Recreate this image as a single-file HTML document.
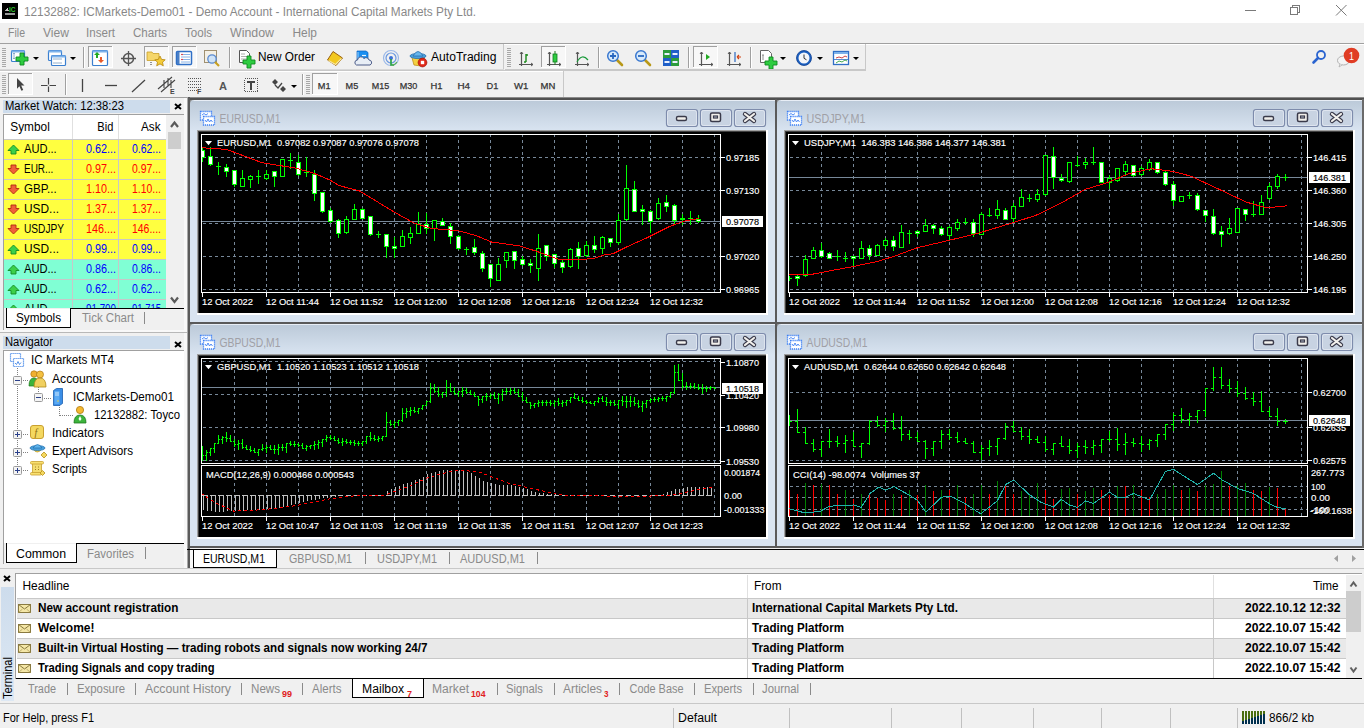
<!DOCTYPE html><html><head><meta charset="utf-8"><style>html,body{margin:0;padding:0;overflow:hidden;background:#f0f0f0;font-family:"Liberation Sans",sans-serif}svg{display:block}text{shape-rendering:auto}</style></head><body><svg width="1364" height="728" viewBox="0 0 1364 728" font-family="Liberation Sans, sans-serif" shape-rendering="crispEdges"><rect x="0" y="0" width="1364" height="728" fill="#f0f0f0" />
<rect x="0" y="0" width="1364" height="23" fill="#ffffff" />
<rect x="2" y="3" width="16" height="16" fill="#000" />
<text x="9" y="12" font-size="7.5" fill="#2ec02e" font-weight="bold" text-anchor="start" textLength="6.5" lengthAdjust="spacingAndGlyphs" xml:space="preserve" shape-rendering="auto">IC</text>
<rect x="5" y="10" width="1" height="1" fill="#aaa" />
<rect x="6" y="9" width="1" height="2" fill="#bbb" />
<rect x="7" y="8" width="1" height="3" fill="#ccc" />
<rect x="8" y="10" width="1" height="1" fill="#caa" />
<rect x="5" y="13" width="10" height="2" fill="#999" />
<text x="24" y="16" font-size="12" fill="#888" font-weight="normal" text-anchor="start" textLength="452" lengthAdjust="spacingAndGlyphs" xml:space="preserve" >12132882: ICMarkets-Demo01 - Demo Account - International Capital Markets Pty Ltd.</text>
<rect x="1245" y="10" width="11" height="1" fill="#7a7a7a" />
<path d="M1290.5 7.5 h7 v7 h-7 z M1292.5 7.5 v-2 h7 v7 h-2" fill="none" stroke="#7a7a7a" stroke-width="1"/>
<path d="M1336 5 L1346.5 15.5 M1346.5 5 L1336 15.5" stroke="#7a7a7a" stroke-width="1" shape-rendering="auto"/>
<text x="8" y="37" font-size="12" fill="#8a8a8a" font-weight="normal" text-anchor="start" textLength="17" lengthAdjust="spacingAndGlyphs" xml:space="preserve" >File</text>
<text x="43" y="37" font-size="12" fill="#8a8a8a" font-weight="normal" text-anchor="start" textLength="26" lengthAdjust="spacingAndGlyphs" xml:space="preserve" >View</text>
<text x="86" y="37" font-size="12" fill="#8a8a8a" font-weight="normal" text-anchor="start" textLength="29" lengthAdjust="spacingAndGlyphs" xml:space="preserve" >Insert</text>
<text x="133" y="37" font-size="12" fill="#8a8a8a" font-weight="normal" text-anchor="start" textLength="34" lengthAdjust="spacingAndGlyphs" xml:space="preserve" >Charts</text>
<text x="185" y="37" font-size="12" fill="#8a8a8a" font-weight="normal" text-anchor="start" textLength="27" lengthAdjust="spacingAndGlyphs" xml:space="preserve" >Tools</text>
<text x="230" y="37" font-size="12" fill="#8a8a8a" font-weight="normal" text-anchor="start" textLength="44" lengthAdjust="spacingAndGlyphs" xml:space="preserve" >Window</text>
<text x="292.5" y="37" font-size="12" fill="#8a8a8a" font-weight="normal" text-anchor="start" textLength="24.5" lengthAdjust="spacingAndGlyphs" xml:space="preserve" >Help</text>
<rect x="0" y="43" width="1364" height="1" fill="#a0a0a0" />
<rect x="0" y="44" width="1364" height="1" fill="#ffffff" />
<rect x="0" y="70" width="866" height="1" fill="#c8c8c8" />
<rect x="0" y="71" width="564" height="1" fill="#ffffff" />
<rect x="0" y="97" width="1364" height="1" fill="#a0a0a0" />
<rect x="0" y="44" width="504" height="26" fill="#f0f0f0" />
<rect x="2" y="48" width="4" height="1" fill="#a8a8a8" />
<rect x="2" y="50" width="4" height="1" fill="#a8a8a8" />
<rect x="2" y="52" width="4" height="1" fill="#a8a8a8" />
<rect x="2" y="54" width="4" height="1" fill="#a8a8a8" />
<rect x="2" y="56" width="4" height="1" fill="#a8a8a8" />
<rect x="2" y="58" width="4" height="1" fill="#a8a8a8" />
<rect x="2" y="60" width="4" height="1" fill="#a8a8a8" />
<rect x="2" y="62" width="4" height="1" fill="#a8a8a8" />
<rect x="2" y="64" width="4" height="1" fill="#a8a8a8" />
<rect x="2" y="66" width="4" height="1" fill="#a8a8a8" />
<g shape-rendering="auto"><rect x="11.5" y="50.5" width="13" height="11" rx="1" fill="#fff" stroke="#3a7fd0" stroke-width="1.2"/><rect x="11.5" y="50.5" width="13" height="2" fill="#7db2ea"/></g>
<g shape-rendering="auto"><path d="M14 53 v6 M13 54 l1 -1 l1 1 M13 58 l1 1 l1 -1" stroke="#7a9cc0" stroke-width="0.8" fill="none"/></g>
<g shape-rendering="auto"><path d="M20.0 53 h4.0 v4.0 h4.0 v4.0 h-4.0 v4.0 h-4.0 v-4.0 h-4.0 v-4.0 h4.0 z" fill="#2ecc40" stroke="#0f8a1f" stroke-width="0.9"/></g>
<path d="M33 57 h6 l-3 3 z" fill="#000" shape-rendering="auto"/>
<g shape-rendering="auto"><rect x="48.5" y="50.5" width="13" height="10" rx="1" fill="#fff" stroke="#3a7fd0" stroke-width="1.2"/><rect x="48.5" y="50.5" width="13" height="2" fill="#7db2ea"/></g>
<g shape-rendering="auto"><rect x="51.5" y="55.5" width="14" height="10" rx="1" fill="#fff" stroke="#3a7fd0" stroke-width="1.2"/><rect x="51.5" y="55.5" width="14" height="2" fill="#7db2ea"/></g>
<g shape-rendering="auto"><path d="M53 59 h9 M53 63 h9" stroke="#7a9cc0" stroke-width="0.8"/></g>
<path d="M70 57 h6 l-3 3 z" fill="#000" shape-rendering="auto"/>
<rect x="83" y="47" width="1" height="21" fill="#a0a0a0" />
<rect x="84" y="47" width="1" height="21" fill="#ffffff" />
<rect x="88" y="46" width="25" height="22" fill="#f7f7f7" />
<rect x="88" y="46" width="25" height="1" fill="#a0a0a0" />
<rect x="88" y="46" width="1" height="22" fill="#a0a0a0" />
<rect x="88" y="67" width="25" height="1" fill="#ffffff" />
<rect x="112" y="46" width="1" height="22" fill="#ffffff" />
<g shape-rendering="auto"><rect x="92.5" y="50.5" width="15" height="15" rx="1" fill="#fff" stroke="#3a7fd0" stroke-width="1.2"/><rect x="92.5" y="50.5" width="15" height="2" fill="#7db2ea"/></g>
<g shape-rendering="auto"><path d="M97 52 l-3 3 h2 v3 h2 v-3 h2 z" fill="#22aa22"/><path d="M101 63 l3 -3 h-2 v-3 h-2 v3 h-2 z" fill="#e85a2a"/></g>
<g shape-rendering="auto"><circle cx="128.5" cy="58.5" r="5" fill="none" stroke="#555" stroke-width="1.5"/><path d="M128.5 51 v15 M121 58.5 h15" stroke="#555" stroke-width="1.3"/></g>
<rect x="144" y="46" width="25" height="22" fill="#f7f7f7" />
<rect x="144" y="46" width="25" height="1" fill="#a0a0a0" />
<rect x="144" y="46" width="1" height="22" fill="#a0a0a0" />
<rect x="144" y="67" width="25" height="1" fill="#ffffff" />
<rect x="168" y="46" width="1" height="22" fill="#ffffff" />
<g shape-rendering="auto"><path d="M147 52 h5 l1 1.5 h6 v7 h-12 z" fill="#f5d66a" stroke="#c9a02a" stroke-width="0.8"/><path d="M160 56 l1.6 3.4 l3.6 .4 l-2.7 2.4 l.8 3.6 l-3.3 -1.9 l-3.3 1.9 l.8 -3.6 l-2.7 -2.4 l3.6 -.4 z" fill="#f4cc3a" stroke="#b8860b" stroke-width="0.8"/><path d="M151 62 v4" stroke="#333" stroke-dasharray="1 1"/></g>
<rect x="172" y="46" width="25" height="22" fill="#f7f7f7" />
<rect x="172" y="46" width="25" height="1" fill="#a0a0a0" />
<rect x="172" y="46" width="1" height="22" fill="#a0a0a0" />
<rect x="172" y="67" width="25" height="1" fill="#ffffff" />
<rect x="196" y="46" width="1" height="22" fill="#ffffff" />
<g shape-rendering="auto"><rect x="176.5" y="51.5" width="15" height="13" rx="1" fill="#fff" stroke="#2f6fc6" stroke-width="1.5"/><rect x="177" y="52" width="2.5" height="12" fill="#4a7fc6"/><path d="M181 54.5 h9 M181 57 h9 M181 59.5 h9 M181 62 h9" stroke="#6aa0e0" stroke-width="0.8"/><circle cx="182" cy="54.5" r=".8" fill="#e22"/><circle cx="182" cy="59.5" r=".8" fill="#e22"/></g>
<g shape-rendering="auto"><rect x="204.5" y="50.5" width="12" height="12" fill="#f4f0e6" stroke="#a09070" stroke-width="1"/><circle cx="212" cy="59" r="4.2" fill="#cfe3f7" stroke="#5a8ad0" stroke-width="1.3"/><path d="M215 62 l4 4" stroke="#c9a020" stroke-width="2.2"/></g>
<rect x="229" y="47" width="1" height="21" fill="#a0a0a0" />
<rect x="230" y="47" width="1" height="21" fill="#ffffff" />
<g shape-rendering="auto"><path d="M239.5 50.5 h7 l3 3 v9 h-10 z" fill="#fff" stroke="#555" stroke-width="1"/><path d="M241 54 h4 M241 56.5 h6 M241 59 h6" stroke="#999" stroke-width="0.8"/></g>
<g shape-rendering="auto"><path d="M247.0 56 h4.0 v4.0 h4.0 v4.0 h-4.0 v4.0 h-4.0 v-4.0 h-4.0 v-4.0 h4.0 z" fill="#2ecc40" stroke="#0f8a1f" stroke-width="0.9"/></g>
<text x="258" y="61" font-size="12.5" fill="#000" font-weight="normal" text-anchor="start" textLength="57" lengthAdjust="spacingAndGlyphs" xml:space="preserve" >New Order</text>
<g shape-rendering="auto"><path d="M327.5 60 L333 51.5 L342.5 58 L336 65.5 Z" fill="#f2c820" stroke="#9a6010" stroke-width="1"/><path d="M328.5 60.5 L335.5 64.5 L341.5 58.5" stroke="#f8e8a0" stroke-width="1.2" fill="none"/></g>
<g shape-rendering="auto"><path d="M357 51 h9 l2 1.5 v8 h-11 z" fill="#1a8ef0" stroke="#0a60c0" stroke-width="0.7"/><path d="M358 52 v7" stroke="#bfe4ff" stroke-width="0.8"/><path d="M362 55.5 h4" stroke="#e8f4ff" stroke-width="1.2"/><path d="M356.5 65 a2.6 2.6 0 0 1 1 -5 a3.5 3.5 0 0 1 6.5 -1.5 a3 3 0 0 1 5 1.5 a2.6 2.6 0 0 1 1 5 z" fill="#e8eef6" stroke="#4a5a88" stroke-width="1"/></g>
<g shape-rendering="auto"><circle cx="391" cy="58" r="7.5" fill="none" stroke="#9ab8e8" stroke-width="1.2"/><circle cx="391" cy="58" r="5" fill="none" stroke="#6a98e0" stroke-width="1.2"/><circle cx="391" cy="58" r="2" fill="#3a70d8"/><path d="M391 59 v6 h3" stroke="#22a040" stroke-width="1.6" fill="none"/><path d="M397 62 a7.5 7.5 0 0 1 -6 3.5" stroke="#5ab05a" stroke-width="1.2" fill="none"/></g>
<g shape-rendering="auto"><path d="M411.5 56 L425 56 L421 66 L414 65 Z" fill="#f4d040" stroke="#c09018" stroke-width="0.8"/><ellipse cx="418" cy="56" rx="8" ry="2.6" fill="#4aa0dc" stroke="#2a70b0" stroke-width="0.8"/><path d="M413 56 q5 -9 10 0 z" fill="#68b6ec" stroke="#2a70b0" stroke-width="0.8"/><circle cx="422.5" cy="62.5" r="4.4" fill="#e02818" stroke="#a01008" stroke-width="0.7"/><rect x="420.8" y="60.8" width="3.4" height="3.4" fill="#fff"/></g>
<text x="431" y="61" font-size="12.5" fill="#000" font-weight="normal" text-anchor="start" textLength="65.5" lengthAdjust="spacingAndGlyphs" xml:space="preserve" >AutoTrading</text>
<rect x="503" y="44" width="1" height="26" fill="#c8c8c8" />
<rect x="0" y="69" width="504" height="1" fill="#d8d8d8" />
<rect x="507" y="48" width="4" height="1" fill="#a8a8a8" />
<rect x="507" y="50" width="4" height="1" fill="#a8a8a8" />
<rect x="507" y="52" width="4" height="1" fill="#a8a8a8" />
<rect x="507" y="54" width="4" height="1" fill="#a8a8a8" />
<rect x="507" y="56" width="4" height="1" fill="#a8a8a8" />
<rect x="507" y="58" width="4" height="1" fill="#a8a8a8" />
<rect x="507" y="60" width="4" height="1" fill="#a8a8a8" />
<rect x="507" y="62" width="4" height="1" fill="#a8a8a8" />
<rect x="507" y="64" width="4" height="1" fill="#a8a8a8" />
<rect x="507" y="66" width="4" height="1" fill="#a8a8a8" />
<g shape-rendering="auto"><path d="M521.5 52 v14 M519 64.5 h14" stroke="#555" stroke-width="1.2" fill="none"/><path d="M520 54 l1.5 -2 l1.5 2 M531 63 l2 1.5 l-2 1.5" stroke="#555" stroke-width="1" fill="none"/></g>
<g shape-rendering="auto"><path d="M526 62 v-8 M524 62 h2 M526 55 h2" stroke="#1a8a1a" stroke-width="1.4" fill="none"/></g>
<rect x="541" y="46" width="25" height="22" fill="#f7f7f7" />
<rect x="541" y="46" width="25" height="1" fill="#a0a0a0" />
<rect x="541" y="46" width="1" height="22" fill="#a0a0a0" />
<rect x="541" y="67" width="25" height="1" fill="#ffffff" />
<rect x="565" y="46" width="1" height="22" fill="#ffffff" />
<g shape-rendering="auto"><path d="M549.5 52 v14 M547 64.5 h14" stroke="#555" stroke-width="1.2" fill="none"/><path d="M548 54 l1.5 -2 l1.5 2 M559 63 l2 1.5 l-2 1.5" stroke="#555" stroke-width="1" fill="none"/></g>
<g shape-rendering="auto"><path d="M555 51 v14" stroke="#1a7a1a" stroke-width="1"/><rect x="553" y="54" width="4" height="8" fill="#2ecc40" stroke="#0f7a1f" stroke-width="0.8"/></g>
<g shape-rendering="auto"><path d="M577.5 52 v14 M575 64.5 h14" stroke="#555" stroke-width="1.2" fill="none"/><path d="M576 54 l1.5 -2 l1.5 2 M587 63 l2 1.5 l-2 1.5" stroke="#555" stroke-width="1" fill="none"/></g>
<g shape-rendering="auto"><path d="M577 62 q5 -9 11 -2" stroke="#1a9a3a" stroke-width="1.2" fill="none"/></g>
<rect x="598" y="47" width="1" height="21" fill="#a0a0a0" />
<rect x="599" y="47" width="1" height="21" fill="#ffffff" />
<g shape-rendering="auto"><path d="M616 59 l6 6" stroke="#b89818" stroke-width="2.6" stroke-linecap="round"/><circle cx="613" cy="56" r="5.3" fill="#d8eafa" stroke="#3a78d0" stroke-width="1.5"/><path d="M610 56 h6 M613 53 v6" stroke="#2a68c0" stroke-width="1.8"/></g>
<g shape-rendering="auto"><path d="M644 59 l6 6" stroke="#b89818" stroke-width="2.6" stroke-linecap="round"/><circle cx="641" cy="56" r="5.3" fill="#d8eafa" stroke="#3a78d0" stroke-width="1.5"/><path d="M638 56 h6" stroke="#2a68c0" stroke-width="1.8"/></g>
<g shape-rendering="auto"><rect x="663" y="50" width="8" height="8" fill="#2c9c3c"/><rect x="671" y="50" width="8" height="8" fill="#1f5fc8"/><rect x="663" y="58" width="8" height="8" fill="#1f5fc8"/><rect x="671" y="58" width="8" height="8" fill="#2c9c3c"/><path d="M664.5 54 h5 M672.5 54 h5 M664.5 62 h5 M672.5 62 h5" stroke="#e8f0ff" stroke-width="2"/></g>
<rect x="688" y="47" width="1" height="21" fill="#a0a0a0" />
<rect x="689" y="47" width="1" height="21" fill="#ffffff" />
<rect x="693" y="46" width="25" height="22" fill="#f7f7f7" />
<rect x="693" y="46" width="25" height="1" fill="#a0a0a0" />
<rect x="693" y="46" width="1" height="22" fill="#a0a0a0" />
<rect x="693" y="67" width="25" height="1" fill="#ffffff" />
<rect x="717" y="46" width="1" height="22" fill="#ffffff" />
<g shape-rendering="auto"><path d="M701.5 52 v14 M699 64.5 h14" stroke="#555" stroke-width="1.2" fill="none"/><path d="M700 54 l1.5 -2 l1.5 2 M711 63 l2 1.5 l-2 1.5" stroke="#555" stroke-width="1" fill="none"/></g>
<g shape-rendering="auto"><path d="M706 54 v6 l4 -3 z" fill="#22aa22"/></g>
<g shape-rendering="auto"><path d="M729.5 52 v14 M727 64.5 h14" stroke="#555" stroke-width="1.2" fill="none"/><path d="M728 54 l1.5 -2 l1.5 2 M739 63 l2 1.5 l-2 1.5" stroke="#555" stroke-width="1" fill="none"/></g>
<g shape-rendering="auto"><path d="M735 52 v10" stroke="#2a68c0" stroke-width="1.2"/><path d="M737 57 h4 M737 57 l2 -2 M737 57 l2 2" stroke="#d04010" stroke-width="1.1" fill="none"/></g>
<rect x="750" y="47" width="1" height="21" fill="#a0a0a0" />
<rect x="751" y="47" width="1" height="21" fill="#ffffff" />
<g shape-rendering="auto"><path d="M760.5 50.5 h8 l3 3 v9 h-11 z" fill="#fff" stroke="#666" stroke-width="1"/><path d="M763 55 v5 M762 55 h2" stroke="#777" stroke-width="0.8"/></g>
<g shape-rendering="auto"><path d="M769.0 57 h4.0 v4.0 h4.0 v4.0 h-4.0 v4.0 h-4.0 v-4.0 h-4.0 v-4.0 h4.0 z" fill="#2ecc40" stroke="#0f8a1f" stroke-width="0.9"/></g>
<path d="M780 57 h6 l-3 3 z" fill="#000" shape-rendering="auto"/>
<g shape-rendering="auto"><circle cx="804" cy="58" r="7.5" fill="#1a5fc0" stroke="#0f3f90" stroke-width="0.8"/><circle cx="804" cy="58" r="5.5" fill="#f4f6fa"/><path d="M804 54.5 v3.8 l2.5 1.5" stroke="#333" stroke-width="1" fill="none"/></g>
<path d="M817 57 h6 l-3 3 z" fill="#000" shape-rendering="auto"/>
<g shape-rendering="auto"><rect x="833.5" y="51.5" width="15" height="13" fill="#fff" stroke="#2f6fc6" stroke-width="1.3"/><rect x="834" y="52" width="14" height="2" fill="#7db2ea"/><path d="M836 58 l3 -1 l3 1 l3 -2 l2 1" stroke="#c83030" stroke-width="0.9" fill="none"/><path d="M834 59.5 h14" stroke="#2f6fc6" stroke-width="0.8"/><path d="M836 63 l3 -2 l3 1 l3 -2 l2 1" stroke="#30a040" stroke-width="0.9" fill="none"/></g>
<path d="M853 57 h6 l-3 3 z" fill="#000" shape-rendering="auto"/>
<rect x="865" y="44" width="1" height="26" fill="#c8c8c8" />
<rect x="505" y="69" width="361" height="1" fill="#c8c8c8" />
<g shape-rendering="auto"><circle cx="1321" cy="55" r="4" fill="none" stroke="#2a64d0" stroke-width="1.8"/><path d="M1318 58 l-4.5 4.5" stroke="#2a64d0" stroke-width="2.6" stroke-linecap="round"/></g>
<g shape-rendering="auto"><ellipse cx="1343.5" cy="60.5" rx="6" ry="4.5" fill="#f4f4f4" stroke="#b0b0b0" stroke-width="1"/><path d="M1340 64 l-1 3 l3 -2" fill="#f4f4f4" stroke="#b0b0b0" stroke-width="0.8"/><circle cx="1351.5" cy="55.5" r="7.8" fill="#e03c24"/></g>
<text x="1349" y="60" font-size="11" fill="#fff" font-weight="normal" text-anchor="start" textLength="5" lengthAdjust="spacingAndGlyphs" xml:space="preserve" shape-rendering="auto">1</text>
<rect x="2" y="75" width="4" height="1" fill="#a8a8a8" />
<rect x="2" y="77" width="4" height="1" fill="#a8a8a8" />
<rect x="2" y="79" width="4" height="1" fill="#a8a8a8" />
<rect x="2" y="81" width="4" height="1" fill="#a8a8a8" />
<rect x="2" y="83" width="4" height="1" fill="#a8a8a8" />
<rect x="2" y="85" width="4" height="1" fill="#a8a8a8" />
<rect x="2" y="87" width="4" height="1" fill="#a8a8a8" />
<rect x="2" y="89" width="4" height="1" fill="#a8a8a8" />
<rect x="2" y="91" width="4" height="1" fill="#a8a8a8" />
<rect x="2" y="93" width="4" height="1" fill="#a8a8a8" />
<rect x="8" y="73" width="25" height="22" fill="#f7f7f7" />
<rect x="8" y="73" width="25" height="1" fill="#a0a0a0" />
<rect x="8" y="73" width="1" height="22" fill="#a0a0a0" />
<rect x="8" y="94" width="25" height="1" fill="#ffffff" />
<rect x="32" y="73" width="1" height="22" fill="#ffffff" />
<g shape-rendering="auto"><path d="M17 78 l7.5 7.5 h-3.3 l2 4.5 l-1.8 .8 l-2 -4.5 l-2.4 2.4 z" fill="#444"/></g>
<g shape-rendering="auto"><path d="M48.5 78 v14 M41 85.5 h15" stroke="#444" stroke-width="1.2"/><rect x="47.5" y="84.5" width="2" height="2" fill="#f0f0f0"/></g>
<rect x="65" y="74" width="1" height="21" fill="#a0a0a0" />
<rect x="66" y="74" width="1" height="21" fill="#ffffff" />
<g shape-rendering="auto"><path d="M82.5 79 v13" stroke="#444" stroke-width="1.3"/><path d="M105 85.5 h12" stroke="#444" stroke-width="1.3"/><path d="M132 92 l13 -12" stroke="#444" stroke-width="1.2"/></g>
<g shape-rendering="auto"><path d="M158 89 l14 -12 M161 92 l14 -12 M164 80 v8 M168 78 v8 M171 80 v8" stroke="#444" stroke-width="1.1" fill="none"/></g>
<text x="170" y="94" font-size="7" fill="#444" font-weight="bold" text-anchor="start" xml:space="preserve" >E</text>
<g shape-rendering="auto"><path d="M188 78.5 h13 M188 81.5 h13 M188 84.5 h13 M188 87.5 h13 M188 90.5 h9" stroke="#555" stroke-width="1" stroke-dasharray="1 1" fill="none"/></g>
<text x="197" y="94" font-size="7" fill="#444" font-weight="bold" text-anchor="start" xml:space="preserve" >F</text>
<text x="219" y="90" font-size="11" fill="#555" font-weight="bold" text-anchor="start" textLength="8" lengthAdjust="spacingAndGlyphs" xml:space="preserve" >A</text>
<rect x="244.5" y="78.5" width="13" height="13" fill="none" stroke="#555" stroke-dasharray="1 1"/>
<g shape-rendering="auto"><path d="M247 82 h8 M251 82 v8" stroke="#444" stroke-width="2"/></g>
<g shape-rendering="auto"><path d="M272 82 l3 -3 l3 3 l-3 3 z M280 89 l3 -3 l3 3 l-3 3 z" fill="#444"/><path d="M275 85 l3 3 l4 -5" stroke="#444" stroke-width="1.3" fill="none"/></g>
<path d="M291 85 h6 l-3 3 z" fill="#000" shape-rendering="auto"/>
<rect x="302" y="74" width="1" height="21" fill="#a0a0a0" />
<rect x="303" y="74" width="1" height="21" fill="#ffffff" />
<rect x="563" y="71" width="1" height="26" fill="#c8c8c8" />
<rect x="306" y="75" width="4" height="1" fill="#a8a8a8" />
<rect x="306" y="77" width="4" height="1" fill="#a8a8a8" />
<rect x="306" y="79" width="4" height="1" fill="#a8a8a8" />
<rect x="306" y="81" width="4" height="1" fill="#a8a8a8" />
<rect x="306" y="83" width="4" height="1" fill="#a8a8a8" />
<rect x="306" y="85" width="4" height="1" fill="#a8a8a8" />
<rect x="306" y="87" width="4" height="1" fill="#a8a8a8" />
<rect x="306" y="89" width="4" height="1" fill="#a8a8a8" />
<rect x="306" y="91" width="4" height="1" fill="#a8a8a8" />
<rect x="306" y="93" width="4" height="1" fill="#a8a8a8" />
<rect x="312" y="73" width="26" height="22" fill="#f7f7f7" />
<rect x="312" y="73" width="26" height="1" fill="#a0a0a0" />
<rect x="312" y="73" width="1" height="22" fill="#a0a0a0" />
<rect x="312" y="94" width="26" height="1" fill="#ffffff" />
<rect x="337" y="73" width="1" height="22" fill="#ffffff" />
<text x="317.8" y="89" font-size="9.5" fill="#333" font-weight="normal" text-anchor="start" textLength="12.8" lengthAdjust="spacingAndGlyphs" xml:space="preserve" stroke="#333" stroke-width="0.25" shape-rendering="auto">M1</text>
<text x="345.6" y="89" font-size="9.5" fill="#333" font-weight="normal" text-anchor="start" textLength="12.6" lengthAdjust="spacingAndGlyphs" xml:space="preserve" stroke="#333" stroke-width="0.25" shape-rendering="auto">M5</text>
<text x="371.8" y="89" font-size="9.5" fill="#333" font-weight="normal" text-anchor="start" textLength="17.4" lengthAdjust="spacingAndGlyphs" xml:space="preserve" stroke="#333" stroke-width="0.25" shape-rendering="auto">M15</text>
<text x="399.8" y="89" font-size="9.5" fill="#333" font-weight="normal" text-anchor="start" textLength="17.6" lengthAdjust="spacingAndGlyphs" xml:space="preserve" stroke="#333" stroke-width="0.25" shape-rendering="auto">M30</text>
<text x="430.5" y="89" font-size="9.5" fill="#333" font-weight="normal" text-anchor="start" textLength="12" lengthAdjust="spacingAndGlyphs" xml:space="preserve" stroke="#333" stroke-width="0.25" shape-rendering="auto">H1</text>
<text x="457.4" y="89" font-size="9.5" fill="#333" font-weight="normal" text-anchor="start" textLength="12.6" lengthAdjust="spacingAndGlyphs" xml:space="preserve" stroke="#333" stroke-width="0.25" shape-rendering="auto">H4</text>
<text x="486.5" y="89" font-size="9.5" fill="#333" font-weight="normal" text-anchor="start" textLength="11.8" lengthAdjust="spacingAndGlyphs" xml:space="preserve" stroke="#333" stroke-width="0.25" shape-rendering="auto">D1</text>
<text x="514" y="89" font-size="9.5" fill="#333" font-weight="normal" text-anchor="start" textLength="14.4" lengthAdjust="spacingAndGlyphs" xml:space="preserve" stroke="#333" stroke-width="0.25" shape-rendering="auto">W1</text>
<text x="540.5" y="89" font-size="9.5" fill="#333" font-weight="normal" text-anchor="start" textLength="14.8" lengthAdjust="spacingAndGlyphs" xml:space="preserve" stroke="#333" stroke-width="0.25" shape-rendering="auto">MN</text>
<rect x="0" y="98" width="188" height="470" fill="#f0f0f0" />
<rect x="3" y="100" width="167" height="13" fill="#cddcec" />
<text x="5" y="110" font-size="12" fill="#000" font-weight="normal" text-anchor="start" textLength="119" lengthAdjust="spacingAndGlyphs" xml:space="preserve" >Market Watch: 12:38:23</text>
<path d="M175 104 L181 109 M181 104 L175 109" stroke="#000" stroke-width="2" shape-rendering="auto"/>
<rect x="3" y="114" width="181" height="195" fill="#ffffff" />
<rect x="3" y="114" width="1" height="195" fill="#a0a0a0" />
<rect x="3" y="114" width="181" height="1" fill="#a0a0a0" />
<text x="10.3" y="131" font-size="12.3" fill="#000" font-weight="normal" text-anchor="start" textLength="39.5" lengthAdjust="spacingAndGlyphs" xml:space="preserve" >Symbol</text>
<text x="97.3" y="131" font-size="12.3" fill="#000" font-weight="normal" text-anchor="start" textLength="16" lengthAdjust="spacingAndGlyphs" xml:space="preserve" >Bid</text>
<text x="141" y="131" font-size="12.3" fill="#000" font-weight="normal" text-anchor="start" textLength="19.5" lengthAdjust="spacingAndGlyphs" xml:space="preserve" >Ask</text>
<rect x="72" y="115" width="1" height="24" fill="#e0e0e0" />
<rect x="118" y="115" width="1" height="24" fill="#e0e0e0" />
<rect x="4" y="139" width="162" height="20" fill="#ffff40" />
<rect x="4" y="139" width="162" height="1" fill="#c8c8c8" />
<rect x="72" y="139" width="1" height="20" fill="#c8c8c8" />
<rect x="118" y="139" width="1" height="20" fill="#c8c8c8" />
<rect x="4" y="159" width="162" height="20" fill="#ffff40" />
<rect x="4" y="159" width="162" height="1" fill="#c8c8c8" />
<rect x="72" y="159" width="1" height="20" fill="#c8c8c8" />
<rect x="118" y="159" width="1" height="20" fill="#c8c8c8" />
<rect x="4" y="179" width="162" height="20" fill="#ffff40" />
<rect x="4" y="179" width="162" height="1" fill="#c8c8c8" />
<rect x="72" y="179" width="1" height="20" fill="#c8c8c8" />
<rect x="118" y="179" width="1" height="20" fill="#c8c8c8" />
<rect x="4" y="199" width="162" height="20" fill="#ffff40" />
<rect x="4" y="199" width="162" height="1" fill="#c8c8c8" />
<rect x="72" y="199" width="1" height="20" fill="#c8c8c8" />
<rect x="118" y="199" width="1" height="20" fill="#c8c8c8" />
<rect x="4" y="219" width="162" height="20" fill="#ffff40" />
<rect x="4" y="219" width="162" height="1" fill="#c8c8c8" />
<rect x="72" y="219" width="1" height="20" fill="#c8c8c8" />
<rect x="118" y="219" width="1" height="20" fill="#c8c8c8" />
<rect x="4" y="239" width="162" height="20" fill="#ffff40" />
<rect x="4" y="239" width="162" height="1" fill="#c8c8c8" />
<rect x="72" y="239" width="1" height="20" fill="#c8c8c8" />
<rect x="118" y="239" width="1" height="20" fill="#c8c8c8" />
<rect x="4" y="259" width="162" height="20" fill="#80ffd4" />
<rect x="4" y="259" width="162" height="1" fill="#c8c8c8" />
<rect x="72" y="259" width="1" height="20" fill="#c8c8c8" />
<rect x="118" y="259" width="1" height="20" fill="#c8c8c8" />
<rect x="4" y="279" width="162" height="20" fill="#80ffd4" />
<rect x="4" y="279" width="162" height="1" fill="#c8c8c8" />
<rect x="72" y="279" width="1" height="20" fill="#c8c8c8" />
<rect x="118" y="279" width="1" height="20" fill="#c8c8c8" />
<rect x="4" y="299" width="162" height="9" fill="#80ffd4" />
<rect x="4" y="299" width="162" height="1" fill="#c8c8c8" />
<rect x="72" y="299" width="1" height="9" fill="#c8c8c8" />
<rect x="118" y="299" width="1" height="9" fill="#c8c8c8" />
<path d="M13.5 145 L19 150.5 H16 V154 H11 V150.5 H8 Z" fill="#3ccf4a" stroke="#138a22" stroke-width="0.9" shape-rendering="auto"/>
<text x="24" y="153" font-size="12.3" fill="#000" font-weight="normal" text-anchor="start" textLength="32.7" lengthAdjust="spacingAndGlyphs" xml:space="preserve" >AUD...</text>
<text x="86" y="153" font-size="12.3" fill="#0000ff" font-weight="normal" text-anchor="start" textLength="30" lengthAdjust="spacingAndGlyphs" xml:space="preserve" >0.62...</text>
<text x="132" y="153" font-size="12.3" fill="#0000ff" font-weight="normal" text-anchor="start" textLength="29" lengthAdjust="spacingAndGlyphs" xml:space="preserve" >0.62...</text>
<path d="M11 165 H16 V168.5 H19 L13.5 174 L8 168.5 H11 Z" fill="#f0603a" stroke="#b02a10" stroke-width="0.9" shape-rendering="auto"/>
<text x="24" y="173" font-size="12.3" fill="#000" font-weight="normal" text-anchor="start" textLength="29.3" lengthAdjust="spacingAndGlyphs" xml:space="preserve" >EUR...</text>
<text x="86" y="173" font-size="12.3" fill="#ff0000" font-weight="normal" text-anchor="start" textLength="30" lengthAdjust="spacingAndGlyphs" xml:space="preserve" >0.97...</text>
<text x="132" y="173" font-size="12.3" fill="#ff0000" font-weight="normal" text-anchor="start" textLength="29" lengthAdjust="spacingAndGlyphs" xml:space="preserve" >0.97...</text>
<path d="M11 185 H16 V188.5 H19 L13.5 194 L8 188.5 H11 Z" fill="#f0603a" stroke="#b02a10" stroke-width="0.9" shape-rendering="auto"/>
<text x="24" y="193" font-size="12.3" fill="#000" font-weight="normal" text-anchor="start" textLength="32.6" lengthAdjust="spacingAndGlyphs" xml:space="preserve" >GBP...</text>
<text x="86" y="193" font-size="12.3" fill="#ff0000" font-weight="normal" text-anchor="start" textLength="30" lengthAdjust="spacingAndGlyphs" xml:space="preserve" >1.10...</text>
<text x="132" y="193" font-size="12.3" fill="#ff0000" font-weight="normal" text-anchor="start" textLength="29" lengthAdjust="spacingAndGlyphs" xml:space="preserve" >1.10...</text>
<path d="M11 205 H16 V208.5 H19 L13.5 214 L8 208.5 H11 Z" fill="#f0603a" stroke="#b02a10" stroke-width="0.9" shape-rendering="auto"/>
<text x="24" y="213" font-size="12.3" fill="#000" font-weight="normal" text-anchor="start" textLength="35" lengthAdjust="spacingAndGlyphs" xml:space="preserve" >USD...</text>
<text x="86" y="213" font-size="12.3" fill="#ff0000" font-weight="normal" text-anchor="start" textLength="30" lengthAdjust="spacingAndGlyphs" xml:space="preserve" >1.37...</text>
<text x="132" y="213" font-size="12.3" fill="#ff0000" font-weight="normal" text-anchor="start" textLength="29" lengthAdjust="spacingAndGlyphs" xml:space="preserve" >1.37...</text>
<path d="M11 225 H16 V228.5 H19 L13.5 234 L8 228.5 H11 Z" fill="#f0603a" stroke="#b02a10" stroke-width="0.9" shape-rendering="auto"/>
<text x="24" y="233" font-size="12.3" fill="#000" font-weight="normal" text-anchor="start" textLength="40" lengthAdjust="spacingAndGlyphs" xml:space="preserve" >USDJPY</text>
<text x="86" y="233" font-size="12.3" fill="#ff0000" font-weight="normal" text-anchor="start" textLength="30" lengthAdjust="spacingAndGlyphs" xml:space="preserve" >146....</text>
<text x="132" y="233" font-size="12.3" fill="#ff0000" font-weight="normal" text-anchor="start" textLength="29" lengthAdjust="spacingAndGlyphs" xml:space="preserve" >146....</text>
<path d="M13.5 245 L19 250.5 H16 V254 H11 V250.5 H8 Z" fill="#3ccf4a" stroke="#138a22" stroke-width="0.9" shape-rendering="auto"/>
<text x="24" y="253" font-size="12.3" fill="#000" font-weight="normal" text-anchor="start" textLength="35" lengthAdjust="spacingAndGlyphs" xml:space="preserve" >USD...</text>
<text x="86" y="253" font-size="12.3" fill="#0000ff" font-weight="normal" text-anchor="start" textLength="30" lengthAdjust="spacingAndGlyphs" xml:space="preserve" >0.99...</text>
<text x="132" y="253" font-size="12.3" fill="#0000ff" font-weight="normal" text-anchor="start" textLength="29" lengthAdjust="spacingAndGlyphs" xml:space="preserve" >0.99...</text>
<path d="M13.5 265 L19 270.5 H16 V274 H11 V270.5 H8 Z" fill="#3ccf4a" stroke="#138a22" stroke-width="0.9" shape-rendering="auto"/>
<text x="24" y="273" font-size="12.3" fill="#000" font-weight="normal" text-anchor="start" textLength="32.7" lengthAdjust="spacingAndGlyphs" xml:space="preserve" >AUD...</text>
<text x="86" y="273" font-size="12.3" fill="#0000ff" font-weight="normal" text-anchor="start" textLength="30" lengthAdjust="spacingAndGlyphs" xml:space="preserve" >0.86...</text>
<text x="132" y="273" font-size="12.3" fill="#0000ff" font-weight="normal" text-anchor="start" textLength="29" lengthAdjust="spacingAndGlyphs" xml:space="preserve" >0.86...</text>
<path d="M13.5 285 L19 290.5 H16 V294 H11 V290.5 H8 Z" fill="#3ccf4a" stroke="#138a22" stroke-width="0.9" shape-rendering="auto"/>
<text x="24" y="293" font-size="12.3" fill="#000" font-weight="normal" text-anchor="start" textLength="32.7" lengthAdjust="spacingAndGlyphs" xml:space="preserve" >AUD...</text>
<text x="86" y="293" font-size="12.3" fill="#0000ff" font-weight="normal" text-anchor="start" textLength="30" lengthAdjust="spacingAndGlyphs" xml:space="preserve" >0.62...</text>
<text x="132" y="293" font-size="12.3" fill="#0000ff" font-weight="normal" text-anchor="start" textLength="29" lengthAdjust="spacingAndGlyphs" xml:space="preserve" >0.62...</text>
<path d="M13.5 305 L19 310.5 H16 V314 H11 V310.5 H8 Z" fill="#3ccf4a" stroke="#138a22" stroke-width="0.9" shape-rendering="auto"/>
<text x="24" y="313" font-size="12.3" fill="#000" font-weight="normal" text-anchor="start" textLength="32.7" lengthAdjust="spacingAndGlyphs" xml:space="preserve" >AUD...</text>
<text x="86" y="313" font-size="12.3" fill="#0000ff" font-weight="normal" text-anchor="start" textLength="30" lengthAdjust="spacingAndGlyphs" xml:space="preserve" >91.700</text>
<text x="132" y="313" font-size="12.3" fill="#0000ff" font-weight="normal" text-anchor="start" textLength="29" lengthAdjust="spacingAndGlyphs" xml:space="preserve" >91.715</text>
<rect x="3" y="308" width="181" height="22" fill="#f0f0f0" />
<rect x="166" y="115" width="18" height="193" fill="#f0f0f0" />
<rect x="168" y="132" width="13" height="17" fill="#cdcdcd" />
<path d="M171 127 L174.5 122.5 L178 127" fill="none" stroke="#5a5a5a" stroke-width="2.2" shape-rendering="auto"/>
<path d="M171 297.5 L174.5 302 L178 297.5" fill="none" stroke="#5a5a5a" stroke-width="2.2" shape-rendering="auto"/>
<rect x="71" y="308" width="113" height="1" fill="#000" />
<rect x="3" y="308" width="1" height="22" fill="#a0a0a0" />
<rect x="7" y="309" width="63" height="18" fill="#fff" />
<rect x="6" y="308" width="1" height="20" fill="#000" />
<rect x="6" y="327" width="65" height="1" fill="#000" />
<rect x="70" y="308" width="1" height="20" fill="#000" />
<text x="16" y="322" font-size="12.3" fill="#000" font-weight="normal" text-anchor="start" textLength="45" lengthAdjust="spacingAndGlyphs" xml:space="preserve" >Symbols</text>
<text x="82" y="322" font-size="12" fill="#8a8a8a" font-weight="normal" text-anchor="start" textLength="52" lengthAdjust="spacingAndGlyphs" xml:space="preserve" >Tick Chart</text>
<rect x="144" y="312" width="1" height="12" fill="#8a8a8a" />
<rect x="184" y="98" width="3" height="470" fill="#f8f8f8" />
<rect x="0" y="330" width="187" height="2" fill="#f8f8f8" />
<rect x="0" y="332" width="187" height="1" fill="#b8b8b8" />
<rect x="3" y="336" width="167" height="13" fill="#cddcec" />
<text x="5" y="346" font-size="12" fill="#000" font-weight="normal" text-anchor="start" textLength="48" lengthAdjust="spacingAndGlyphs" xml:space="preserve" >Navigator</text>
<path d="M175 342 L181 347 M181 342 L175 347" stroke="#000" stroke-width="2" shape-rendering="auto"/>
<rect x="3" y="350" width="181" height="193" fill="#ffffff" />
<rect x="3" y="350" width="1" height="214" fill="#a0a0a0" />
<rect x="3" y="350" width="181" height="1" fill="#a0a0a0" />
<text x="31" y="364" font-size="12" fill="#000" font-weight="normal" text-anchor="start" textLength="83" lengthAdjust="spacingAndGlyphs" xml:space="preserve" >IC Markets MT4</text>
<text x="52" y="383" font-size="12" fill="#000" font-weight="normal" text-anchor="start" textLength="50" lengthAdjust="spacingAndGlyphs" xml:space="preserve" >Accounts</text>
<text x="73" y="401" font-size="12" fill="#000" font-weight="normal" text-anchor="start" textLength="101" lengthAdjust="spacingAndGlyphs" xml:space="preserve" >ICMarkets-Demo01</text>
<text x="94" y="419" font-size="12" fill="#000" font-weight="normal" text-anchor="start" textLength="86" lengthAdjust="spacingAndGlyphs" xml:space="preserve" >12132882: Toyco</text>
<text x="52" y="437" font-size="12" fill="#000" font-weight="normal" text-anchor="start" textLength="52" lengthAdjust="spacingAndGlyphs" xml:space="preserve" >Indicators</text>
<text x="52" y="455" font-size="12" fill="#000" font-weight="normal" text-anchor="start" textLength="81" lengthAdjust="spacingAndGlyphs" xml:space="preserve" >Expert Advisors</text>
<text x="52" y="473" font-size="12" fill="#000" font-weight="normal" text-anchor="start" textLength="35" lengthAdjust="spacingAndGlyphs" xml:space="preserve" >Scripts</text>
<rect x="17" y="368" width="1" height="1" fill="#808080" />
<rect x="17" y="370" width="1" height="1" fill="#808080" />
<rect x="17" y="372" width="1" height="1" fill="#808080" />
<rect x="17" y="374" width="1" height="1" fill="#808080" />
<rect x="17" y="376" width="1" height="1" fill="#808080" />
<rect x="17" y="378" width="1" height="1" fill="#808080" />
<rect x="17" y="380" width="1" height="1" fill="#808080" />
<rect x="17" y="382" width="1" height="1" fill="#808080" />
<rect x="17" y="384" width="1" height="1" fill="#808080" />
<rect x="17" y="386" width="1" height="1" fill="#808080" />
<rect x="17" y="388" width="1" height="1" fill="#808080" />
<rect x="17" y="390" width="1" height="1" fill="#808080" />
<rect x="17" y="392" width="1" height="1" fill="#808080" />
<rect x="17" y="394" width="1" height="1" fill="#808080" />
<rect x="17" y="396" width="1" height="1" fill="#808080" />
<rect x="17" y="398" width="1" height="1" fill="#808080" />
<rect x="17" y="400" width="1" height="1" fill="#808080" />
<rect x="17" y="402" width="1" height="1" fill="#808080" />
<rect x="17" y="404" width="1" height="1" fill="#808080" />
<rect x="17" y="406" width="1" height="1" fill="#808080" />
<rect x="17" y="408" width="1" height="1" fill="#808080" />
<rect x="17" y="410" width="1" height="1" fill="#808080" />
<rect x="17" y="412" width="1" height="1" fill="#808080" />
<rect x="17" y="414" width="1" height="1" fill="#808080" />
<rect x="17" y="416" width="1" height="1" fill="#808080" />
<rect x="17" y="418" width="1" height="1" fill="#808080" />
<rect x="17" y="420" width="1" height="1" fill="#808080" />
<rect x="17" y="422" width="1" height="1" fill="#808080" />
<rect x="17" y="424" width="1" height="1" fill="#808080" />
<rect x="17" y="426" width="1" height="1" fill="#808080" />
<rect x="17" y="428" width="1" height="1" fill="#808080" />
<rect x="17" y="430" width="1" height="1" fill="#808080" />
<rect x="17" y="432" width="1" height="1" fill="#808080" />
<rect x="17" y="434" width="1" height="1" fill="#808080" />
<rect x="17" y="436" width="1" height="1" fill="#808080" />
<rect x="17" y="438" width="1" height="1" fill="#808080" />
<rect x="17" y="440" width="1" height="1" fill="#808080" />
<rect x="17" y="442" width="1" height="1" fill="#808080" />
<rect x="17" y="444" width="1" height="1" fill="#808080" />
<rect x="17" y="446" width="1" height="1" fill="#808080" />
<rect x="17" y="448" width="1" height="1" fill="#808080" />
<rect x="17" y="450" width="1" height="1" fill="#808080" />
<rect x="17" y="452" width="1" height="1" fill="#808080" />
<rect x="17" y="454" width="1" height="1" fill="#808080" />
<rect x="17" y="456" width="1" height="1" fill="#808080" />
<rect x="17" y="458" width="1" height="1" fill="#808080" />
<rect x="17" y="460" width="1" height="1" fill="#808080" />
<rect x="17" y="462" width="1" height="1" fill="#808080" />
<rect x="17" y="464" width="1" height="1" fill="#808080" />
<rect x="17" y="466" width="1" height="1" fill="#808080" />
<rect x="17" y="468" width="1" height="1" fill="#808080" />
<rect x="38" y="387" width="1" height="1" fill="#808080" />
<rect x="38" y="389" width="1" height="1" fill="#808080" />
<rect x="38" y="391" width="1" height="1" fill="#808080" />
<rect x="59" y="405" width="1" height="1" fill="#808080" />
<rect x="59" y="407" width="1" height="1" fill="#808080" />
<rect x="59" y="409" width="1" height="1" fill="#808080" />
<rect x="59" y="411" width="1" height="1" fill="#808080" />
<rect x="59" y="413" width="1" height="1" fill="#808080" />
<rect x="59" y="415" width="1" height="1" fill="#808080" />
<rect x="23" y="380" width="1" height="1" fill="#808080" />
<rect x="25" y="380" width="1" height="1" fill="#808080" />
<rect x="27" y="380" width="1" height="1" fill="#808080" />
<rect x="44" y="398" width="1" height="1" fill="#808080" />
<rect x="46" y="398" width="1" height="1" fill="#808080" />
<rect x="48" y="398" width="1" height="1" fill="#808080" />
<rect x="50" y="398" width="1" height="1" fill="#808080" />
<rect x="60" y="415" width="1" height="1" fill="#808080" />
<rect x="62" y="415" width="1" height="1" fill="#808080" />
<rect x="64" y="415" width="1" height="1" fill="#808080" />
<rect x="66" y="415" width="1" height="1" fill="#808080" />
<rect x="68" y="415" width="1" height="1" fill="#808080" />
<rect x="70" y="415" width="1" height="1" fill="#808080" />
<rect x="72" y="415" width="1" height="1" fill="#808080" />
<rect x="23" y="434" width="1" height="1" fill="#808080" />
<rect x="25" y="434" width="1" height="1" fill="#808080" />
<rect x="27" y="434" width="1" height="1" fill="#808080" />
<rect x="23" y="452" width="1" height="1" fill="#808080" />
<rect x="25" y="452" width="1" height="1" fill="#808080" />
<rect x="27" y="452" width="1" height="1" fill="#808080" />
<rect x="23" y="470" width="1" height="1" fill="#808080" />
<rect x="25" y="470" width="1" height="1" fill="#808080" />
<rect x="27" y="470" width="1" height="1" fill="#808080" />
<g shape-rendering="auto"><rect x="13.5" y="376.5" width="8" height="8" rx="1" fill="#f4f4f4" stroke="#9a9a9a" stroke-width="1"/></g>
<rect x="15" y="380" width="5" height="1" fill="#2a3f8a" />
<g shape-rendering="auto"><rect x="34.5" y="393.5" width="8" height="8" rx="1" fill="#f4f4f4" stroke="#9a9a9a" stroke-width="1"/></g>
<rect x="36" y="397" width="5" height="1" fill="#2a3f8a" />
<g shape-rendering="auto"><rect x="13.5" y="430.5" width="8" height="8" rx="1" fill="#f4f4f4" stroke="#9a9a9a" stroke-width="1"/></g>
<rect x="15" y="434" width="5" height="1" fill="#2a3f8a" />
<rect x="17" y="432" width="1" height="5" fill="#2a3f8a" />
<g shape-rendering="auto"><rect x="13.5" y="448.5" width="8" height="8" rx="1" fill="#f4f4f4" stroke="#9a9a9a" stroke-width="1"/></g>
<rect x="15" y="452" width="5" height="1" fill="#2a3f8a" />
<rect x="17" y="450" width="1" height="5" fill="#2a3f8a" />
<g shape-rendering="auto"><rect x="13.5" y="466.5" width="8" height="8" rx="1" fill="#f4f4f4" stroke="#9a9a9a" stroke-width="1"/></g>
<rect x="15" y="470" width="5" height="1" fill="#2a3f8a" />
<rect x="17" y="468" width="1" height="5" fill="#2a3f8a" />
<g shape-rendering="auto"><rect x="10.5" y="353.5" width="10" height="8" fill="#fff" stroke="#4a8ae8" stroke-width="1.2" stroke-dasharray="1.2 .8"/><rect x="13.5" y="358.5" width="10" height="8" fill="#fff" stroke="#4a8ae8" stroke-width="1.2" stroke-dasharray="1.2 .8"/><path d="M15 363 l1.5 1.5 l1.5 -3 l1.5 3 l1.5 -2" stroke="#4a8ae8" stroke-width=".9" fill="none"/></g>
<g shape-rendering="auto"><circle cx="34" cy="374" r="3.2" fill="#f0b030" stroke="#b07810" stroke-width=".7"/><path d="M29 386 q0 -8 5 -8 q5 0 5 8 z" fill="#3cb43c" stroke="#1f7a1f" stroke-width=".7"/><circle cx="40" cy="374.5" r="3.5" fill="#f4c040" stroke="#b07810" stroke-width=".7"/><path d="M34 387 q0 -9 6 -9 q6 0 6 9 z" fill="#f0d060" stroke="#b08a18" stroke-width=".8"/></g>
<g shape-rendering="auto"><path d="M53.5 390.5 l3 -2 h6 v15 l-3 2 h-6 z" fill="#3a8ee6" stroke="#1a5fb0" stroke-width=".8"/><rect x="54.5" y="391" width="5" height="13" fill="#5aaaf4"/><path d="M55 393 h4 M55 395 h4" stroke="#e8f4ff" stroke-width=".8"/><circle cx="58" cy="401" r=".8" fill="#f0d040"/></g>
<g shape-rendering="auto"><circle cx="80" cy="410" r="3.6" fill="#f4b830" stroke="#b07810" stroke-width=".8"/><path d="M74 423 q0 -8 6 -8 q6 0 6 8 z" fill="#3cb43c" stroke="#1f7a1f" stroke-width=".8"/><path d="M80 416 l1.5 3 l-1.5 2 l-1.5 -2 z" fill="#fff"/></g>
<g shape-rendering="auto"><rect x="30.5" y="425.5" width="13" height="13" rx="2.5" fill="#f4d860" stroke="#c9a030" stroke-width="1"/><text x="34.5" y="436" font-size="10" font-style="italic" font-family="Liberation Serif" fill="#8a6a10">f</text></g>
<g shape-rendering="auto"><path d="M33 449 q4 6 9 0 z" fill="#f4d040" stroke="#b89018" stroke-width=".7"/><ellipse cx="37.5" cy="448" rx="7.5" ry="2.5" fill="#4aa0dc" stroke="#2070b0" stroke-width=".7"/><path d="M33 448 q4.5 -7 9 0 z" fill="#60b4ec" stroke="#2070b0" stroke-width=".7"/><path d="M41 455 l3 -3 l3 3 l-3 3 z" fill="#f4d860" stroke="#b89018" stroke-width=".8"/></g>
<g shape-rendering="auto"><rect x="32.5" y="463.5" width="9" height="10" fill="#f4dc70" stroke="#c9a030" stroke-width=".8"/><rect x="30.5" y="461.5" width="13" height="2.5" rx="1" fill="#f8e070" stroke="#c9a030" stroke-width=".8"/><rect x="30.5" y="472.5" width="11" height="2.5" rx="1" fill="#f8e070" stroke="#c9a030" stroke-width=".8"/><path d="M40 473 l2.5 -2.5 l2.5 2.5 l-2.5 2.5 z" fill="#f4d860" stroke="#b89018" stroke-width=".8"/><path d="M35 467 h1 M38 467 h1 M35 469.5 h1 M38 469.5 h1" stroke="#a08020" stroke-width="1"/></g>
<rect x="76" y="543" width="108" height="1" fill="#000" />
<rect x="6" y="544" width="70" height="18" fill="#fff" />
<rect x="6" y="543" width="1" height="19" fill="#000" />
<rect x="6" y="562" width="71" height="1" fill="#000" />
<rect x="76" y="543" width="1" height="19" fill="#000" />
<text x="16" y="558" font-size="12" fill="#000" font-weight="normal" text-anchor="start" textLength="50" lengthAdjust="spacingAndGlyphs" xml:space="preserve" >Common</text>
<text x="87" y="558" font-size="12" fill="#8a8a8a" font-weight="normal" text-anchor="start" textLength="47" lengthAdjust="spacingAndGlyphs" xml:space="preserve" >Favorites</text>
<rect x="145" y="547" width="1" height="12" fill="#8a8a8a" />
<rect x="188" y="97" width="1176" height="1" fill="#8a8a8a" />
<rect x="188" y="98" width="1176" height="2" fill="#505050" />
<rect x="187" y="97" width="1" height="472" fill="#a8a8a8" />
<rect x="188" y="97" width="2" height="471" fill="#5a5a5a" />
<rect x="775" y="99" width="2" height="449" fill="#5a5a5a" />
<rect x="190" y="322" width="1174" height="2" fill="#5a5a5a" />
<rect x="190" y="546" width="1174" height="2" fill="#5a5a5a" />
<rect x="1362" y="99" width="2" height="449" fill="#6a6a6a" />
<defs><linearGradient id="tg190_99" x1="0" y1="0" x2="0" y2="1"><stop offset="0" stop-color="#bccad9"/><stop offset="1" stop-color="#d9e4f1"/></linearGradient></defs>
<rect x="190" y="100" width="585" height="222" fill="#d9e4f1" />
<rect x="190" y="101" width="585" height="30" fill="url(#tg190_99)" />
<rect x="194" y="100" width="581" height="1" fill="#e8eef6" />
<path d="M190 100 h4 q-4 0 -4 4 z" fill="#8a8a8a" shape-rendering="auto"/>
<g shape-rendering="auto"><rect x="200.5" y="111.5" width="11" height="8.5" fill="#fff" stroke="#3d80f5" stroke-width="1.3" stroke-dasharray="1.2 0.8"/><rect x="203.5" y="116.5" width="11" height="8.5" fill="#fff" stroke="#3d80f5" stroke-width="1.3" stroke-dasharray="1.2 0.8"/><path d="M205 120 l1.5 2 l1.5 -3 l1.5 3 l1.5 -2 l1.5 2" stroke="#3d80f5" stroke-width="0.9" fill="none"/><path d="M202 115 l2 -1.5 l2 1.5 l2 -1.5" stroke="#3d80f5" stroke-width="0.9" fill="none"/></g>
<text x="219.5" y="122.9" font-size="12.3" fill="#a0a0a6" font-weight="normal" text-anchor="start" textLength="61" lengthAdjust="spacingAndGlyphs" xml:space="preserve" >EURUSD,M1</text>
<g shape-rendering="auto"><rect x="666.5" y="109.5" width="31" height="17" rx="2.5" fill="#c8d3e2" stroke="#7e8cac" stroke-width="1.2"/><rect x="667.5" y="110.5" width="29" height="15" rx="2" fill="none" stroke="#e4eaf3" stroke-width="0.8"/><rect x="700.5" y="109.5" width="31" height="17" rx="2.5" fill="#c8d3e2" stroke="#7e8cac" stroke-width="1.2"/><rect x="701.5" y="110.5" width="29" height="15" rx="2" fill="none" stroke="#e4eaf3" stroke-width="0.8"/><rect x="734.5" y="109.5" width="31" height="17" rx="2.5" fill="#c8d3e2" stroke="#7e8cac" stroke-width="1.2"/><rect x="735.5" y="110.5" width="29" height="15" rx="2" fill="none" stroke="#e4eaf3" stroke-width="0.8"/><rect x="676.5" y="116.5" width="10" height="4" rx="1.5" fill="#f2f0ec" stroke="#3a3a4a" stroke-width="1.4"/><rect x="710.5" y="113" width="10" height="8.5" rx="1.5" fill="#f2f0ec" stroke="#3a3a4a" stroke-width="1.5"/><rect x="713.5" y="116" width="4" height="2" fill="#c8d3e2" stroke="#3a3a4a" stroke-width="1.2"/><path d="M745 114 L754 121 M754 114 L745 121" stroke="#3a3a4a" stroke-width="4.4" stroke-linecap="round"/><path d="M745 114 L754 121 M754 114 L745 121" stroke="#f2f0ec" stroke-width="2.2" stroke-linecap="round"/></g>
<defs><linearGradient id="tg777_99" x1="0" y1="0" x2="0" y2="1"><stop offset="0" stop-color="#bccad9"/><stop offset="1" stop-color="#d9e4f1"/></linearGradient></defs>
<rect x="777" y="100" width="585" height="222" fill="#d9e4f1" />
<rect x="777" y="101" width="585" height="30" fill="url(#tg777_99)" />
<rect x="781" y="100" width="581" height="1" fill="#e8eef6" />
<path d="M777 100 h4 q-4 0 -4 4 z" fill="#8a8a8a" shape-rendering="auto"/>
<g shape-rendering="auto"><rect x="787.5" y="111.5" width="11" height="8.5" fill="#fff" stroke="#3d80f5" stroke-width="1.3" stroke-dasharray="1.2 0.8"/><rect x="790.5" y="116.5" width="11" height="8.5" fill="#fff" stroke="#3d80f5" stroke-width="1.3" stroke-dasharray="1.2 0.8"/><path d="M792 120 l1.5 2 l1.5 -3 l1.5 3 l1.5 -2 l1.5 2" stroke="#3d80f5" stroke-width="0.9" fill="none"/><path d="M789 115 l2 -1.5 l2 1.5 l2 -1.5" stroke="#3d80f5" stroke-width="0.9" fill="none"/></g>
<text x="806.5" y="122.9" font-size="12.3" fill="#a0a0a6" font-weight="normal" text-anchor="start" textLength="59" lengthAdjust="spacingAndGlyphs" xml:space="preserve" >USDJPY,M1</text>
<g shape-rendering="auto"><rect x="1253.5" y="109.5" width="31" height="17" rx="2.5" fill="#c8d3e2" stroke="#7e8cac" stroke-width="1.2"/><rect x="1254.5" y="110.5" width="29" height="15" rx="2" fill="none" stroke="#e4eaf3" stroke-width="0.8"/><rect x="1287.5" y="109.5" width="31" height="17" rx="2.5" fill="#c8d3e2" stroke="#7e8cac" stroke-width="1.2"/><rect x="1288.5" y="110.5" width="29" height="15" rx="2" fill="none" stroke="#e4eaf3" stroke-width="0.8"/><rect x="1321.5" y="109.5" width="31" height="17" rx="2.5" fill="#c8d3e2" stroke="#7e8cac" stroke-width="1.2"/><rect x="1322.5" y="110.5" width="29" height="15" rx="2" fill="none" stroke="#e4eaf3" stroke-width="0.8"/><rect x="1263.5" y="116.5" width="10" height="4" rx="1.5" fill="#f2f0ec" stroke="#3a3a4a" stroke-width="1.4"/><rect x="1297.5" y="113" width="10" height="8.5" rx="1.5" fill="#f2f0ec" stroke="#3a3a4a" stroke-width="1.5"/><rect x="1300.5" y="116" width="4" height="2" fill="#c8d3e2" stroke="#3a3a4a" stroke-width="1.2"/><path d="M1332 114 L1341 121 M1341 114 L1332 121" stroke="#3a3a4a" stroke-width="4.4" stroke-linecap="round"/><path d="M1332 114 L1341 121 M1341 114 L1332 121" stroke="#f2f0ec" stroke-width="2.2" stroke-linecap="round"/></g>
<defs><linearGradient id="tg190_323" x1="0" y1="0" x2="0" y2="1"><stop offset="0" stop-color="#bccad9"/><stop offset="1" stop-color="#d9e4f1"/></linearGradient></defs>
<rect x="190" y="324" width="585" height="222" fill="#d9e4f1" />
<rect x="190" y="325" width="585" height="30" fill="url(#tg190_323)" />
<rect x="194" y="324" width="581" height="1" fill="#e8eef6" />
<path d="M190 324 h4 q-4 0 -4 4 z" fill="#8a8a8a" shape-rendering="auto"/>
<g shape-rendering="auto"><rect x="200.5" y="335.5" width="11" height="8.5" fill="#fff" stroke="#3d80f5" stroke-width="1.3" stroke-dasharray="1.2 0.8"/><rect x="203.5" y="340.5" width="11" height="8.5" fill="#fff" stroke="#3d80f5" stroke-width="1.3" stroke-dasharray="1.2 0.8"/><path d="M205 344 l1.5 2 l1.5 -3 l1.5 3 l1.5 -2 l1.5 2" stroke="#3d80f5" stroke-width="0.9" fill="none"/><path d="M202 339 l2 -1.5 l2 1.5 l2 -1.5" stroke="#3d80f5" stroke-width="0.9" fill="none"/></g>
<text x="219.5" y="346.9" font-size="12.3" fill="#a0a0a6" font-weight="normal" text-anchor="start" textLength="61" lengthAdjust="spacingAndGlyphs" xml:space="preserve" >GBPUSD,M1</text>
<g shape-rendering="auto"><rect x="666.5" y="333.5" width="31" height="17" rx="2.5" fill="#c8d3e2" stroke="#7e8cac" stroke-width="1.2"/><rect x="667.5" y="334.5" width="29" height="15" rx="2" fill="none" stroke="#e4eaf3" stroke-width="0.8"/><rect x="700.5" y="333.5" width="31" height="17" rx="2.5" fill="#c8d3e2" stroke="#7e8cac" stroke-width="1.2"/><rect x="701.5" y="334.5" width="29" height="15" rx="2" fill="none" stroke="#e4eaf3" stroke-width="0.8"/><rect x="734.5" y="333.5" width="31" height="17" rx="2.5" fill="#c8d3e2" stroke="#7e8cac" stroke-width="1.2"/><rect x="735.5" y="334.5" width="29" height="15" rx="2" fill="none" stroke="#e4eaf3" stroke-width="0.8"/><rect x="676.5" y="340.5" width="10" height="4" rx="1.5" fill="#f2f0ec" stroke="#3a3a4a" stroke-width="1.4"/><rect x="710.5" y="337" width="10" height="8.5" rx="1.5" fill="#f2f0ec" stroke="#3a3a4a" stroke-width="1.5"/><rect x="713.5" y="340" width="4" height="2" fill="#c8d3e2" stroke="#3a3a4a" stroke-width="1.2"/><path d="M745 338 L754 345 M754 338 L745 345" stroke="#3a3a4a" stroke-width="4.4" stroke-linecap="round"/><path d="M745 338 L754 345 M754 338 L745 345" stroke="#f2f0ec" stroke-width="2.2" stroke-linecap="round"/></g>
<defs><linearGradient id="tg777_323" x1="0" y1="0" x2="0" y2="1"><stop offset="0" stop-color="#bccad9"/><stop offset="1" stop-color="#d9e4f1"/></linearGradient></defs>
<rect x="777" y="324" width="585" height="222" fill="#d9e4f1" />
<rect x="777" y="325" width="585" height="30" fill="url(#tg777_323)" />
<rect x="781" y="324" width="581" height="1" fill="#e8eef6" />
<path d="M777 324 h4 q-4 0 -4 4 z" fill="#8a8a8a" shape-rendering="auto"/>
<g shape-rendering="auto"><rect x="787.5" y="335.5" width="11" height="8.5" fill="#fff" stroke="#3d80f5" stroke-width="1.3" stroke-dasharray="1.2 0.8"/><rect x="790.5" y="340.5" width="11" height="8.5" fill="#fff" stroke="#3d80f5" stroke-width="1.3" stroke-dasharray="1.2 0.8"/><path d="M792 344 l1.5 2 l1.5 -3 l1.5 3 l1.5 -2 l1.5 2" stroke="#3d80f5" stroke-width="0.9" fill="none"/><path d="M789 339 l2 -1.5 l2 1.5 l2 -1.5" stroke="#3d80f5" stroke-width="0.9" fill="none"/></g>
<text x="806.5" y="346.9" font-size="12.3" fill="#a0a0a6" font-weight="normal" text-anchor="start" textLength="61" lengthAdjust="spacingAndGlyphs" xml:space="preserve" >AUDUSD,M1</text>
<g shape-rendering="auto"><rect x="1253.5" y="333.5" width="31" height="17" rx="2.5" fill="#c8d3e2" stroke="#7e8cac" stroke-width="1.2"/><rect x="1254.5" y="334.5" width="29" height="15" rx="2" fill="none" stroke="#e4eaf3" stroke-width="0.8"/><rect x="1287.5" y="333.5" width="31" height="17" rx="2.5" fill="#c8d3e2" stroke="#7e8cac" stroke-width="1.2"/><rect x="1288.5" y="334.5" width="29" height="15" rx="2" fill="none" stroke="#e4eaf3" stroke-width="0.8"/><rect x="1321.5" y="333.5" width="31" height="17" rx="2.5" fill="#c8d3e2" stroke="#7e8cac" stroke-width="1.2"/><rect x="1322.5" y="334.5" width="29" height="15" rx="2" fill="none" stroke="#e4eaf3" stroke-width="0.8"/><rect x="1263.5" y="340.5" width="10" height="4" rx="1.5" fill="#f2f0ec" stroke="#3a3a4a" stroke-width="1.4"/><rect x="1297.5" y="337" width="10" height="8.5" rx="1.5" fill="#f2f0ec" stroke="#3a3a4a" stroke-width="1.5"/><rect x="1300.5" y="340" width="4" height="2" fill="#c8d3e2" stroke="#3a3a4a" stroke-width="1.2"/><path d="M1332 338 L1341 345 M1341 338 L1332 345" stroke="#3a3a4a" stroke-width="4.4" stroke-linecap="round"/><path d="M1332 338 L1341 345 M1341 338 L1332 345" stroke="#f2f0ec" stroke-width="2.2" stroke-linecap="round"/></g>
<rect x="197" y="130" width="569" height="1" fill="#a0a0a0" />
<rect x="197" y="130" width="1" height="183" fill="#a0a0a0" />
<rect x="198" y="131" width="568" height="1" fill="#404040" />
<rect x="198" y="131" width="1" height="182" fill="#404040" />
<rect x="199" y="132" width="567" height="181" fill="#000" />
<rect x="766" y="130" width="2" height="185" fill="#fff" />
<rect x="197" y="313" width="571" height="2" fill="#fff" />
<rect x="784" y="130" width="569" height="1" fill="#a0a0a0" />
<rect x="784" y="130" width="1" height="183" fill="#a0a0a0" />
<rect x="785" y="131" width="568" height="1" fill="#404040" />
<rect x="785" y="131" width="1" height="182" fill="#404040" />
<rect x="786" y="132" width="567" height="181" fill="#000" />
<rect x="1353" y="130" width="2" height="185" fill="#fff" />
<rect x="784" y="313" width="571" height="2" fill="#fff" />
<rect x="197" y="354" width="569" height="1" fill="#a0a0a0" />
<rect x="197" y="354" width="1" height="183" fill="#a0a0a0" />
<rect x="198" y="355" width="568" height="1" fill="#404040" />
<rect x="198" y="355" width="1" height="182" fill="#404040" />
<rect x="199" y="356" width="567" height="181" fill="#000" />
<rect x="766" y="354" width="2" height="185" fill="#fff" />
<rect x="197" y="537" width="571" height="2" fill="#fff" />
<rect x="784" y="354" width="569" height="1" fill="#a0a0a0" />
<rect x="784" y="354" width="1" height="183" fill="#a0a0a0" />
<rect x="785" y="355" width="568" height="1" fill="#404040" />
<rect x="785" y="355" width="1" height="182" fill="#404040" />
<rect x="786" y="356" width="567" height="181" fill="#000" />
<rect x="1353" y="354" width="2" height="185" fill="#fff" />
<rect x="784" y="537" width="571" height="2" fill="#fff" />
<path d="M234.5 134 V292" stroke="#778899" stroke-width="1" stroke-dasharray="3 3" stroke-dashoffset="0" fill="none"/>
<path d="M266.5 134 V292" stroke="#778899" stroke-width="1" stroke-dasharray="3 3" stroke-dashoffset="0" fill="none"/>
<path d="M298.5 134 V292" stroke="#778899" stroke-width="1" stroke-dasharray="3 3" stroke-dashoffset="0" fill="none"/>
<path d="M330.5 134 V292" stroke="#778899" stroke-width="1" stroke-dasharray="3 3" stroke-dashoffset="0" fill="none"/>
<path d="M362.5 134 V292" stroke="#778899" stroke-width="1" stroke-dasharray="3 3" stroke-dashoffset="0" fill="none"/>
<path d="M394.5 134 V292" stroke="#778899" stroke-width="1" stroke-dasharray="3 3" stroke-dashoffset="0" fill="none"/>
<path d="M426.5 134 V292" stroke="#778899" stroke-width="1" stroke-dasharray="3 3" stroke-dashoffset="0" fill="none"/>
<path d="M458.5 134 V292" stroke="#778899" stroke-width="1" stroke-dasharray="3 3" stroke-dashoffset="0" fill="none"/>
<path d="M490.5 134 V292" stroke="#778899" stroke-width="1" stroke-dasharray="3 3" stroke-dashoffset="0" fill="none"/>
<path d="M522.5 134 V292" stroke="#778899" stroke-width="1" stroke-dasharray="3 3" stroke-dashoffset="0" fill="none"/>
<path d="M554.5 134 V292" stroke="#778899" stroke-width="1" stroke-dasharray="3 3" stroke-dashoffset="0" fill="none"/>
<path d="M586.5 134 V292" stroke="#778899" stroke-width="1" stroke-dasharray="3 3" stroke-dashoffset="0" fill="none"/>
<path d="M618.5 134 V292" stroke="#778899" stroke-width="1" stroke-dasharray="3 3" stroke-dashoffset="0" fill="none"/>
<path d="M650.5 134 V292" stroke="#778899" stroke-width="1" stroke-dasharray="3 3" stroke-dashoffset="0" fill="none"/>
<path d="M682.5 134 V292" stroke="#778899" stroke-width="1" stroke-dasharray="3 3" stroke-dashoffset="0" fill="none"/>
<path d="M714.5 134 V292" stroke="#778899" stroke-width="1" stroke-dasharray="3 3" stroke-dashoffset="0" fill="none"/>
<path d="M203 157.5 H720" stroke="#778899" stroke-width="1" stroke-dasharray="3 3" stroke-dashoffset="0" fill="none"/>
<path d="M203 190.5 H720" stroke="#778899" stroke-width="1" stroke-dasharray="3 3" stroke-dashoffset="0" fill="none"/>
<path d="M203 223.5 H720" stroke="#778899" stroke-width="1" stroke-dasharray="3 3" stroke-dashoffset="0" fill="none"/>
<path d="M203 256.5 H720" stroke="#778899" stroke-width="1" stroke-dasharray="3 3" stroke-dashoffset="0" fill="none"/>
<path d="M203 289.5 H720" stroke="#778899" stroke-width="1" stroke-dasharray="3 3" stroke-dashoffset="0" fill="none"/>
<rect x="202" y="221" width="518" height="1" fill="#778899" />
<clipPath id="c1"><rect x="202" y="135" width="518" height="157"/></clipPath><g clip-path="url(#c1)">
<rect x="202" y="147" width="1" height="15" fill="#00ff00" />
<rect x="200" y="150" width="5" height="8" fill="#00ff00" />
<rect x="201" y="151" width="3" height="6" fill="#ffffff" />
<rect x="210" y="147" width="1" height="19" fill="#00ff00" />
<rect x="208" y="156" width="5" height="9" fill="#00ff00" />
<rect x="209" y="157" width="3" height="7" fill="#ffffff" />
<rect x="218" y="162" width="1" height="13" fill="#00ff00" />
<rect x="216" y="166" width="5" height="1" fill="#00ff00" />
<rect x="226" y="164" width="1" height="13" fill="#00ff00" />
<rect x="224" y="167" width="5" height="5" fill="#00ff00" />
<rect x="225" y="168" width="3" height="3" fill="#ffffff" />
<rect x="234" y="170" width="1" height="17" fill="#00ff00" />
<rect x="232" y="170" width="5" height="15" fill="#00ff00" />
<rect x="233" y="171" width="3" height="13" fill="#ffffff" />
<rect x="242" y="170" width="1" height="17" fill="#00ff00" />
<rect x="240" y="178" width="5" height="9" fill="#00ff00" />
<rect x="241" y="179" width="3" height="7" fill="#000000" />
<rect x="250" y="175" width="1" height="13" fill="#00ff00" />
<rect x="248" y="176" width="5" height="4" fill="#00ff00" />
<rect x="249" y="177" width="3" height="2" fill="#000000" />
<rect x="258" y="170" width="1" height="14" fill="#00ff00" />
<rect x="256" y="176" width="5" height="1" fill="#00ff00" />
<rect x="266" y="170" width="1" height="10" fill="#00ff00" />
<rect x="264" y="174" width="5" height="5" fill="#00ff00" />
<rect x="265" y="175" width="3" height="3" fill="#000000" />
<rect x="274" y="171" width="1" height="16" fill="#00ff00" />
<rect x="272" y="171" width="5" height="6" fill="#00ff00" />
<rect x="273" y="172" width="3" height="4" fill="#ffffff" />
<rect x="282" y="159" width="1" height="18" fill="#00ff00" />
<rect x="280" y="159" width="5" height="18" fill="#00ff00" />
<rect x="281" y="160" width="3" height="16" fill="#000000" />
<rect x="290" y="153" width="1" height="16" fill="#00ff00" />
<rect x="288" y="160" width="5" height="1" fill="#00ff00" />
<rect x="298" y="155" width="1" height="21" fill="#00ff00" />
<rect x="296" y="162" width="5" height="13" fill="#00ff00" />
<rect x="297" y="163" width="3" height="11" fill="#ffffff" />
<rect x="306" y="157" width="1" height="20" fill="#00ff00" />
<rect x="304" y="172" width="5" height="1" fill="#00ff00" />
<rect x="314" y="170" width="1" height="31" fill="#00ff00" />
<rect x="312" y="174" width="5" height="20" fill="#00ff00" />
<rect x="313" y="175" width="3" height="18" fill="#ffffff" />
<rect x="322" y="192" width="1" height="21" fill="#00ff00" />
<rect x="320" y="192" width="5" height="20" fill="#00ff00" />
<rect x="321" y="193" width="3" height="18" fill="#ffffff" />
<rect x="330" y="208" width="1" height="15" fill="#00ff00" />
<rect x="328" y="210" width="5" height="12" fill="#00ff00" />
<rect x="329" y="211" width="3" height="10" fill="#ffffff" />
<rect x="338" y="219" width="1" height="19" fill="#00ff00" />
<rect x="336" y="220" width="5" height="14" fill="#00ff00" />
<rect x="337" y="221" width="3" height="12" fill="#ffffff" />
<rect x="346" y="216" width="1" height="18" fill="#00ff00" />
<rect x="344" y="219" width="5" height="14" fill="#00ff00" />
<rect x="345" y="220" width="3" height="12" fill="#000000" />
<rect x="354" y="204" width="1" height="16" fill="#00ff00" />
<rect x="352" y="209" width="5" height="11" fill="#00ff00" />
<rect x="353" y="210" width="3" height="9" fill="#000000" />
<rect x="362" y="208" width="1" height="11" fill="#00ff00" />
<rect x="360" y="209" width="5" height="10" fill="#00ff00" />
<rect x="361" y="210" width="3" height="8" fill="#ffffff" />
<rect x="370" y="216" width="1" height="20" fill="#00ff00" />
<rect x="368" y="216" width="5" height="19" fill="#00ff00" />
<rect x="369" y="217" width="3" height="17" fill="#ffffff" />
<rect x="378" y="231" width="1" height="7" fill="#00ff00" />
<rect x="376" y="234" width="5" height="1" fill="#00ff00" />
<rect x="386" y="234" width="1" height="24" fill="#00ff00" />
<rect x="384" y="234" width="5" height="13" fill="#00ff00" />
<rect x="385" y="235" width="3" height="11" fill="#ffffff" />
<rect x="394" y="237" width="1" height="21" fill="#00ff00" />
<rect x="392" y="246" width="5" height="3" fill="#00ff00" />
<rect x="393" y="247" width="3" height="1" fill="#ffffff" />
<rect x="402" y="230" width="1" height="17" fill="#00ff00" />
<rect x="400" y="236" width="5" height="11" fill="#00ff00" />
<rect x="401" y="237" width="3" height="9" fill="#000000" />
<rect x="410" y="227" width="1" height="17" fill="#00ff00" />
<rect x="408" y="233" width="5" height="5" fill="#00ff00" />
<rect x="409" y="234" width="3" height="3" fill="#000000" />
<rect x="418" y="212" width="1" height="22" fill="#00ff00" />
<rect x="416" y="224" width="5" height="10" fill="#00ff00" />
<rect x="417" y="225" width="3" height="8" fill="#000000" />
<rect x="426" y="213" width="1" height="21" fill="#00ff00" />
<rect x="424" y="224" width="5" height="5" fill="#00ff00" />
<rect x="425" y="225" width="3" height="3" fill="#ffffff" />
<rect x="434" y="220" width="1" height="21" fill="#00ff00" />
<rect x="432" y="220" width="5" height="9" fill="#00ff00" />
<rect x="433" y="221" width="3" height="7" fill="#000000" />
<rect x="442" y="218" width="1" height="8" fill="#00ff00" />
<rect x="440" y="221" width="5" height="5" fill="#00ff00" />
<rect x="441" y="222" width="3" height="3" fill="#ffffff" />
<rect x="450" y="223" width="1" height="21" fill="#00ff00" />
<rect x="448" y="226" width="5" height="11" fill="#00ff00" />
<rect x="449" y="227" width="3" height="9" fill="#ffffff" />
<rect x="458" y="235" width="1" height="15" fill="#00ff00" />
<rect x="456" y="236" width="5" height="13" fill="#00ff00" />
<rect x="457" y="237" width="3" height="11" fill="#ffffff" />
<rect x="466" y="247" width="1" height="8" fill="#00ff00" />
<rect x="464" y="249" width="5" height="1" fill="#00ff00" />
<rect x="474" y="239" width="1" height="16" fill="#00ff00" />
<rect x="472" y="247" width="5" height="6" fill="#00ff00" />
<rect x="473" y="248" width="3" height="4" fill="#ffffff" />
<rect x="482" y="251" width="1" height="21" fill="#00ff00" />
<rect x="480" y="253" width="5" height="16" fill="#00ff00" />
<rect x="481" y="254" width="3" height="14" fill="#ffffff" />
<rect x="490" y="264" width="1" height="23" fill="#00ff00" />
<rect x="488" y="264" width="5" height="15" fill="#00ff00" />
<rect x="489" y="265" width="3" height="13" fill="#ffffff" />
<rect x="498" y="258" width="1" height="23" fill="#00ff00" />
<rect x="496" y="264" width="5" height="17" fill="#00ff00" />
<rect x="497" y="265" width="3" height="15" fill="#000000" />
<rect x="506" y="252" width="1" height="16" fill="#00ff00" />
<rect x="504" y="252" width="5" height="9" fill="#00ff00" />
<rect x="505" y="253" width="3" height="7" fill="#000000" />
<rect x="514" y="251" width="1" height="18" fill="#00ff00" />
<rect x="512" y="251" width="5" height="10" fill="#00ff00" />
<rect x="513" y="252" width="3" height="8" fill="#ffffff" />
<rect x="522" y="256" width="1" height="10" fill="#00ff00" />
<rect x="520" y="259" width="5" height="6" fill="#00ff00" />
<rect x="521" y="260" width="3" height="4" fill="#ffffff" />
<rect x="530" y="259" width="1" height="14" fill="#00ff00" />
<rect x="528" y="263" width="5" height="3" fill="#00ff00" />
<rect x="529" y="264" width="3" height="1" fill="#ffffff" />
<rect x="538" y="234" width="1" height="47" fill="#00ff00" />
<rect x="536" y="248" width="5" height="21" fill="#00ff00" />
<rect x="537" y="249" width="3" height="19" fill="#000000" />
<rect x="546" y="245" width="1" height="16" fill="#00ff00" />
<rect x="544" y="245" width="5" height="12" fill="#00ff00" />
<rect x="545" y="246" width="3" height="10" fill="#ffffff" />
<rect x="554" y="254" width="1" height="14" fill="#00ff00" />
<rect x="552" y="254" width="5" height="10" fill="#00ff00" />
<rect x="553" y="255" width="3" height="8" fill="#ffffff" />
<rect x="562" y="260" width="1" height="13" fill="#00ff00" />
<rect x="560" y="262" width="5" height="6" fill="#00ff00" />
<rect x="561" y="263" width="3" height="4" fill="#ffffff" />
<rect x="570" y="248" width="1" height="20" fill="#00ff00" />
<rect x="568" y="249" width="5" height="18" fill="#00ff00" />
<rect x="569" y="250" width="3" height="16" fill="#000000" />
<rect x="578" y="242" width="1" height="27" fill="#00ff00" />
<rect x="576" y="248" width="5" height="9" fill="#00ff00" />
<rect x="577" y="249" width="3" height="7" fill="#ffffff" />
<rect x="586" y="241" width="1" height="16" fill="#00ff00" />
<rect x="584" y="245" width="5" height="11" fill="#00ff00" />
<rect x="585" y="246" width="3" height="9" fill="#000000" />
<rect x="594" y="236" width="1" height="17" fill="#00ff00" />
<rect x="592" y="245" width="5" height="5" fill="#00ff00" />
<rect x="593" y="246" width="3" height="3" fill="#ffffff" />
<rect x="602" y="236" width="1" height="18" fill="#00ff00" />
<rect x="600" y="237" width="5" height="12" fill="#00ff00" />
<rect x="601" y="238" width="3" height="10" fill="#000000" />
<rect x="610" y="238" width="1" height="9" fill="#00ff00" />
<rect x="608" y="238" width="5" height="5" fill="#00ff00" />
<rect x="609" y="239" width="3" height="3" fill="#ffffff" />
<rect x="618" y="214" width="1" height="31" fill="#00ff00" />
<rect x="616" y="220" width="5" height="23" fill="#00ff00" />
<rect x="617" y="221" width="3" height="21" fill="#000000" />
<rect x="626" y="165" width="1" height="56" fill="#00ff00" />
<rect x="624" y="188" width="5" height="32" fill="#00ff00" />
<rect x="625" y="189" width="3" height="30" fill="#000000" />
<rect x="634" y="181" width="1" height="31" fill="#00ff00" />
<rect x="632" y="189" width="5" height="23" fill="#00ff00" />
<rect x="633" y="190" width="3" height="21" fill="#ffffff" />
<rect x="642" y="205" width="1" height="20" fill="#00ff00" />
<rect x="640" y="209" width="5" height="3" fill="#00ff00" />
<rect x="641" y="210" width="3" height="1" fill="#ffffff" />
<rect x="650" y="210" width="1" height="23" fill="#00ff00" />
<rect x="648" y="211" width="5" height="11" fill="#00ff00" />
<rect x="649" y="212" width="3" height="9" fill="#ffffff" />
<rect x="658" y="198" width="1" height="22" fill="#00ff00" />
<rect x="656" y="203" width="5" height="16" fill="#00ff00" />
<rect x="657" y="204" width="3" height="14" fill="#000000" />
<rect x="666" y="195" width="1" height="17" fill="#00ff00" />
<rect x="664" y="202" width="5" height="5" fill="#00ff00" />
<rect x="665" y="203" width="3" height="3" fill="#ffffff" />
<rect x="674" y="204" width="1" height="21" fill="#00ff00" />
<rect x="672" y="205" width="5" height="16" fill="#00ff00" />
<rect x="673" y="206" width="3" height="14" fill="#ffffff" />
<rect x="682" y="214" width="1" height="11" fill="#00ff00" />
<rect x="680" y="218" width="5" height="2" fill="#00ff00" />
<rect x="690" y="211" width="1" height="14" fill="#00ff00" />
<rect x="688" y="218" width="5" height="1" fill="#00ff00" />
<rect x="698" y="215" width="1" height="8" fill="#00ff00" />
<rect x="696" y="219" width="5" height="3" fill="#00ff00" />
<rect x="697" y="220" width="3" height="1" fill="#ffffff" />
<path d="M201.0 147.7 L226.5 149.4 L261.7 162.6 L294.7 168.0 L312.0 172.5 L330.0 180.0 L339.0 185.6 L359.0 190.7 L374.4 200.0 L394.0 212.0 L414.0 223.0 L431.5 228.5 L458.0 230.7 L476.0 235.5 L491.4 242.0 L520.0 246.0 L537.5 251.6 L559.5 259.7 L582.0 259.7 L595.0 258.0 L604.0 255.0 L612.8 253.8 L626.0 247.2 L648.0 237.3 L670.0 226.3 L685.3 220.8 L699.0 218.6" stroke="#ff0000" stroke-width="1" fill="none" />
</g>
<rect x="201" y="134" width="520" height="1" fill="#fff" />
<rect x="201" y="292" width="520" height="1" fill="#fff" />
<rect x="201" y="134" width="1" height="159" fill="#fff" />
<rect x="720" y="134" width="1" height="159" fill="#fff" />
<path d="M205 141 H212 L208.5 145.2 Z" fill="#fff" shape-rendering="auto"/>
<text x="217" y="145.5" font-size="9.5" fill="#fff" font-weight="normal" text-anchor="start" textLength="202" lengthAdjust="spacingAndGlyphs" xml:space="preserve" shape-rendering="auto" stroke="#fff" stroke-width="0.15">EURUSD,M1  0.97082 0.97087 0.97076 0.97078</text>
<rect x="721" y="157" width="4" height="1" fill="#fff" />
<text x="726" y="161.0" font-size="9.5" fill="#fff" font-weight="normal" text-anchor="start" textLength="33.25" lengthAdjust="spacingAndGlyphs" xml:space="preserve" shape-rendering="auto" stroke="#fff" stroke-width="0.15">0.97185</text>
<rect x="721" y="190" width="4" height="1" fill="#fff" />
<text x="726" y="194.0" font-size="9.5" fill="#fff" font-weight="normal" text-anchor="start" textLength="33.25" lengthAdjust="spacingAndGlyphs" xml:space="preserve" shape-rendering="auto" stroke="#fff" stroke-width="0.15">0.97130</text>
<rect x="721" y="256" width="4" height="1" fill="#fff" />
<text x="726" y="260.0" font-size="9.5" fill="#fff" font-weight="normal" text-anchor="start" textLength="33.25" lengthAdjust="spacingAndGlyphs" xml:space="preserve" shape-rendering="auto" stroke="#fff" stroke-width="0.15">0.97020</text>
<rect x="721" y="289" width="4" height="1" fill="#fff" />
<text x="726" y="293.0" font-size="9.5" fill="#fff" font-weight="normal" text-anchor="start" textLength="33.25" lengthAdjust="spacingAndGlyphs" xml:space="preserve" shape-rendering="auto" stroke="#fff" stroke-width="0.15">0.96965</text>
<rect x="202" y="293" width="1" height="4" fill="#fff" />
<text x="202" y="304.5" font-size="9.5" fill="#fff" font-weight="normal" text-anchor="start" textLength="51" lengthAdjust="spacingAndGlyphs" xml:space="preserve" shape-rendering="auto" stroke="#fff" stroke-width="0.15">12 Oct 2022</text>
<rect x="266" y="293" width="1" height="4" fill="#fff" />
<text x="266" y="304.5" font-size="9.5" fill="#fff" font-weight="normal" text-anchor="start" textLength="53" lengthAdjust="spacingAndGlyphs" xml:space="preserve" shape-rendering="auto" stroke="#fff" stroke-width="0.15">12 Oct 11:44</text>
<rect x="330" y="293" width="1" height="4" fill="#fff" />
<text x="330" y="304.5" font-size="9.5" fill="#fff" font-weight="normal" text-anchor="start" textLength="53" lengthAdjust="spacingAndGlyphs" xml:space="preserve" shape-rendering="auto" stroke="#fff" stroke-width="0.15">12 Oct 11:52</text>
<rect x="394" y="293" width="1" height="4" fill="#fff" />
<text x="394" y="304.5" font-size="9.5" fill="#fff" font-weight="normal" text-anchor="start" textLength="53" lengthAdjust="spacingAndGlyphs" xml:space="preserve" shape-rendering="auto" stroke="#fff" stroke-width="0.15">12 Oct 12:00</text>
<rect x="458" y="293" width="1" height="4" fill="#fff" />
<text x="458" y="304.5" font-size="9.5" fill="#fff" font-weight="normal" text-anchor="start" textLength="53" lengthAdjust="spacingAndGlyphs" xml:space="preserve" shape-rendering="auto" stroke="#fff" stroke-width="0.15">12 Oct 12:08</text>
<rect x="522" y="293" width="1" height="4" fill="#fff" />
<text x="522" y="304.5" font-size="9.5" fill="#fff" font-weight="normal" text-anchor="start" textLength="53" lengthAdjust="spacingAndGlyphs" xml:space="preserve" shape-rendering="auto" stroke="#fff" stroke-width="0.15">12 Oct 12:16</text>
<rect x="586" y="293" width="1" height="4" fill="#fff" />
<text x="586" y="304.5" font-size="9.5" fill="#fff" font-weight="normal" text-anchor="start" textLength="53" lengthAdjust="spacingAndGlyphs" xml:space="preserve" shape-rendering="auto" stroke="#fff" stroke-width="0.15">12 Oct 12:24</text>
<rect x="650" y="293" width="1" height="4" fill="#fff" />
<text x="650" y="304.5" font-size="9.5" fill="#fff" font-weight="normal" text-anchor="start" textLength="53" lengthAdjust="spacingAndGlyphs" xml:space="preserve" shape-rendering="auto" stroke="#fff" stroke-width="0.15">12 Oct 12:32</text>
<rect x="722" y="216" width="41" height="11" fill="#fff" />
<text x="726" y="224.5" font-size="9.5" fill="#000" font-weight="normal" text-anchor="start" textLength="33" lengthAdjust="spacingAndGlyphs" xml:space="preserve" shape-rendering="auto" stroke="#000" stroke-width="0.15">0.97078</text>
<path d="M821.5 134 V292" stroke="#778899" stroke-width="1" stroke-dasharray="3 3" stroke-dashoffset="0" fill="none"/>
<path d="M853.5 134 V292" stroke="#778899" stroke-width="1" stroke-dasharray="3 3" stroke-dashoffset="0" fill="none"/>
<path d="M885.5 134 V292" stroke="#778899" stroke-width="1" stroke-dasharray="3 3" stroke-dashoffset="0" fill="none"/>
<path d="M917.5 134 V292" stroke="#778899" stroke-width="1" stroke-dasharray="3 3" stroke-dashoffset="0" fill="none"/>
<path d="M949.5 134 V292" stroke="#778899" stroke-width="1" stroke-dasharray="3 3" stroke-dashoffset="0" fill="none"/>
<path d="M981.5 134 V292" stroke="#778899" stroke-width="1" stroke-dasharray="3 3" stroke-dashoffset="0" fill="none"/>
<path d="M1013.5 134 V292" stroke="#778899" stroke-width="1" stroke-dasharray="3 3" stroke-dashoffset="0" fill="none"/>
<path d="M1045.5 134 V292" stroke="#778899" stroke-width="1" stroke-dasharray="3 3" stroke-dashoffset="0" fill="none"/>
<path d="M1077.5 134 V292" stroke="#778899" stroke-width="1" stroke-dasharray="3 3" stroke-dashoffset="0" fill="none"/>
<path d="M1109.5 134 V292" stroke="#778899" stroke-width="1" stroke-dasharray="3 3" stroke-dashoffset="0" fill="none"/>
<path d="M1141.5 134 V292" stroke="#778899" stroke-width="1" stroke-dasharray="3 3" stroke-dashoffset="0" fill="none"/>
<path d="M1173.5 134 V292" stroke="#778899" stroke-width="1" stroke-dasharray="3 3" stroke-dashoffset="0" fill="none"/>
<path d="M1205.5 134 V292" stroke="#778899" stroke-width="1" stroke-dasharray="3 3" stroke-dashoffset="0" fill="none"/>
<path d="M1237.5 134 V292" stroke="#778899" stroke-width="1" stroke-dasharray="3 3" stroke-dashoffset="0" fill="none"/>
<path d="M1269.5 134 V292" stroke="#778899" stroke-width="1" stroke-dasharray="3 3" stroke-dashoffset="0" fill="none"/>
<path d="M1301.5 134 V292" stroke="#778899" stroke-width="1" stroke-dasharray="3 3" stroke-dashoffset="0" fill="none"/>
<path d="M790 157.5 H1307" stroke="#778899" stroke-width="1" stroke-dasharray="3 3" stroke-dashoffset="0" fill="none"/>
<path d="M790 190.5 H1307" stroke="#778899" stroke-width="1" stroke-dasharray="3 3" stroke-dashoffset="0" fill="none"/>
<path d="M790 223.5 H1307" stroke="#778899" stroke-width="1" stroke-dasharray="3 3" stroke-dashoffset="0" fill="none"/>
<path d="M790 256.5 H1307" stroke="#778899" stroke-width="1" stroke-dasharray="3 3" stroke-dashoffset="0" fill="none"/>
<path d="M790 289.5 H1307" stroke="#778899" stroke-width="1" stroke-dasharray="3 3" stroke-dashoffset="0" fill="none"/>
<rect x="789" y="177" width="518" height="1" fill="#778899" />
<clipPath id="c2"><rect x="789" y="135" width="518" height="157"/></clipPath><g clip-path="url(#c2)">
<rect x="789" y="276" width="1" height="5" fill="#00ff00" />
<rect x="787" y="278" width="5" height="1" fill="#00ff00" />
<rect x="797" y="274" width="1" height="12" fill="#00ff00" />
<rect x="795" y="276" width="5" height="3" fill="#00ff00" />
<rect x="796" y="277" width="3" height="1" fill="#ffffff" />
<rect x="805" y="255" width="1" height="22" fill="#00ff00" />
<rect x="803" y="259" width="5" height="17" fill="#00ff00" />
<rect x="804" y="260" width="3" height="15" fill="#000000" />
<rect x="813" y="247" width="1" height="12" fill="#00ff00" />
<rect x="811" y="250" width="5" height="9" fill="#00ff00" />
<rect x="812" y="251" width="3" height="7" fill="#000000" />
<rect x="821" y="243" width="1" height="15" fill="#00ff00" />
<rect x="819" y="250" width="5" height="7" fill="#00ff00" />
<rect x="820" y="251" width="3" height="5" fill="#ffffff" />
<rect x="829" y="252" width="1" height="7" fill="#00ff00" />
<rect x="827" y="253" width="5" height="6" fill="#00ff00" />
<rect x="828" y="254" width="3" height="4" fill="#ffffff" />
<rect x="837" y="250" width="1" height="11" fill="#00ff00" />
<rect x="835" y="256" width="5" height="1" fill="#00ff00" />
<rect x="845" y="252" width="1" height="10" fill="#00ff00" />
<rect x="843" y="258" width="5" height="1" fill="#00ff00" />
<rect x="853" y="256" width="1" height="10" fill="#00ff00" />
<rect x="851" y="256" width="5" height="3" fill="#00ff00" />
<rect x="852" y="257" width="3" height="1" fill="#ffffff" />
<rect x="861" y="241" width="1" height="18" fill="#00ff00" />
<rect x="859" y="248" width="5" height="11" fill="#00ff00" />
<rect x="860" y="249" width="3" height="9" fill="#000000" />
<rect x="869" y="245" width="1" height="15" fill="#00ff00" />
<rect x="867" y="248" width="5" height="8" fill="#00ff00" />
<rect x="868" y="249" width="3" height="6" fill="#ffffff" />
<rect x="877" y="244" width="1" height="12" fill="#00ff00" />
<rect x="875" y="245" width="5" height="11" fill="#00ff00" />
<rect x="876" y="246" width="3" height="9" fill="#000000" />
<rect x="885" y="238" width="1" height="11" fill="#00ff00" />
<rect x="883" y="240" width="5" height="6" fill="#00ff00" />
<rect x="884" y="241" width="3" height="4" fill="#000000" />
<rect x="893" y="236" width="1" height="15" fill="#00ff00" />
<rect x="891" y="240" width="5" height="7" fill="#00ff00" />
<rect x="892" y="241" width="3" height="5" fill="#ffffff" />
<rect x="901" y="225" width="1" height="23" fill="#00ff00" />
<rect x="899" y="232" width="5" height="16" fill="#00ff00" />
<rect x="900" y="233" width="3" height="14" fill="#000000" />
<rect x="909" y="230" width="1" height="14" fill="#00ff00" />
<rect x="907" y="233" width="5" height="1" fill="#00ff00" />
<rect x="917" y="230" width="1" height="7" fill="#00ff00" />
<rect x="915" y="231" width="5" height="3" fill="#00ff00" />
<rect x="916" y="232" width="3" height="1" fill="#ffffff" />
<rect x="925" y="219" width="1" height="13" fill="#00ff00" />
<rect x="923" y="225" width="5" height="7" fill="#00ff00" />
<rect x="924" y="226" width="3" height="5" fill="#000000" />
<rect x="933" y="224" width="1" height="10" fill="#00ff00" />
<rect x="931" y="225" width="5" height="4" fill="#00ff00" />
<rect x="932" y="226" width="3" height="2" fill="#ffffff" />
<rect x="941" y="226" width="1" height="10" fill="#00ff00" />
<rect x="939" y="228" width="5" height="7" fill="#00ff00" />
<rect x="940" y="229" width="3" height="5" fill="#ffffff" />
<rect x="949" y="226" width="1" height="15" fill="#00ff00" />
<rect x="947" y="227" width="5" height="9" fill="#00ff00" />
<rect x="948" y="228" width="3" height="7" fill="#000000" />
<rect x="957" y="219" width="1" height="12" fill="#00ff00" />
<rect x="955" y="222" width="5" height="7" fill="#00ff00" />
<rect x="956" y="223" width="3" height="5" fill="#000000" />
<rect x="965" y="218" width="1" height="7" fill="#00ff00" />
<rect x="963" y="222" width="5" height="1" fill="#00ff00" />
<rect x="973" y="219" width="1" height="18" fill="#00ff00" />
<rect x="971" y="222" width="5" height="12" fill="#00ff00" />
<rect x="972" y="223" width="3" height="10" fill="#ffffff" />
<rect x="981" y="212" width="1" height="23" fill="#00ff00" />
<rect x="979" y="214" width="5" height="21" fill="#00ff00" />
<rect x="980" y="215" width="3" height="19" fill="#000000" />
<rect x="989" y="208" width="1" height="9" fill="#00ff00" />
<rect x="987" y="215" width="5" height="1" fill="#00ff00" />
<rect x="997" y="200" width="1" height="19" fill="#00ff00" />
<rect x="995" y="209" width="5" height="7" fill="#00ff00" />
<rect x="996" y="210" width="3" height="5" fill="#000000" />
<rect x="1005" y="208" width="1" height="12" fill="#00ff00" />
<rect x="1003" y="210" width="5" height="10" fill="#00ff00" />
<rect x="1004" y="211" width="3" height="8" fill="#ffffff" />
<rect x="1013" y="203" width="1" height="20" fill="#00ff00" />
<rect x="1011" y="206" width="5" height="13" fill="#00ff00" />
<rect x="1012" y="207" width="3" height="11" fill="#000000" />
<rect x="1021" y="189" width="1" height="18" fill="#00ff00" />
<rect x="1019" y="197" width="5" height="10" fill="#00ff00" />
<rect x="1020" y="198" width="3" height="8" fill="#000000" />
<rect x="1029" y="194" width="1" height="8" fill="#00ff00" />
<rect x="1027" y="198" width="5" height="1" fill="#00ff00" />
<rect x="1037" y="189" width="1" height="13" fill="#00ff00" />
<rect x="1035" y="194" width="5" height="6" fill="#00ff00" />
<rect x="1036" y="195" width="3" height="4" fill="#000000" />
<rect x="1045" y="155" width="1" height="41" fill="#00ff00" />
<rect x="1043" y="155" width="5" height="40" fill="#00ff00" />
<rect x="1044" y="156" width="3" height="38" fill="#000000" />
<rect x="1053" y="147" width="1" height="42" fill="#00ff00" />
<rect x="1051" y="156" width="5" height="22" fill="#00ff00" />
<rect x="1052" y="157" width="3" height="20" fill="#ffffff" />
<rect x="1061" y="174" width="1" height="8" fill="#00ff00" />
<rect x="1059" y="178" width="5" height="3" fill="#00ff00" />
<rect x="1060" y="179" width="3" height="1" fill="#ffffff" />
<rect x="1069" y="162" width="1" height="21" fill="#00ff00" />
<rect x="1067" y="162" width="5" height="20" fill="#00ff00" />
<rect x="1068" y="163" width="3" height="18" fill="#000000" />
<rect x="1077" y="156" width="1" height="11" fill="#00ff00" />
<rect x="1075" y="165" width="5" height="1" fill="#00ff00" />
<rect x="1085" y="158" width="1" height="11" fill="#00ff00" />
<rect x="1083" y="162" width="5" height="3" fill="#00ff00" />
<rect x="1084" y="163" width="3" height="1" fill="#000000" />
<rect x="1093" y="147" width="1" height="18" fill="#00ff00" />
<rect x="1091" y="162" width="5" height="1" fill="#00ff00" />
<rect x="1101" y="162" width="1" height="21" fill="#00ff00" />
<rect x="1099" y="162" width="5" height="21" fill="#00ff00" />
<rect x="1100" y="163" width="3" height="19" fill="#ffffff" />
<rect x="1109" y="175" width="1" height="14" fill="#00ff00" />
<rect x="1107" y="178" width="5" height="5" fill="#00ff00" />
<rect x="1108" y="179" width="3" height="3" fill="#000000" />
<rect x="1117" y="168" width="1" height="14" fill="#00ff00" />
<rect x="1115" y="168" width="5" height="13" fill="#00ff00" />
<rect x="1116" y="169" width="3" height="11" fill="#000000" />
<rect x="1125" y="161" width="1" height="14" fill="#00ff00" />
<rect x="1123" y="164" width="5" height="8" fill="#00ff00" />
<rect x="1124" y="165" width="3" height="6" fill="#000000" />
<rect x="1133" y="165" width="1" height="12" fill="#00ff00" />
<rect x="1131" y="165" width="5" height="11" fill="#00ff00" />
<rect x="1132" y="166" width="3" height="9" fill="#ffffff" />
<rect x="1141" y="166" width="1" height="10" fill="#00ff00" />
<rect x="1139" y="168" width="5" height="7" fill="#00ff00" />
<rect x="1140" y="169" width="3" height="5" fill="#000000" />
<rect x="1149" y="159" width="1" height="12" fill="#00ff00" />
<rect x="1147" y="162" width="5" height="8" fill="#00ff00" />
<rect x="1148" y="163" width="3" height="6" fill="#000000" />
<rect x="1157" y="162" width="1" height="12" fill="#00ff00" />
<rect x="1155" y="162" width="5" height="11" fill="#00ff00" />
<rect x="1156" y="163" width="3" height="9" fill="#ffffff" />
<rect x="1165" y="170" width="1" height="16" fill="#00ff00" />
<rect x="1163" y="172" width="5" height="13" fill="#00ff00" />
<rect x="1164" y="173" width="3" height="11" fill="#ffffff" />
<rect x="1173" y="181" width="1" height="25" fill="#00ff00" />
<rect x="1171" y="184" width="5" height="17" fill="#00ff00" />
<rect x="1172" y="185" width="3" height="15" fill="#ffffff" />
<rect x="1181" y="196" width="1" height="6" fill="#00ff00" />
<rect x="1179" y="196" width="5" height="6" fill="#00ff00" />
<rect x="1180" y="197" width="3" height="4" fill="#000000" />
<rect x="1189" y="192" width="1" height="7" fill="#00ff00" />
<rect x="1187" y="195" width="5" height="1" fill="#00ff00" />
<rect x="1197" y="193" width="1" height="18" fill="#00ff00" />
<rect x="1195" y="195" width="5" height="15" fill="#00ff00" />
<rect x="1196" y="196" width="3" height="13" fill="#ffffff" />
<rect x="1205" y="210" width="1" height="12" fill="#00ff00" />
<rect x="1203" y="210" width="5" height="6" fill="#00ff00" />
<rect x="1204" y="211" width="3" height="4" fill="#ffffff" />
<rect x="1213" y="209" width="1" height="26" fill="#00ff00" />
<rect x="1211" y="216" width="5" height="18" fill="#00ff00" />
<rect x="1212" y="217" width="3" height="16" fill="#ffffff" />
<rect x="1221" y="226" width="1" height="21" fill="#00ff00" />
<rect x="1219" y="231" width="5" height="4" fill="#00ff00" />
<rect x="1220" y="232" width="3" height="2" fill="#ffffff" />
<rect x="1229" y="218" width="1" height="17" fill="#00ff00" />
<rect x="1227" y="228" width="5" height="6" fill="#00ff00" />
<rect x="1228" y="229" width="3" height="4" fill="#000000" />
<rect x="1237" y="208" width="1" height="25" fill="#00ff00" />
<rect x="1235" y="208" width="5" height="25" fill="#00ff00" />
<rect x="1236" y="209" width="3" height="23" fill="#000000" />
<rect x="1245" y="209" width="1" height="12" fill="#00ff00" />
<rect x="1243" y="209" width="5" height="6" fill="#00ff00" />
<rect x="1244" y="210" width="3" height="4" fill="#ffffff" />
<rect x="1253" y="201" width="1" height="16" fill="#00ff00" />
<rect x="1251" y="214" width="5" height="1" fill="#00ff00" />
<rect x="1261" y="195" width="1" height="20" fill="#00ff00" />
<rect x="1259" y="202" width="5" height="13" fill="#00ff00" />
<rect x="1260" y="203" width="3" height="11" fill="#000000" />
<rect x="1269" y="183" width="1" height="17" fill="#00ff00" />
<rect x="1267" y="186" width="5" height="13" fill="#00ff00" />
<rect x="1268" y="187" width="3" height="11" fill="#000000" />
<rect x="1277" y="174" width="1" height="15" fill="#00ff00" />
<rect x="1275" y="176" width="5" height="11" fill="#00ff00" />
<rect x="1276" y="177" width="3" height="9" fill="#000000" />
<rect x="1285" y="174" width="1" height="7" fill="#00ff00" />
<rect x="1283" y="177" width="5" height="1" fill="#00ff00" />
<path d="M788.0 274.0 L813.6 274.0 L835.5 269.8 L851.0 267.0 L877.0 261.5 L895.0 256.0 L917.0 247.8 L948.0 240.6 L979.0 233.0 L1012.0 223.0 L1036.0 215.3 L1045.0 211.0 L1063.0 202.0 L1085.0 189.4 L1107.0 182.8 L1129.0 173.6 L1151.0 168.7 L1173.0 171.4 L1191.0 176.2 L1224.0 191.6 L1246.0 202.0 L1265.7 207.6 L1283.0 206.5 L1287.0 205.5" stroke="#ff0000" stroke-width="1" fill="none" />
</g>
<rect x="788" y="134" width="520" height="1" fill="#fff" />
<rect x="788" y="292" width="520" height="1" fill="#fff" />
<rect x="788" y="134" width="1" height="159" fill="#fff" />
<rect x="1307" y="134" width="1" height="159" fill="#fff" />
<path d="M792 141 H799 L795.5 145.2 Z" fill="#fff" shape-rendering="auto"/>
<text x="804" y="145.5" font-size="9.5" fill="#fff" font-weight="normal" text-anchor="start" textLength="202" lengthAdjust="spacingAndGlyphs" xml:space="preserve" shape-rendering="auto" stroke="#fff" stroke-width="0.15">USDJPY,M1  146.383 146.386 146.377 146.381</text>
<rect x="1308" y="157" width="4" height="1" fill="#fff" />
<text x="1313" y="161.0" font-size="9.5" fill="#fff" font-weight="normal" text-anchor="start" textLength="33.25" lengthAdjust="spacingAndGlyphs" xml:space="preserve" shape-rendering="auto" stroke="#fff" stroke-width="0.15">146.415</text>
<rect x="1308" y="190" width="4" height="1" fill="#fff" />
<text x="1313" y="194.0" font-size="9.5" fill="#fff" font-weight="normal" text-anchor="start" textLength="33.25" lengthAdjust="spacingAndGlyphs" xml:space="preserve" shape-rendering="auto" stroke="#fff" stroke-width="0.15">146.360</text>
<rect x="1308" y="223" width="4" height="1" fill="#fff" />
<text x="1313" y="227.0" font-size="9.5" fill="#fff" font-weight="normal" text-anchor="start" textLength="33.25" lengthAdjust="spacingAndGlyphs" xml:space="preserve" shape-rendering="auto" stroke="#fff" stroke-width="0.15">146.305</text>
<rect x="1308" y="256" width="4" height="1" fill="#fff" />
<text x="1313" y="260.0" font-size="9.5" fill="#fff" font-weight="normal" text-anchor="start" textLength="33.25" lengthAdjust="spacingAndGlyphs" xml:space="preserve" shape-rendering="auto" stroke="#fff" stroke-width="0.15">146.250</text>
<rect x="1308" y="289" width="4" height="1" fill="#fff" />
<text x="1313" y="293.0" font-size="9.5" fill="#fff" font-weight="normal" text-anchor="start" textLength="33.25" lengthAdjust="spacingAndGlyphs" xml:space="preserve" shape-rendering="auto" stroke="#fff" stroke-width="0.15">146.195</text>
<rect x="789" y="293" width="1" height="4" fill="#fff" />
<text x="789" y="304.5" font-size="9.5" fill="#fff" font-weight="normal" text-anchor="start" textLength="51" lengthAdjust="spacingAndGlyphs" xml:space="preserve" shape-rendering="auto" stroke="#fff" stroke-width="0.15">12 Oct 2022</text>
<rect x="853" y="293" width="1" height="4" fill="#fff" />
<text x="853" y="304.5" font-size="9.5" fill="#fff" font-weight="normal" text-anchor="start" textLength="53" lengthAdjust="spacingAndGlyphs" xml:space="preserve" shape-rendering="auto" stroke="#fff" stroke-width="0.15">12 Oct 11:44</text>
<rect x="917" y="293" width="1" height="4" fill="#fff" />
<text x="917" y="304.5" font-size="9.5" fill="#fff" font-weight="normal" text-anchor="start" textLength="53" lengthAdjust="spacingAndGlyphs" xml:space="preserve" shape-rendering="auto" stroke="#fff" stroke-width="0.15">12 Oct 11:52</text>
<rect x="981" y="293" width="1" height="4" fill="#fff" />
<text x="981" y="304.5" font-size="9.5" fill="#fff" font-weight="normal" text-anchor="start" textLength="53" lengthAdjust="spacingAndGlyphs" xml:space="preserve" shape-rendering="auto" stroke="#fff" stroke-width="0.15">12 Oct 12:00</text>
<rect x="1045" y="293" width="1" height="4" fill="#fff" />
<text x="1045" y="304.5" font-size="9.5" fill="#fff" font-weight="normal" text-anchor="start" textLength="53" lengthAdjust="spacingAndGlyphs" xml:space="preserve" shape-rendering="auto" stroke="#fff" stroke-width="0.15">12 Oct 12:08</text>
<rect x="1109" y="293" width="1" height="4" fill="#fff" />
<text x="1109" y="304.5" font-size="9.5" fill="#fff" font-weight="normal" text-anchor="start" textLength="53" lengthAdjust="spacingAndGlyphs" xml:space="preserve" shape-rendering="auto" stroke="#fff" stroke-width="0.15">12 Oct 12:16</text>
<rect x="1173" y="293" width="1" height="4" fill="#fff" />
<text x="1173" y="304.5" font-size="9.5" fill="#fff" font-weight="normal" text-anchor="start" textLength="53" lengthAdjust="spacingAndGlyphs" xml:space="preserve" shape-rendering="auto" stroke="#fff" stroke-width="0.15">12 Oct 12:24</text>
<rect x="1237" y="293" width="1" height="4" fill="#fff" />
<text x="1237" y="304.5" font-size="9.5" fill="#fff" font-weight="normal" text-anchor="start" textLength="53" lengthAdjust="spacingAndGlyphs" xml:space="preserve" shape-rendering="auto" stroke="#fff" stroke-width="0.15">12 Oct 12:32</text>
<rect x="1309" y="172" width="41" height="11" fill="#fff" />
<text x="1313" y="180.5" font-size="9.5" fill="#000" font-weight="normal" text-anchor="start" textLength="33" lengthAdjust="spacingAndGlyphs" xml:space="preserve" shape-rendering="auto" stroke="#000" stroke-width="0.15">146.381</text>
<path d="M234.5 358 V463" stroke="#778899" stroke-width="1" stroke-dasharray="3 3" stroke-dashoffset="0" fill="none"/>
<path d="M234.5 465 V516" stroke="#778899" stroke-width="1" stroke-dasharray="3 3" stroke-dashoffset="0" fill="none"/>
<path d="M266.5 358 V463" stroke="#778899" stroke-width="1" stroke-dasharray="3 3" stroke-dashoffset="0" fill="none"/>
<path d="M266.5 465 V516" stroke="#778899" stroke-width="1" stroke-dasharray="3 3" stroke-dashoffset="0" fill="none"/>
<path d="M298.5 358 V463" stroke="#778899" stroke-width="1" stroke-dasharray="3 3" stroke-dashoffset="0" fill="none"/>
<path d="M298.5 465 V516" stroke="#778899" stroke-width="1" stroke-dasharray="3 3" stroke-dashoffset="0" fill="none"/>
<path d="M330.5 358 V463" stroke="#778899" stroke-width="1" stroke-dasharray="3 3" stroke-dashoffset="0" fill="none"/>
<path d="M330.5 465 V516" stroke="#778899" stroke-width="1" stroke-dasharray="3 3" stroke-dashoffset="0" fill="none"/>
<path d="M362.5 358 V463" stroke="#778899" stroke-width="1" stroke-dasharray="3 3" stroke-dashoffset="0" fill="none"/>
<path d="M362.5 465 V516" stroke="#778899" stroke-width="1" stroke-dasharray="3 3" stroke-dashoffset="0" fill="none"/>
<path d="M394.5 358 V463" stroke="#778899" stroke-width="1" stroke-dasharray="3 3" stroke-dashoffset="0" fill="none"/>
<path d="M394.5 465 V516" stroke="#778899" stroke-width="1" stroke-dasharray="3 3" stroke-dashoffset="0" fill="none"/>
<path d="M426.5 358 V463" stroke="#778899" stroke-width="1" stroke-dasharray="3 3" stroke-dashoffset="0" fill="none"/>
<path d="M426.5 465 V516" stroke="#778899" stroke-width="1" stroke-dasharray="3 3" stroke-dashoffset="0" fill="none"/>
<path d="M458.5 358 V463" stroke="#778899" stroke-width="1" stroke-dasharray="3 3" stroke-dashoffset="0" fill="none"/>
<path d="M458.5 465 V516" stroke="#778899" stroke-width="1" stroke-dasharray="3 3" stroke-dashoffset="0" fill="none"/>
<path d="M490.5 358 V463" stroke="#778899" stroke-width="1" stroke-dasharray="3 3" stroke-dashoffset="0" fill="none"/>
<path d="M490.5 465 V516" stroke="#778899" stroke-width="1" stroke-dasharray="3 3" stroke-dashoffset="0" fill="none"/>
<path d="M522.5 358 V463" stroke="#778899" stroke-width="1" stroke-dasharray="3 3" stroke-dashoffset="0" fill="none"/>
<path d="M522.5 465 V516" stroke="#778899" stroke-width="1" stroke-dasharray="3 3" stroke-dashoffset="0" fill="none"/>
<path d="M554.5 358 V463" stroke="#778899" stroke-width="1" stroke-dasharray="3 3" stroke-dashoffset="0" fill="none"/>
<path d="M554.5 465 V516" stroke="#778899" stroke-width="1" stroke-dasharray="3 3" stroke-dashoffset="0" fill="none"/>
<path d="M586.5 358 V463" stroke="#778899" stroke-width="1" stroke-dasharray="3 3" stroke-dashoffset="0" fill="none"/>
<path d="M586.5 465 V516" stroke="#778899" stroke-width="1" stroke-dasharray="3 3" stroke-dashoffset="0" fill="none"/>
<path d="M618.5 358 V463" stroke="#778899" stroke-width="1" stroke-dasharray="3 3" stroke-dashoffset="0" fill="none"/>
<path d="M618.5 465 V516" stroke="#778899" stroke-width="1" stroke-dasharray="3 3" stroke-dashoffset="0" fill="none"/>
<path d="M650.5 358 V463" stroke="#778899" stroke-width="1" stroke-dasharray="3 3" stroke-dashoffset="0" fill="none"/>
<path d="M650.5 465 V516" stroke="#778899" stroke-width="1" stroke-dasharray="3 3" stroke-dashoffset="0" fill="none"/>
<path d="M682.5 358 V463" stroke="#778899" stroke-width="1" stroke-dasharray="3 3" stroke-dashoffset="0" fill="none"/>
<path d="M682.5 465 V516" stroke="#778899" stroke-width="1" stroke-dasharray="3 3" stroke-dashoffset="0" fill="none"/>
<path d="M714.5 358 V463" stroke="#778899" stroke-width="1" stroke-dasharray="3 3" stroke-dashoffset="0" fill="none"/>
<path d="M714.5 465 V516" stroke="#778899" stroke-width="1" stroke-dasharray="3 3" stroke-dashoffset="0" fill="none"/>
<path d="M203 361.5 H720" stroke="#778899" stroke-width="1" stroke-dasharray="3 3" stroke-dashoffset="0" fill="none"/>
<path d="M203 394.5 H720" stroke="#778899" stroke-width="1" stroke-dasharray="3 3" stroke-dashoffset="0" fill="none"/>
<path d="M203 427.5 H720" stroke="#778899" stroke-width="1" stroke-dasharray="3 3" stroke-dashoffset="0" fill="none"/>
<path d="M203 460.5 H720" stroke="#778899" stroke-width="1" stroke-dasharray="3 3" stroke-dashoffset="0" fill="none"/>
<rect x="202" y="387" width="518" height="1" fill="#778899" />
<clipPath id="c3"><rect x="202" y="359" width="518" height="104"/></clipPath><g clip-path="url(#c3)">
<rect x="202" y="446" width="1" height="15" fill="#00ff00" />
<rect x="201" y="460" width="1" height="1" fill="#00ff00" />
<rect x="203" y="455" width="1" height="1" fill="#00ff00" />
<rect x="206" y="450" width="1" height="11" fill="#00ff00" />
<rect x="205" y="455" width="1" height="1" fill="#00ff00" />
<rect x="207" y="452" width="1" height="1" fill="#00ff00" />
<rect x="210" y="448" width="1" height="8" fill="#00ff00" />
<rect x="209" y="452" width="1" height="1" fill="#00ff00" />
<rect x="211" y="448" width="1" height="1" fill="#00ff00" />
<rect x="214" y="443" width="1" height="10" fill="#00ff00" />
<rect x="213" y="448" width="1" height="1" fill="#00ff00" />
<rect x="215" y="443" width="1" height="1" fill="#00ff00" />
<rect x="218" y="435" width="1" height="9" fill="#00ff00" />
<rect x="217" y="443" width="1" height="1" fill="#00ff00" />
<rect x="219" y="439" width="1" height="1" fill="#00ff00" />
<rect x="222" y="436" width="1" height="8" fill="#00ff00" />
<rect x="221" y="439" width="1" height="1" fill="#00ff00" />
<rect x="223" y="437" width="1" height="1" fill="#00ff00" />
<rect x="226" y="432" width="1" height="10" fill="#00ff00" />
<rect x="225" y="437" width="1" height="1" fill="#00ff00" />
<rect x="227" y="438" width="1" height="1" fill="#00ff00" />
<rect x="230" y="435" width="1" height="7" fill="#00ff00" />
<rect x="229" y="438" width="1" height="1" fill="#00ff00" />
<rect x="231" y="441" width="1" height="1" fill="#00ff00" />
<rect x="234" y="439" width="1" height="8" fill="#00ff00" />
<rect x="233" y="441" width="1" height="1" fill="#00ff00" />
<rect x="235" y="444" width="1" height="1" fill="#00ff00" />
<rect x="238" y="440" width="1" height="10" fill="#00ff00" />
<rect x="237" y="444" width="1" height="1" fill="#00ff00" />
<rect x="239" y="443" width="1" height="1" fill="#00ff00" />
<rect x="242" y="439" width="1" height="10" fill="#00ff00" />
<rect x="241" y="443" width="1" height="1" fill="#00ff00" />
<rect x="243" y="447" width="1" height="1" fill="#00ff00" />
<rect x="246" y="445" width="1" height="5" fill="#00ff00" />
<rect x="245" y="447" width="1" height="1" fill="#00ff00" />
<rect x="247" y="449" width="1" height="1" fill="#00ff00" />
<rect x="250" y="446" width="1" height="6" fill="#00ff00" />
<rect x="249" y="449" width="1" height="1" fill="#00ff00" />
<rect x="251" y="450" width="1" height="1" fill="#00ff00" />
<rect x="254" y="448" width="1" height="5" fill="#00ff00" />
<rect x="253" y="450" width="1" height="1" fill="#00ff00" />
<rect x="255" y="452" width="1" height="1" fill="#00ff00" />
<rect x="258" y="449" width="1" height="7" fill="#00ff00" />
<rect x="257" y="452" width="1" height="1" fill="#00ff00" />
<rect x="259" y="449" width="1" height="1" fill="#00ff00" />
<rect x="262" y="444" width="1" height="7" fill="#00ff00" />
<rect x="261" y="449" width="1" height="1" fill="#00ff00" />
<rect x="263" y="448" width="1" height="1" fill="#00ff00" />
<rect x="266" y="445" width="1" height="8" fill="#00ff00" />
<rect x="265" y="448" width="1" height="1" fill="#00ff00" />
<rect x="267" y="447" width="1" height="1" fill="#00ff00" />
<rect x="270" y="445" width="1" height="5" fill="#00ff00" />
<rect x="269" y="447" width="1" height="1" fill="#00ff00" />
<rect x="271" y="449" width="1" height="1" fill="#00ff00" />
<rect x="274" y="445" width="1" height="9" fill="#00ff00" />
<rect x="273" y="449" width="1" height="1" fill="#00ff00" />
<rect x="275" y="449" width="1" height="1" fill="#00ff00" />
<rect x="278" y="444" width="1" height="11" fill="#00ff00" />
<rect x="277" y="449" width="1" height="1" fill="#00ff00" />
<rect x="279" y="447" width="1" height="1" fill="#00ff00" />
<rect x="282" y="444" width="1" height="7" fill="#00ff00" />
<rect x="281" y="447" width="1" height="1" fill="#00ff00" />
<rect x="283" y="447" width="1" height="1" fill="#00ff00" />
<rect x="286" y="443" width="1" height="10" fill="#00ff00" />
<rect x="285" y="447" width="1" height="1" fill="#00ff00" />
<rect x="287" y="443" width="1" height="1" fill="#00ff00" />
<rect x="290" y="441" width="1" height="5" fill="#00ff00" />
<rect x="289" y="443" width="1" height="1" fill="#00ff00" />
<rect x="291" y="444" width="1" height="1" fill="#00ff00" />
<rect x="294" y="441" width="1" height="6" fill="#00ff00" />
<rect x="293" y="444" width="1" height="1" fill="#00ff00" />
<rect x="295" y="444" width="1" height="1" fill="#00ff00" />
<rect x="298" y="443" width="1" height="4" fill="#00ff00" />
<rect x="297" y="444" width="1" height="1" fill="#00ff00" />
<rect x="299" y="445" width="1" height="1" fill="#00ff00" />
<rect x="302" y="443" width="1" height="6" fill="#00ff00" />
<rect x="301" y="445" width="1" height="1" fill="#00ff00" />
<rect x="303" y="448" width="1" height="1" fill="#00ff00" />
<rect x="306" y="445" width="1" height="6" fill="#00ff00" />
<rect x="305" y="448" width="1" height="1" fill="#00ff00" />
<rect x="307" y="446" width="1" height="1" fill="#00ff00" />
<rect x="310" y="445" width="1" height="4" fill="#00ff00" />
<rect x="309" y="446" width="1" height="1" fill="#00ff00" />
<rect x="311" y="445" width="1" height="1" fill="#00ff00" />
<rect x="314" y="441" width="1" height="9" fill="#00ff00" />
<rect x="313" y="445" width="1" height="1" fill="#00ff00" />
<rect x="315" y="444" width="1" height="1" fill="#00ff00" />
<rect x="318" y="440" width="1" height="9" fill="#00ff00" />
<rect x="317" y="444" width="1" height="1" fill="#00ff00" />
<rect x="319" y="442" width="1" height="1" fill="#00ff00" />
<rect x="322" y="439" width="1" height="8" fill="#00ff00" />
<rect x="321" y="442" width="1" height="1" fill="#00ff00" />
<rect x="323" y="439" width="1" height="1" fill="#00ff00" />
<rect x="326" y="435" width="1" height="7" fill="#00ff00" />
<rect x="325" y="439" width="1" height="1" fill="#00ff00" />
<rect x="327" y="437" width="1" height="1" fill="#00ff00" />
<rect x="330" y="435" width="1" height="5" fill="#00ff00" />
<rect x="329" y="437" width="1" height="1" fill="#00ff00" />
<rect x="331" y="438" width="1" height="1" fill="#00ff00" />
<rect x="334" y="436" width="1" height="5" fill="#00ff00" />
<rect x="333" y="438" width="1" height="1" fill="#00ff00" />
<rect x="335" y="440" width="1" height="1" fill="#00ff00" />
<rect x="338" y="438" width="1" height="6" fill="#00ff00" />
<rect x="337" y="440" width="1" height="1" fill="#00ff00" />
<rect x="339" y="442" width="1" height="1" fill="#00ff00" />
<rect x="342" y="438" width="1" height="8" fill="#00ff00" />
<rect x="341" y="442" width="1" height="1" fill="#00ff00" />
<rect x="343" y="441" width="1" height="1" fill="#00ff00" />
<rect x="346" y="439" width="1" height="5" fill="#00ff00" />
<rect x="345" y="441" width="1" height="1" fill="#00ff00" />
<rect x="347" y="442" width="1" height="1" fill="#00ff00" />
<rect x="350" y="440" width="1" height="5" fill="#00ff00" />
<rect x="349" y="442" width="1" height="1" fill="#00ff00" />
<rect x="351" y="442" width="1" height="1" fill="#00ff00" />
<rect x="354" y="440" width="1" height="6" fill="#00ff00" />
<rect x="353" y="442" width="1" height="1" fill="#00ff00" />
<rect x="355" y="443" width="1" height="1" fill="#00ff00" />
<rect x="358" y="441" width="1" height="5" fill="#00ff00" />
<rect x="357" y="443" width="1" height="1" fill="#00ff00" />
<rect x="359" y="443" width="1" height="1" fill="#00ff00" />
<rect x="362" y="441" width="1" height="5" fill="#00ff00" />
<rect x="361" y="443" width="1" height="1" fill="#00ff00" />
<rect x="363" y="441" width="1" height="1" fill="#00ff00" />
<rect x="366" y="436" width="1" height="8" fill="#00ff00" />
<rect x="365" y="441" width="1" height="1" fill="#00ff00" />
<rect x="367" y="436" width="1" height="1" fill="#00ff00" />
<rect x="370" y="432" width="1" height="9" fill="#00ff00" />
<rect x="369" y="436" width="1" height="1" fill="#00ff00" />
<rect x="371" y="438" width="1" height="1" fill="#00ff00" />
<rect x="374" y="435" width="1" height="6" fill="#00ff00" />
<rect x="373" y="438" width="1" height="1" fill="#00ff00" />
<rect x="375" y="439" width="1" height="1" fill="#00ff00" />
<rect x="378" y="436" width="1" height="6" fill="#00ff00" />
<rect x="377" y="439" width="1" height="1" fill="#00ff00" />
<rect x="379" y="438" width="1" height="1" fill="#00ff00" />
<rect x="382" y="436" width="1" height="5" fill="#00ff00" />
<rect x="381" y="438" width="1" height="1" fill="#00ff00" />
<rect x="383" y="436" width="1" height="1" fill="#00ff00" />
<rect x="386" y="412" width="1" height="25" fill="#00ff00" />
<rect x="385" y="436" width="1" height="1" fill="#00ff00" />
<rect x="387" y="422" width="1" height="1" fill="#00ff00" />
<rect x="390" y="420" width="1" height="6" fill="#00ff00" />
<rect x="389" y="422" width="1" height="1" fill="#00ff00" />
<rect x="391" y="424" width="1" height="1" fill="#00ff00" />
<rect x="394" y="421" width="1" height="7" fill="#00ff00" />
<rect x="393" y="424" width="1" height="1" fill="#00ff00" />
<rect x="395" y="422" width="1" height="1" fill="#00ff00" />
<rect x="398" y="420" width="1" height="6" fill="#00ff00" />
<rect x="397" y="422" width="1" height="1" fill="#00ff00" />
<rect x="399" y="420" width="1" height="1" fill="#00ff00" />
<rect x="402" y="408" width="1" height="14" fill="#00ff00" />
<rect x="401" y="420" width="1" height="1" fill="#00ff00" />
<rect x="403" y="413" width="1" height="1" fill="#00ff00" />
<rect x="406" y="408" width="1" height="10" fill="#00ff00" />
<rect x="405" y="413" width="1" height="1" fill="#00ff00" />
<rect x="407" y="411" width="1" height="1" fill="#00ff00" />
<rect x="410" y="407" width="1" height="9" fill="#00ff00" />
<rect x="409" y="411" width="1" height="1" fill="#00ff00" />
<rect x="411" y="410" width="1" height="1" fill="#00ff00" />
<rect x="414" y="407" width="1" height="6" fill="#00ff00" />
<rect x="413" y="410" width="1" height="1" fill="#00ff00" />
<rect x="415" y="411" width="1" height="1" fill="#00ff00" />
<rect x="418" y="408" width="1" height="6" fill="#00ff00" />
<rect x="417" y="411" width="1" height="1" fill="#00ff00" />
<rect x="419" y="408" width="1" height="1" fill="#00ff00" />
<rect x="422" y="405" width="1" height="5" fill="#00ff00" />
<rect x="421" y="408" width="1" height="1" fill="#00ff00" />
<rect x="423" y="405" width="1" height="1" fill="#00ff00" />
<rect x="426" y="401" width="1" height="5" fill="#00ff00" />
<rect x="425" y="405" width="1" height="1" fill="#00ff00" />
<rect x="427" y="401" width="1" height="1" fill="#00ff00" />
<rect x="430" y="383" width="1" height="20" fill="#00ff00" />
<rect x="429" y="401" width="1" height="1" fill="#00ff00" />
<rect x="431" y="388" width="1" height="1" fill="#00ff00" />
<rect x="434" y="384" width="1" height="9" fill="#00ff00" />
<rect x="433" y="388" width="1" height="1" fill="#00ff00" />
<rect x="435" y="391" width="1" height="1" fill="#00ff00" />
<rect x="438" y="387" width="1" height="10" fill="#00ff00" />
<rect x="437" y="391" width="1" height="1" fill="#00ff00" />
<rect x="439" y="394" width="1" height="1" fill="#00ff00" />
<rect x="442" y="392" width="1" height="6" fill="#00ff00" />
<rect x="441" y="394" width="1" height="1" fill="#00ff00" />
<rect x="443" y="392" width="1" height="1" fill="#00ff00" />
<rect x="446" y="380" width="1" height="17" fill="#00ff00" />
<rect x="445" y="392" width="1" height="1" fill="#00ff00" />
<rect x="447" y="387" width="1" height="1" fill="#00ff00" />
<rect x="450" y="383" width="1" height="9" fill="#00ff00" />
<rect x="449" y="387" width="1" height="1" fill="#00ff00" />
<rect x="451" y="391" width="1" height="1" fill="#00ff00" />
<rect x="454" y="387" width="1" height="8" fill="#00ff00" />
<rect x="453" y="391" width="1" height="1" fill="#00ff00" />
<rect x="455" y="393" width="1" height="1" fill="#00ff00" />
<rect x="458" y="391" width="1" height="6" fill="#00ff00" />
<rect x="457" y="393" width="1" height="1" fill="#00ff00" />
<rect x="459" y="391" width="1" height="1" fill="#00ff00" />
<rect x="462" y="387" width="1" height="10" fill="#00ff00" />
<rect x="461" y="391" width="1" height="1" fill="#00ff00" />
<rect x="463" y="390" width="1" height="1" fill="#00ff00" />
<rect x="466" y="388" width="1" height="6" fill="#00ff00" />
<rect x="465" y="390" width="1" height="1" fill="#00ff00" />
<rect x="467" y="392" width="1" height="1" fill="#00ff00" />
<rect x="470" y="390" width="1" height="5" fill="#00ff00" />
<rect x="469" y="392" width="1" height="1" fill="#00ff00" />
<rect x="471" y="394" width="1" height="1" fill="#00ff00" />
<rect x="474" y="392" width="1" height="5" fill="#00ff00" />
<rect x="473" y="394" width="1" height="1" fill="#00ff00" />
<rect x="475" y="396" width="1" height="1" fill="#00ff00" />
<rect x="478" y="396" width="1" height="10" fill="#00ff00" />
<rect x="477" y="396" width="1" height="1" fill="#00ff00" />
<rect x="479" y="399" width="1" height="1" fill="#00ff00" />
<rect x="482" y="396" width="1" height="7" fill="#00ff00" />
<rect x="481" y="399" width="1" height="1" fill="#00ff00" />
<rect x="483" y="396" width="1" height="1" fill="#00ff00" />
<rect x="486" y="393" width="1" height="8" fill="#00ff00" />
<rect x="485" y="396" width="1" height="1" fill="#00ff00" />
<rect x="487" y="396" width="1" height="1" fill="#00ff00" />
<rect x="490" y="393" width="1" height="6" fill="#00ff00" />
<rect x="489" y="396" width="1" height="1" fill="#00ff00" />
<rect x="491" y="395" width="1" height="1" fill="#00ff00" />
<rect x="494" y="392" width="1" height="7" fill="#00ff00" />
<rect x="493" y="395" width="1" height="1" fill="#00ff00" />
<rect x="495" y="398" width="1" height="1" fill="#00ff00" />
<rect x="498" y="393" width="1" height="11" fill="#00ff00" />
<rect x="497" y="398" width="1" height="1" fill="#00ff00" />
<rect x="499" y="394" width="1" height="1" fill="#00ff00" />
<rect x="502" y="389" width="1" height="12" fill="#00ff00" />
<rect x="501" y="394" width="1" height="1" fill="#00ff00" />
<rect x="503" y="391" width="1" height="1" fill="#00ff00" />
<rect x="506" y="388" width="1" height="7" fill="#00ff00" />
<rect x="505" y="391" width="1" height="1" fill="#00ff00" />
<rect x="507" y="391" width="1" height="1" fill="#00ff00" />
<rect x="510" y="388" width="1" height="7" fill="#00ff00" />
<rect x="509" y="391" width="1" height="1" fill="#00ff00" />
<rect x="511" y="390" width="1" height="1" fill="#00ff00" />
<rect x="514" y="388" width="1" height="6" fill="#00ff00" />
<rect x="513" y="390" width="1" height="1" fill="#00ff00" />
<rect x="515" y="392" width="1" height="1" fill="#00ff00" />
<rect x="518" y="389" width="1" height="8" fill="#00ff00" />
<rect x="517" y="392" width="1" height="1" fill="#00ff00" />
<rect x="519" y="396" width="1" height="1" fill="#00ff00" />
<rect x="522" y="392" width="1" height="9" fill="#00ff00" />
<rect x="521" y="396" width="1" height="1" fill="#00ff00" />
<rect x="523" y="400" width="1" height="1" fill="#00ff00" />
<rect x="526" y="397" width="1" height="6" fill="#00ff00" />
<rect x="525" y="400" width="1" height="1" fill="#00ff00" />
<rect x="527" y="402" width="1" height="1" fill="#00ff00" />
<rect x="530" y="402" width="1" height="7" fill="#00ff00" />
<rect x="529" y="402" width="1" height="1" fill="#00ff00" />
<rect x="531" y="405" width="1" height="1" fill="#00ff00" />
<rect x="534" y="403" width="1" height="5" fill="#00ff00" />
<rect x="533" y="405" width="1" height="1" fill="#00ff00" />
<rect x="535" y="403" width="1" height="1" fill="#00ff00" />
<rect x="538" y="400" width="1" height="7" fill="#00ff00" />
<rect x="537" y="403" width="1" height="1" fill="#00ff00" />
<rect x="539" y="402" width="1" height="1" fill="#00ff00" />
<rect x="542" y="400" width="1" height="6" fill="#00ff00" />
<rect x="541" y="402" width="1" height="1" fill="#00ff00" />
<rect x="543" y="402" width="1" height="1" fill="#00ff00" />
<rect x="546" y="400" width="1" height="6" fill="#00ff00" />
<rect x="545" y="402" width="1" height="1" fill="#00ff00" />
<rect x="547" y="402" width="1" height="1" fill="#00ff00" />
<rect x="550" y="400" width="1" height="6" fill="#00ff00" />
<rect x="549" y="402" width="1" height="1" fill="#00ff00" />
<rect x="551" y="403" width="1" height="1" fill="#00ff00" />
<rect x="554" y="400" width="1" height="7" fill="#00ff00" />
<rect x="553" y="403" width="1" height="1" fill="#00ff00" />
<rect x="555" y="401" width="1" height="1" fill="#00ff00" />
<rect x="558" y="398" width="1" height="8" fill="#00ff00" />
<rect x="557" y="401" width="1" height="1" fill="#00ff00" />
<rect x="559" y="403" width="1" height="1" fill="#00ff00" />
<rect x="562" y="400" width="1" height="7" fill="#00ff00" />
<rect x="561" y="403" width="1" height="1" fill="#00ff00" />
<rect x="563" y="402" width="1" height="1" fill="#00ff00" />
<rect x="566" y="400" width="1" height="6" fill="#00ff00" />
<rect x="565" y="402" width="1" height="1" fill="#00ff00" />
<rect x="567" y="400" width="1" height="1" fill="#00ff00" />
<rect x="570" y="397" width="1" height="6" fill="#00ff00" />
<rect x="569" y="400" width="1" height="1" fill="#00ff00" />
<rect x="571" y="397" width="1" height="1" fill="#00ff00" />
<rect x="574" y="393" width="1" height="6" fill="#00ff00" />
<rect x="573" y="397" width="1" height="1" fill="#00ff00" />
<rect x="575" y="398" width="1" height="1" fill="#00ff00" />
<rect x="578" y="396" width="1" height="5" fill="#00ff00" />
<rect x="577" y="398" width="1" height="1" fill="#00ff00" />
<rect x="579" y="400" width="1" height="1" fill="#00ff00" />
<rect x="582" y="397" width="1" height="6" fill="#00ff00" />
<rect x="581" y="400" width="1" height="1" fill="#00ff00" />
<rect x="583" y="401" width="1" height="1" fill="#00ff00" />
<rect x="586" y="400" width="1" height="4" fill="#00ff00" />
<rect x="585" y="401" width="1" height="1" fill="#00ff00" />
<rect x="587" y="402" width="1" height="1" fill="#00ff00" />
<rect x="590" y="401" width="1" height="3" fill="#00ff00" />
<rect x="589" y="402" width="1" height="1" fill="#00ff00" />
<rect x="591" y="403" width="1" height="1" fill="#00ff00" />
<rect x="594" y="401" width="1" height="5" fill="#00ff00" />
<rect x="593" y="403" width="1" height="1" fill="#00ff00" />
<rect x="595" y="401" width="1" height="1" fill="#00ff00" />
<rect x="598" y="397" width="1" height="6" fill="#00ff00" />
<rect x="597" y="401" width="1" height="1" fill="#00ff00" />
<rect x="599" y="398" width="1" height="1" fill="#00ff00" />
<rect x="602" y="396" width="1" height="6" fill="#00ff00" />
<rect x="601" y="398" width="1" height="1" fill="#00ff00" />
<rect x="603" y="401" width="1" height="1" fill="#00ff00" />
<rect x="606" y="397" width="1" height="9" fill="#00ff00" />
<rect x="605" y="401" width="1" height="1" fill="#00ff00" />
<rect x="607" y="402" width="1" height="1" fill="#00ff00" />
<rect x="610" y="400" width="1" height="6" fill="#00ff00" />
<rect x="609" y="402" width="1" height="1" fill="#00ff00" />
<rect x="611" y="402" width="1" height="1" fill="#00ff00" />
<rect x="614" y="400" width="1" height="6" fill="#00ff00" />
<rect x="613" y="402" width="1" height="1" fill="#00ff00" />
<rect x="615" y="404" width="1" height="1" fill="#00ff00" />
<rect x="618" y="400" width="1" height="9" fill="#00ff00" />
<rect x="617" y="404" width="1" height="1" fill="#00ff00" />
<rect x="619" y="400" width="1" height="1" fill="#00ff00" />
<rect x="622" y="396" width="1" height="10" fill="#00ff00" />
<rect x="621" y="400" width="1" height="1" fill="#00ff00" />
<rect x="623" y="401" width="1" height="1" fill="#00ff00" />
<rect x="626" y="396" width="1" height="12" fill="#00ff00" />
<rect x="625" y="401" width="1" height="1" fill="#00ff00" />
<rect x="627" y="401" width="1" height="1" fill="#00ff00" />
<rect x="630" y="396" width="1" height="11" fill="#00ff00" />
<rect x="629" y="401" width="1" height="1" fill="#00ff00" />
<rect x="631" y="401" width="1" height="1" fill="#00ff00" />
<rect x="634" y="397" width="1" height="9" fill="#00ff00" />
<rect x="633" y="401" width="1" height="1" fill="#00ff00" />
<rect x="635" y="403" width="1" height="1" fill="#00ff00" />
<rect x="638" y="400" width="1" height="8" fill="#00ff00" />
<rect x="637" y="403" width="1" height="1" fill="#00ff00" />
<rect x="639" y="406" width="1" height="1" fill="#00ff00" />
<rect x="642" y="401" width="1" height="11" fill="#00ff00" />
<rect x="641" y="406" width="1" height="1" fill="#00ff00" />
<rect x="643" y="403" width="1" height="1" fill="#00ff00" />
<rect x="646" y="400" width="1" height="8" fill="#00ff00" />
<rect x="645" y="403" width="1" height="1" fill="#00ff00" />
<rect x="647" y="400" width="1" height="1" fill="#00ff00" />
<rect x="650" y="398" width="1" height="5" fill="#00ff00" />
<rect x="649" y="400" width="1" height="1" fill="#00ff00" />
<rect x="651" y="399" width="1" height="1" fill="#00ff00" />
<rect x="654" y="397" width="1" height="5" fill="#00ff00" />
<rect x="653" y="399" width="1" height="1" fill="#00ff00" />
<rect x="655" y="399" width="1" height="1" fill="#00ff00" />
<rect x="658" y="397" width="1" height="5" fill="#00ff00" />
<rect x="657" y="399" width="1" height="1" fill="#00ff00" />
<rect x="659" y="398" width="1" height="1" fill="#00ff00" />
<rect x="662" y="396" width="1" height="5" fill="#00ff00" />
<rect x="661" y="398" width="1" height="1" fill="#00ff00" />
<rect x="663" y="398" width="1" height="1" fill="#00ff00" />
<rect x="666" y="396" width="1" height="6" fill="#00ff00" />
<rect x="665" y="398" width="1" height="1" fill="#00ff00" />
<rect x="667" y="396" width="1" height="1" fill="#00ff00" />
<rect x="670" y="392" width="1" height="6" fill="#00ff00" />
<rect x="669" y="396" width="1" height="1" fill="#00ff00" />
<rect x="671" y="392" width="1" height="1" fill="#00ff00" />
<rect x="674" y="365" width="1" height="29" fill="#00ff00" />
<rect x="673" y="392" width="1" height="1" fill="#00ff00" />
<rect x="675" y="372" width="1" height="1" fill="#00ff00" />
<rect x="678" y="364" width="1" height="17" fill="#00ff00" />
<rect x="677" y="372" width="1" height="1" fill="#00ff00" />
<rect x="679" y="380" width="1" height="1" fill="#00ff00" />
<rect x="682" y="373" width="1" height="16" fill="#00ff00" />
<rect x="681" y="380" width="1" height="1" fill="#00ff00" />
<rect x="683" y="386" width="1" height="1" fill="#00ff00" />
<rect x="686" y="382" width="1" height="8" fill="#00ff00" />
<rect x="685" y="386" width="1" height="1" fill="#00ff00" />
<rect x="687" y="386" width="1" height="1" fill="#00ff00" />
<rect x="690" y="383" width="1" height="6" fill="#00ff00" />
<rect x="689" y="386" width="1" height="1" fill="#00ff00" />
<rect x="691" y="386" width="1" height="1" fill="#00ff00" />
<rect x="694" y="383" width="1" height="6" fill="#00ff00" />
<rect x="693" y="386" width="1" height="1" fill="#00ff00" />
<rect x="695" y="387" width="1" height="1" fill="#00ff00" />
<rect x="698" y="384" width="1" height="6" fill="#00ff00" />
<rect x="697" y="387" width="1" height="1" fill="#00ff00" />
<rect x="699" y="388" width="1" height="1" fill="#00ff00" />
<rect x="702" y="384" width="1" height="10" fill="#00ff00" />
<rect x="701" y="388" width="1" height="1" fill="#00ff00" />
<rect x="703" y="388" width="1" height="1" fill="#00ff00" />
<rect x="706" y="386" width="1" height="6" fill="#00ff00" />
<rect x="705" y="388" width="1" height="1" fill="#00ff00" />
<rect x="707" y="388" width="1" height="1" fill="#00ff00" />
<rect x="710" y="386" width="1" height="4" fill="#00ff00" />
<rect x="709" y="388" width="1" height="1" fill="#00ff00" />
<rect x="711" y="387" width="1" height="1" fill="#00ff00" />
<rect x="714" y="387" width="1" height="2" fill="#00ff00" />
<rect x="713" y="387" width="1" height="1" fill="#00ff00" />
<rect x="715" y="388" width="1" height="1" fill="#00ff00" />
</g>
<path d="M" stroke="#fff" stroke-width="1" fill="none" />
<rect x="201" y="358" width="520" height="1" fill="#fff" />
<rect x="201" y="463" width="520" height="1" fill="#fff" />
<rect x="201" y="358" width="1" height="106" fill="#fff" />
<rect x="720" y="358" width="1" height="106" fill="#fff" />
<rect x="201" y="465" width="520" height="1" fill="#fff" />
<rect x="201" y="516" width="520" height="1" fill="#fff" />
<rect x="201" y="465" width="1" height="52" fill="#fff" />
<rect x="720" y="465" width="1" height="52" fill="#fff" />
<path d="M205 365 H212 L208.5 369.2 Z" fill="#fff" shape-rendering="auto"/>
<text x="217" y="369.5" font-size="9.5" fill="#fff" font-weight="normal" text-anchor="start" textLength="202" lengthAdjust="spacingAndGlyphs" xml:space="preserve" shape-rendering="auto" stroke="#fff" stroke-width="0.15">GBPUSD,M1  1.10520 1.10523 1.10512 1.10518</text>
<path d="M202 495.5 H714" stroke="#c0c0c0" stroke-width="1" stroke-dasharray="5 3" stroke-dashoffset="0" fill="none"/>
<clipPath id="c4"><rect x="202" y="466" width="518" height="50"/></clipPath><g clip-path="url(#c4)">
<rect x="203" y="495" width="1" height="15" fill="#c0c0c0" />
<rect x="207" y="495" width="1" height="16" fill="#c0c0c0" />
<rect x="211" y="495" width="1" height="16" fill="#c0c0c0" />
<rect x="215" y="495" width="1" height="17" fill="#c0c0c0" />
<rect x="219" y="495" width="1" height="17" fill="#c0c0c0" />
<rect x="223" y="495" width="1" height="17" fill="#c0c0c0" />
<rect x="227" y="495" width="1" height="16" fill="#c0c0c0" />
<rect x="231" y="495" width="1" height="16" fill="#c0c0c0" />
<rect x="235" y="495" width="1" height="16" fill="#c0c0c0" />
<rect x="239" y="495" width="1" height="16" fill="#c0c0c0" />
<rect x="243" y="495" width="1" height="16" fill="#c0c0c0" />
<rect x="247" y="495" width="1" height="15" fill="#c0c0c0" />
<rect x="251" y="495" width="1" height="15" fill="#c0c0c0" />
<rect x="255" y="495" width="1" height="15" fill="#c0c0c0" />
<rect x="259" y="495" width="1" height="15" fill="#c0c0c0" />
<rect x="263" y="495" width="1" height="15" fill="#c0c0c0" />
<rect x="267" y="495" width="1" height="14" fill="#c0c0c0" />
<rect x="271" y="495" width="1" height="14" fill="#c0c0c0" />
<rect x="275" y="495" width="1" height="13" fill="#c0c0c0" />
<rect x="279" y="495" width="1" height="13" fill="#c0c0c0" />
<rect x="283" y="495" width="1" height="12" fill="#c0c0c0" />
<rect x="287" y="495" width="1" height="11" fill="#c0c0c0" />
<rect x="291" y="495" width="1" height="10" fill="#c0c0c0" />
<rect x="295" y="495" width="1" height="9" fill="#c0c0c0" />
<rect x="299" y="495" width="1" height="8" fill="#c0c0c0" />
<rect x="303" y="495" width="1" height="7" fill="#c0c0c0" />
<rect x="307" y="495" width="1" height="6" fill="#c0c0c0" />
<rect x="311" y="495" width="1" height="5" fill="#c0c0c0" />
<rect x="315" y="495" width="1" height="5" fill="#c0c0c0" />
<rect x="319" y="495" width="1" height="4" fill="#c0c0c0" />
<rect x="323" y="495" width="1" height="3" fill="#c0c0c0" />
<rect x="327" y="495" width="1" height="3" fill="#c0c0c0" />
<rect x="331" y="495" width="1" height="2" fill="#c0c0c0" />
<rect x="335" y="495" width="1" height="2" fill="#c0c0c0" />
<rect x="387" y="491" width="1" height="5" fill="#c0c0c0" />
<rect x="391" y="489" width="1" height="7" fill="#c0c0c0" />
<rect x="395" y="487" width="1" height="9" fill="#c0c0c0" />
<rect x="399" y="486" width="1" height="10" fill="#c0c0c0" />
<rect x="403" y="484" width="1" height="12" fill="#c0c0c0" />
<rect x="407" y="483" width="1" height="13" fill="#c0c0c0" />
<rect x="411" y="482" width="1" height="14" fill="#c0c0c0" />
<rect x="415" y="480" width="1" height="16" fill="#c0c0c0" />
<rect x="419" y="479" width="1" height="17" fill="#c0c0c0" />
<rect x="423" y="477" width="1" height="19" fill="#c0c0c0" />
<rect x="427" y="474" width="1" height="22" fill="#c0c0c0" />
<rect x="431" y="473" width="1" height="23" fill="#c0c0c0" />
<rect x="435" y="472" width="1" height="24" fill="#c0c0c0" />
<rect x="439" y="471" width="1" height="25" fill="#c0c0c0" />
<rect x="443" y="470" width="1" height="26" fill="#c0c0c0" />
<rect x="447" y="470" width="1" height="26" fill="#c0c0c0" />
<rect x="451" y="470" width="1" height="26" fill="#c0c0c0" />
<rect x="455" y="470" width="1" height="26" fill="#c0c0c0" />
<rect x="459" y="470" width="1" height="26" fill="#c0c0c0" />
<rect x="463" y="471" width="1" height="25" fill="#c0c0c0" />
<rect x="467" y="472" width="1" height="24" fill="#c0c0c0" />
<rect x="471" y="473" width="1" height="23" fill="#c0c0c0" />
<rect x="475" y="476" width="1" height="20" fill="#c0c0c0" />
<rect x="479" y="478" width="1" height="18" fill="#c0c0c0" />
<rect x="483" y="481" width="1" height="15" fill="#c0c0c0" />
<rect x="487" y="482" width="1" height="14" fill="#c0c0c0" />
<rect x="491" y="483" width="1" height="13" fill="#c0c0c0" />
<rect x="495" y="484" width="1" height="12" fill="#c0c0c0" />
<rect x="499" y="485" width="1" height="11" fill="#c0c0c0" />
<rect x="503" y="485" width="1" height="11" fill="#c0c0c0" />
<rect x="507" y="485" width="1" height="11" fill="#c0c0c0" />
<rect x="511" y="485" width="1" height="11" fill="#c0c0c0" />
<rect x="515" y="486" width="1" height="10" fill="#c0c0c0" />
<rect x="519" y="487" width="1" height="9" fill="#c0c0c0" />
<rect x="523" y="488" width="1" height="8" fill="#c0c0c0" />
<rect x="527" y="489" width="1" height="7" fill="#c0c0c0" />
<rect x="531" y="491" width="1" height="5" fill="#c0c0c0" />
<rect x="535" y="492" width="1" height="4" fill="#c0c0c0" />
<rect x="539" y="493" width="1" height="3" fill="#c0c0c0" />
<rect x="543" y="493" width="1" height="3" fill="#c0c0c0" />
<rect x="547" y="494" width="1" height="2" fill="#c0c0c0" />
<rect x="551" y="494" width="1" height="2" fill="#c0c0c0" />
<rect x="555" y="494" width="1" height="2" fill="#c0c0c0" />
<rect x="663" y="494" width="1" height="2" fill="#c0c0c0" />
<rect x="667" y="492" width="1" height="4" fill="#c0c0c0" />
<rect x="671" y="491" width="1" height="5" fill="#c0c0c0" />
<rect x="675" y="489" width="1" height="7" fill="#c0c0c0" />
<rect x="679" y="489" width="1" height="7" fill="#c0c0c0" />
<rect x="683" y="488" width="1" height="8" fill="#c0c0c0" />
<rect x="687" y="487" width="1" height="9" fill="#c0c0c0" />
<rect x="691" y="487" width="1" height="9" fill="#c0c0c0" />
<rect x="695" y="487" width="1" height="9" fill="#c0c0c0" />
<rect x="699" y="487" width="1" height="9" fill="#c0c0c0" />
<rect x="703" y="487" width="1" height="9" fill="#c0c0c0" />
<rect x="707" y="487" width="1" height="9" fill="#c0c0c0" />
<rect x="711" y="487" width="1" height="9" fill="#c0c0c0" />
<path d="M201.0 493.5 L216.0 503.0 L233.9 511.2 L264.5 509.6 L296.8 505.5 L329.0 499.0 L361.0 495.0 L385.0 495.0 L409.7 486.0 L427.0 478.0 L439.0 474.4 L455.0 470.6 L458.0 470.0 L479.0 472.0 L508.0 483.0 L534.0 489.0 L556.0 494.0 L570.0 495.5 L640.0 496.5 L673.0 495.0 L706.0 488.0 L712.0 487.5" stroke="#ff0000" stroke-width="1" fill="none" stroke-dasharray="3 3"/>
</g>
<text x="206" y="477.5" font-size="9.5" fill="#fff" font-weight="normal" text-anchor="start" textLength="148" lengthAdjust="spacingAndGlyphs" xml:space="preserve" shape-rendering="auto" stroke="#fff" stroke-width="0.15">MACD(12,26,9) 0.000466 0.000543</text>
<rect x="721" y="362" width="4" height="1" fill="#fff" />
<text x="726" y="366.0" font-size="9.5" fill="#fff" font-weight="normal" text-anchor="start" textLength="33" lengthAdjust="spacingAndGlyphs" xml:space="preserve" shape-rendering="auto" stroke="#fff" stroke-width="0.15">1.10870</text>
<rect x="721" y="395" width="4" height="1" fill="#fff" />
<text x="726" y="399.0" font-size="9.5" fill="#fff" font-weight="normal" text-anchor="start" textLength="33" lengthAdjust="spacingAndGlyphs" xml:space="preserve" shape-rendering="auto" stroke="#fff" stroke-width="0.15">1.10420</text>
<rect x="721" y="427" width="4" height="1" fill="#fff" />
<text x="726" y="431.0" font-size="9.5" fill="#fff" font-weight="normal" text-anchor="start" textLength="33" lengthAdjust="spacingAndGlyphs" xml:space="preserve" shape-rendering="auto" stroke="#fff" stroke-width="0.15">1.09980</text>
<rect x="721" y="461" width="4" height="1" fill="#fff" />
<text x="726" y="465.0" font-size="9.5" fill="#fff" font-weight="normal" text-anchor="start" textLength="33" lengthAdjust="spacingAndGlyphs" xml:space="preserve" shape-rendering="auto" stroke="#fff" stroke-width="0.15">1.09530</text>
<text x="724" y="476.0" font-size="9.5" fill="#fff" font-weight="normal" text-anchor="start" textLength="36.0" lengthAdjust="spacingAndGlyphs" xml:space="preserve" shape-rendering="auto" stroke="#fff" stroke-width="0.15">0.001874</text>
<text x="724" y="499.0" font-size="9.5" fill="#fff" font-weight="normal" text-anchor="start" textLength="18.0" lengthAdjust="spacingAndGlyphs" xml:space="preserve" shape-rendering="auto" stroke="#fff" stroke-width="0.15">0.00</text>
<text x="724" y="513.0" font-size="9.5" fill="#fff" font-weight="normal" text-anchor="start" textLength="40.5" lengthAdjust="spacingAndGlyphs" xml:space="preserve" shape-rendering="auto" stroke="#fff" stroke-width="0.15">-0.001333</text>
<rect x="722" y="383" width="41" height="11" fill="#fff" />
<text x="726" y="391.5" font-size="9.5" fill="#000" font-weight="normal" text-anchor="start" textLength="33" lengthAdjust="spacingAndGlyphs" xml:space="preserve" shape-rendering="auto" stroke="#000" stroke-width="0.15">1.10518</text>
<rect x="202" y="517" width="1" height="4" fill="#fff" />
<text x="202" y="528.5" font-size="9.5" fill="#fff" font-weight="normal" text-anchor="start" textLength="51" lengthAdjust="spacingAndGlyphs" xml:space="preserve" shape-rendering="auto" stroke="#fff" stroke-width="0.15">12 Oct 2022</text>
<rect x="266" y="517" width="1" height="4" fill="#fff" />
<text x="266" y="528.5" font-size="9.5" fill="#fff" font-weight="normal" text-anchor="start" textLength="53" lengthAdjust="spacingAndGlyphs" xml:space="preserve" shape-rendering="auto" stroke="#fff" stroke-width="0.15">12 Oct 10:47</text>
<rect x="330" y="517" width="1" height="4" fill="#fff" />
<text x="330" y="528.5" font-size="9.5" fill="#fff" font-weight="normal" text-anchor="start" textLength="53" lengthAdjust="spacingAndGlyphs" xml:space="preserve" shape-rendering="auto" stroke="#fff" stroke-width="0.15">12 Oct 11:03</text>
<rect x="394" y="517" width="1" height="4" fill="#fff" />
<text x="394" y="528.5" font-size="9.5" fill="#fff" font-weight="normal" text-anchor="start" textLength="53" lengthAdjust="spacingAndGlyphs" xml:space="preserve" shape-rendering="auto" stroke="#fff" stroke-width="0.15">12 Oct 11:19</text>
<rect x="458" y="517" width="1" height="4" fill="#fff" />
<text x="458" y="528.5" font-size="9.5" fill="#fff" font-weight="normal" text-anchor="start" textLength="53" lengthAdjust="spacingAndGlyphs" xml:space="preserve" shape-rendering="auto" stroke="#fff" stroke-width="0.15">12 Oct 11:35</text>
<rect x="522" y="517" width="1" height="4" fill="#fff" />
<text x="522" y="528.5" font-size="9.5" fill="#fff" font-weight="normal" text-anchor="start" textLength="53" lengthAdjust="spacingAndGlyphs" xml:space="preserve" shape-rendering="auto" stroke="#fff" stroke-width="0.15">12 Oct 11:51</text>
<rect x="586" y="517" width="1" height="4" fill="#fff" />
<text x="586" y="528.5" font-size="9.5" fill="#fff" font-weight="normal" text-anchor="start" textLength="53" lengthAdjust="spacingAndGlyphs" xml:space="preserve" shape-rendering="auto" stroke="#fff" stroke-width="0.15">12 Oct 12:07</text>
<rect x="650" y="517" width="1" height="4" fill="#fff" />
<text x="650" y="528.5" font-size="9.5" fill="#fff" font-weight="normal" text-anchor="start" textLength="53" lengthAdjust="spacingAndGlyphs" xml:space="preserve" shape-rendering="auto" stroke="#fff" stroke-width="0.15">12 Oct 12:23</text>
<path d="M821.5 358 V463" stroke="#778899" stroke-width="1" stroke-dasharray="3 3" stroke-dashoffset="0" fill="none"/>
<path d="M821.5 465 V516" stroke="#778899" stroke-width="1" stroke-dasharray="3 3" stroke-dashoffset="0" fill="none"/>
<path d="M853.5 358 V463" stroke="#778899" stroke-width="1" stroke-dasharray="3 3" stroke-dashoffset="0" fill="none"/>
<path d="M853.5 465 V516" stroke="#778899" stroke-width="1" stroke-dasharray="3 3" stroke-dashoffset="0" fill="none"/>
<path d="M885.5 358 V463" stroke="#778899" stroke-width="1" stroke-dasharray="3 3" stroke-dashoffset="0" fill="none"/>
<path d="M885.5 465 V516" stroke="#778899" stroke-width="1" stroke-dasharray="3 3" stroke-dashoffset="0" fill="none"/>
<path d="M917.5 358 V463" stroke="#778899" stroke-width="1" stroke-dasharray="3 3" stroke-dashoffset="0" fill="none"/>
<path d="M917.5 465 V516" stroke="#778899" stroke-width="1" stroke-dasharray="3 3" stroke-dashoffset="0" fill="none"/>
<path d="M949.5 358 V463" stroke="#778899" stroke-width="1" stroke-dasharray="3 3" stroke-dashoffset="0" fill="none"/>
<path d="M949.5 465 V516" stroke="#778899" stroke-width="1" stroke-dasharray="3 3" stroke-dashoffset="0" fill="none"/>
<path d="M981.5 358 V463" stroke="#778899" stroke-width="1" stroke-dasharray="3 3" stroke-dashoffset="0" fill="none"/>
<path d="M981.5 465 V516" stroke="#778899" stroke-width="1" stroke-dasharray="3 3" stroke-dashoffset="0" fill="none"/>
<path d="M1013.5 358 V463" stroke="#778899" stroke-width="1" stroke-dasharray="3 3" stroke-dashoffset="0" fill="none"/>
<path d="M1013.5 465 V516" stroke="#778899" stroke-width="1" stroke-dasharray="3 3" stroke-dashoffset="0" fill="none"/>
<path d="M1045.5 358 V463" stroke="#778899" stroke-width="1" stroke-dasharray="3 3" stroke-dashoffset="0" fill="none"/>
<path d="M1045.5 465 V516" stroke="#778899" stroke-width="1" stroke-dasharray="3 3" stroke-dashoffset="0" fill="none"/>
<path d="M1077.5 358 V463" stroke="#778899" stroke-width="1" stroke-dasharray="3 3" stroke-dashoffset="0" fill="none"/>
<path d="M1077.5 465 V516" stroke="#778899" stroke-width="1" stroke-dasharray="3 3" stroke-dashoffset="0" fill="none"/>
<path d="M1109.5 358 V463" stroke="#778899" stroke-width="1" stroke-dasharray="3 3" stroke-dashoffset="0" fill="none"/>
<path d="M1109.5 465 V516" stroke="#778899" stroke-width="1" stroke-dasharray="3 3" stroke-dashoffset="0" fill="none"/>
<path d="M1141.5 358 V463" stroke="#778899" stroke-width="1" stroke-dasharray="3 3" stroke-dashoffset="0" fill="none"/>
<path d="M1141.5 465 V516" stroke="#778899" stroke-width="1" stroke-dasharray="3 3" stroke-dashoffset="0" fill="none"/>
<path d="M1173.5 358 V463" stroke="#778899" stroke-width="1" stroke-dasharray="3 3" stroke-dashoffset="0" fill="none"/>
<path d="M1173.5 465 V516" stroke="#778899" stroke-width="1" stroke-dasharray="3 3" stroke-dashoffset="0" fill="none"/>
<path d="M1205.5 358 V463" stroke="#778899" stroke-width="1" stroke-dasharray="3 3" stroke-dashoffset="0" fill="none"/>
<path d="M1205.5 465 V516" stroke="#778899" stroke-width="1" stroke-dasharray="3 3" stroke-dashoffset="0" fill="none"/>
<path d="M1237.5 358 V463" stroke="#778899" stroke-width="1" stroke-dasharray="3 3" stroke-dashoffset="0" fill="none"/>
<path d="M1237.5 465 V516" stroke="#778899" stroke-width="1" stroke-dasharray="3 3" stroke-dashoffset="0" fill="none"/>
<path d="M1269.5 358 V463" stroke="#778899" stroke-width="1" stroke-dasharray="3 3" stroke-dashoffset="0" fill="none"/>
<path d="M1269.5 465 V516" stroke="#778899" stroke-width="1" stroke-dasharray="3 3" stroke-dashoffset="0" fill="none"/>
<path d="M1301.5 358 V463" stroke="#778899" stroke-width="1" stroke-dasharray="3 3" stroke-dashoffset="0" fill="none"/>
<path d="M1301.5 465 V516" stroke="#778899" stroke-width="1" stroke-dasharray="3 3" stroke-dashoffset="0" fill="none"/>
<path d="M790 392.5 H1307" stroke="#778899" stroke-width="1" stroke-dasharray="3 3" stroke-dashoffset="0" fill="none"/>
<path d="M790 427.5 H1307" stroke="#778899" stroke-width="1" stroke-dasharray="3 3" stroke-dashoffset="0" fill="none"/>
<path d="M790 460.5 H1307" stroke="#778899" stroke-width="1" stroke-dasharray="3 3" stroke-dashoffset="0" fill="none"/>
<path d="M790 486.5 H1307" stroke="#778899" stroke-width="1" stroke-dasharray="3 3" stroke-dashoffset="0" fill="none"/>
<path d="M790 497.5 H1307" stroke="#778899" stroke-width="1" stroke-dasharray="3 3" stroke-dashoffset="0" fill="none"/>
<path d="M790 509.5 H1307" stroke="#778899" stroke-width="1" stroke-dasharray="3 3" stroke-dashoffset="0" fill="none"/>
<clipPath id="c5"><rect x="789" y="466" width="518" height="50"/></clipPath><g clip-path="url(#c5)">
<rect x="789" y="490" width="1" height="26" fill="#ff0000" />
<rect x="797" y="494" width="1" height="22" fill="#ff0000" />
<rect x="805" y="483" width="1" height="33" fill="#008000" />
<rect x="813" y="485" width="1" height="31" fill="#ff0000" />
<rect x="821" y="484" width="1" height="32" fill="#008000" />
<rect x="829" y="485" width="1" height="31" fill="#ff0000" />
<rect x="837" y="494" width="1" height="22" fill="#ff0000" />
<rect x="845" y="490" width="1" height="26" fill="#008000" />
<rect x="853" y="499" width="1" height="17" fill="#ff0000" />
<rect x="861" y="494" width="1" height="22" fill="#008000" />
<rect x="869" y="495" width="1" height="21" fill="#ff0000" />
<rect x="877" y="498" width="1" height="18" fill="#ff0000" />
<rect x="885" y="500" width="1" height="16" fill="#ff0000" />
<rect x="893" y="494" width="1" height="22" fill="#008000" />
<rect x="901" y="495" width="1" height="21" fill="#ff0000" />
<rect x="909" y="490" width="1" height="26" fill="#008000" />
<rect x="917" y="495" width="1" height="21" fill="#ff0000" />
<rect x="925" y="485" width="1" height="31" fill="#008000" />
<rect x="933" y="491" width="1" height="25" fill="#ff0000" />
<rect x="941" y="490" width="1" height="26" fill="#008000" />
<rect x="949" y="490" width="1" height="26" fill="#ff0000" />
<rect x="957" y="485" width="1" height="31" fill="#008000" />
<rect x="965" y="497" width="1" height="19" fill="#ff0000" />
<rect x="973" y="494" width="1" height="22" fill="#008000" />
<rect x="981" y="485" width="1" height="31" fill="#008000" />
<rect x="989" y="494" width="1" height="22" fill="#ff0000" />
<rect x="997" y="481" width="1" height="35" fill="#008000" />
<rect x="1005" y="486" width="1" height="30" fill="#ff0000" />
<rect x="1013" y="494" width="1" height="22" fill="#ff0000" />
<rect x="1021" y="491" width="1" height="25" fill="#008000" />
<rect x="1029" y="494" width="1" height="22" fill="#008000" />
<rect x="1037" y="483" width="1" height="33" fill="#008000" />
<rect x="1045" y="490" width="1" height="26" fill="#ff0000" />
<rect x="1053" y="499" width="1" height="17" fill="#ff0000" />
<rect x="1061" y="489" width="1" height="27" fill="#008000" />
<rect x="1069" y="488" width="1" height="28" fill="#008000" />
<rect x="1077" y="494" width="1" height="22" fill="#ff0000" />
<rect x="1085" y="491" width="1" height="25" fill="#008000" />
<rect x="1093" y="488" width="1" height="28" fill="#008000" />
<rect x="1101" y="490" width="1" height="26" fill="#ff0000" />
<rect x="1109" y="495" width="1" height="21" fill="#ff0000" />
<rect x="1117" y="486" width="1" height="30" fill="#008000" />
<rect x="1125" y="486" width="1" height="30" fill="#ff0000" />
<rect x="1133" y="485" width="1" height="31" fill="#008000" />
<rect x="1141" y="490" width="1" height="26" fill="#ff0000" />
<rect x="1149" y="497" width="1" height="19" fill="#ff0000" />
<rect x="1157" y="494" width="1" height="22" fill="#008000" />
<rect x="1165" y="489" width="1" height="27" fill="#008000" />
<rect x="1173" y="485" width="1" height="31" fill="#008000" />
<rect x="1181" y="490" width="1" height="26" fill="#ff0000" />
<rect x="1189" y="488" width="1" height="28" fill="#008000" />
<rect x="1197" y="491" width="1" height="25" fill="#ff0000" />
<rect x="1205" y="485" width="1" height="31" fill="#008000" />
<rect x="1213" y="484" width="1" height="32" fill="#008000" />
<rect x="1221" y="471" width="1" height="45" fill="#008000" />
<rect x="1229" y="486" width="1" height="30" fill="#ff0000" />
<rect x="1237" y="485" width="1" height="31" fill="#008000" />
<rect x="1245" y="483" width="1" height="33" fill="#008000" />
<rect x="1253" y="490" width="1" height="26" fill="#ff0000" />
<rect x="1261" y="491" width="1" height="25" fill="#ff0000" />
<rect x="1269" y="487" width="1" height="29" fill="#008000" />
<rect x="1277" y="488" width="1" height="28" fill="#ff0000" />
<rect x="1285" y="508" width="1" height="8" fill="#ff0000" />
<path d="M789.0 508.7 L805.3 513.0 L820.6 511.3 L829.5 506.2 L853.6 505.0 L861.2 507.5 L870.0 493.5 L879.0 487.0 L885.4 490.2 L894.0 486.6 L909.5 495.3 L917.0 499.9 L926.0 512.0 L941.3 497.3 L950.0 496.0 L963.0 502.4 L980.7 513.8 L997.2 501.0 L1005.6 484.6 L1013.7 480.0 L1029.0 494.3 L1041.0 502.4 L1053.5 507.0 L1061.3 499.3 L1069.5 505.0 L1077.3 507.5 L1085.5 501.0 L1093.3 503.5 L1109.4 492.2 L1117.5 497.3 L1125.4 497.3 L1133.5 493.5 L1149.5 499.9 L1165.5 471.4 L1173.4 469.4 L1181.5 474.5 L1197.5 484.6 L1213.5 473.2 L1221.4 479.5 L1237.4 488.4 L1253.5 493.5 L1269.5 503.7 L1277.6 507.5 L1285.5 508.7" stroke="#20b2aa" stroke-width="1" fill="none" />
</g>
<rect x="789" y="420" width="518" height="1" fill="#778899" />
<clipPath id="c6"><rect x="789" y="359" width="518" height="104"/></clipPath><g clip-path="url(#c6)">
<rect x="789" y="415" width="1" height="11" fill="#00ff00" />
<rect x="787" y="420" width="2" height="1" fill="#00ff00" />
<rect x="790" y="421" width="2" height="1" fill="#00ff00" />
<rect x="797" y="409" width="1" height="24" fill="#00ff00" />
<rect x="795" y="421" width="2" height="1" fill="#00ff00" />
<rect x="798" y="432" width="2" height="1" fill="#00ff00" />
<rect x="805" y="427" width="1" height="17" fill="#00ff00" />
<rect x="803" y="432" width="2" height="1" fill="#00ff00" />
<rect x="806" y="443" width="2" height="1" fill="#00ff00" />
<rect x="813" y="439" width="1" height="13" fill="#00ff00" />
<rect x="811" y="443" width="2" height="1" fill="#00ff00" />
<rect x="814" y="449" width="2" height="1" fill="#00ff00" />
<rect x="821" y="441" width="1" height="16" fill="#00ff00" />
<rect x="819" y="449" width="2" height="1" fill="#00ff00" />
<rect x="822" y="441" width="2" height="1" fill="#00ff00" />
<rect x="829" y="429" width="1" height="19" fill="#00ff00" />
<rect x="827" y="441" width="2" height="1" fill="#00ff00" />
<rect x="830" y="441" width="2" height="1" fill="#00ff00" />
<rect x="837" y="436" width="1" height="11" fill="#00ff00" />
<rect x="835" y="441" width="2" height="1" fill="#00ff00" />
<rect x="838" y="443" width="2" height="1" fill="#00ff00" />
<rect x="845" y="435" width="1" height="18" fill="#00ff00" />
<rect x="843" y="443" width="2" height="1" fill="#00ff00" />
<rect x="846" y="440" width="2" height="1" fill="#00ff00" />
<rect x="853" y="432" width="1" height="15" fill="#00ff00" />
<rect x="851" y="440" width="2" height="1" fill="#00ff00" />
<rect x="854" y="446" width="2" height="1" fill="#00ff00" />
<rect x="861" y="443" width="1" height="15" fill="#00ff00" />
<rect x="859" y="446" width="2" height="1" fill="#00ff00" />
<rect x="862" y="443" width="2" height="1" fill="#00ff00" />
<rect x="869" y="420" width="1" height="25" fill="#00ff00" />
<rect x="867" y="443" width="2" height="1" fill="#00ff00" />
<rect x="870" y="421" width="2" height="1" fill="#00ff00" />
<rect x="877" y="416" width="1" height="11" fill="#00ff00" />
<rect x="875" y="421" width="2" height="1" fill="#00ff00" />
<rect x="878" y="425" width="2" height="1" fill="#00ff00" />
<rect x="885" y="418" width="1" height="14" fill="#00ff00" />
<rect x="883" y="425" width="2" height="1" fill="#00ff00" />
<rect x="886" y="421" width="2" height="1" fill="#00ff00" />
<rect x="893" y="413" width="1" height="17" fill="#00ff00" />
<rect x="891" y="421" width="2" height="1" fill="#00ff00" />
<rect x="894" y="428" width="2" height="1" fill="#00ff00" />
<rect x="901" y="416" width="1" height="25" fill="#00ff00" />
<rect x="899" y="428" width="2" height="1" fill="#00ff00" />
<rect x="902" y="434" width="2" height="1" fill="#00ff00" />
<rect x="909" y="430" width="1" height="10" fill="#00ff00" />
<rect x="907" y="434" width="2" height="1" fill="#00ff00" />
<rect x="910" y="437" width="2" height="1" fill="#00ff00" />
<rect x="917" y="432" width="1" height="10" fill="#00ff00" />
<rect x="915" y="437" width="2" height="1" fill="#00ff00" />
<rect x="918" y="441" width="2" height="1" fill="#00ff00" />
<rect x="925" y="440" width="1" height="19" fill="#00ff00" />
<rect x="923" y="441" width="2" height="1" fill="#00ff00" />
<rect x="926" y="448" width="2" height="1" fill="#00ff00" />
<rect x="933" y="441" width="1" height="15" fill="#00ff00" />
<rect x="931" y="448" width="2" height="1" fill="#00ff00" />
<rect x="934" y="441" width="2" height="1" fill="#00ff00" />
<rect x="941" y="430" width="1" height="19" fill="#00ff00" />
<rect x="939" y="441" width="2" height="1" fill="#00ff00" />
<rect x="942" y="434" width="2" height="1" fill="#00ff00" />
<rect x="949" y="429" width="1" height="11" fill="#00ff00" />
<rect x="947" y="434" width="2" height="1" fill="#00ff00" />
<rect x="950" y="437" width="2" height="1" fill="#00ff00" />
<rect x="957" y="432" width="1" height="11" fill="#00ff00" />
<rect x="955" y="437" width="2" height="1" fill="#00ff00" />
<rect x="958" y="441" width="2" height="1" fill="#00ff00" />
<rect x="965" y="438" width="1" height="6" fill="#00ff00" />
<rect x="963" y="441" width="2" height="1" fill="#00ff00" />
<rect x="966" y="443" width="2" height="1" fill="#00ff00" />
<rect x="973" y="441" width="1" height="12" fill="#00ff00" />
<rect x="971" y="443" width="2" height="1" fill="#00ff00" />
<rect x="974" y="452" width="2" height="1" fill="#00ff00" />
<rect x="981" y="445" width="1" height="15" fill="#00ff00" />
<rect x="979" y="452" width="2" height="1" fill="#00ff00" />
<rect x="982" y="448" width="2" height="1" fill="#00ff00" />
<rect x="989" y="440" width="1" height="16" fill="#00ff00" />
<rect x="987" y="448" width="2" height="1" fill="#00ff00" />
<rect x="990" y="446" width="2" height="1" fill="#00ff00" />
<rect x="997" y="438" width="1" height="17" fill="#00ff00" />
<rect x="995" y="446" width="2" height="1" fill="#00ff00" />
<rect x="998" y="438" width="2" height="1" fill="#00ff00" />
<rect x="1005" y="423" width="1" height="17" fill="#00ff00" />
<rect x="1003" y="438" width="2" height="1" fill="#00ff00" />
<rect x="1006" y="426" width="2" height="1" fill="#00ff00" />
<rect x="1013" y="421" width="1" height="11" fill="#00ff00" />
<rect x="1011" y="426" width="2" height="1" fill="#00ff00" />
<rect x="1014" y="431" width="2" height="1" fill="#00ff00" />
<rect x="1021" y="427" width="1" height="13" fill="#00ff00" />
<rect x="1019" y="431" width="2" height="1" fill="#00ff00" />
<rect x="1022" y="436" width="2" height="1" fill="#00ff00" />
<rect x="1029" y="429" width="1" height="15" fill="#00ff00" />
<rect x="1027" y="436" width="2" height="1" fill="#00ff00" />
<rect x="1030" y="439" width="2" height="1" fill="#00ff00" />
<rect x="1037" y="436" width="1" height="7" fill="#00ff00" />
<rect x="1035" y="439" width="2" height="1" fill="#00ff00" />
<rect x="1038" y="442" width="2" height="1" fill="#00ff00" />
<rect x="1045" y="436" width="1" height="16" fill="#00ff00" />
<rect x="1043" y="442" width="2" height="1" fill="#00ff00" />
<rect x="1046" y="449" width="2" height="1" fill="#00ff00" />
<rect x="1053" y="443" width="1" height="12" fill="#00ff00" />
<rect x="1051" y="449" width="2" height="1" fill="#00ff00" />
<rect x="1054" y="443" width="2" height="1" fill="#00ff00" />
<rect x="1061" y="436" width="1" height="11" fill="#00ff00" />
<rect x="1059" y="443" width="2" height="1" fill="#00ff00" />
<rect x="1062" y="446" width="2" height="1" fill="#00ff00" />
<rect x="1069" y="439" width="1" height="15" fill="#00ff00" />
<rect x="1067" y="446" width="2" height="1" fill="#00ff00" />
<rect x="1070" y="450" width="2" height="1" fill="#00ff00" />
<rect x="1077" y="443" width="1" height="15" fill="#00ff00" />
<rect x="1075" y="450" width="2" height="1" fill="#00ff00" />
<rect x="1078" y="446" width="2" height="1" fill="#00ff00" />
<rect x="1085" y="440" width="1" height="14" fill="#00ff00" />
<rect x="1083" y="446" width="2" height="1" fill="#00ff00" />
<rect x="1086" y="447" width="2" height="1" fill="#00ff00" />
<rect x="1093" y="440" width="1" height="15" fill="#00ff00" />
<rect x="1091" y="447" width="2" height="1" fill="#00ff00" />
<rect x="1094" y="445" width="2" height="1" fill="#00ff00" />
<rect x="1101" y="439" width="1" height="14" fill="#00ff00" />
<rect x="1099" y="445" width="2" height="1" fill="#00ff00" />
<rect x="1102" y="439" width="2" height="1" fill="#00ff00" />
<rect x="1109" y="431" width="1" height="11" fill="#00ff00" />
<rect x="1107" y="439" width="2" height="1" fill="#00ff00" />
<rect x="1110" y="439" width="2" height="1" fill="#00ff00" />
<rect x="1117" y="428" width="1" height="23" fill="#00ff00" />
<rect x="1115" y="439" width="2" height="1" fill="#00ff00" />
<rect x="1118" y="444" width="2" height="1" fill="#00ff00" />
<rect x="1125" y="433" width="1" height="22" fill="#00ff00" />
<rect x="1123" y="444" width="2" height="1" fill="#00ff00" />
<rect x="1126" y="442" width="2" height="1" fill="#00ff00" />
<rect x="1133" y="438" width="1" height="9" fill="#00ff00" />
<rect x="1131" y="442" width="2" height="1" fill="#00ff00" />
<rect x="1134" y="443" width="2" height="1" fill="#00ff00" />
<rect x="1141" y="436" width="1" height="16" fill="#00ff00" />
<rect x="1139" y="443" width="2" height="1" fill="#00ff00" />
<rect x="1142" y="444" width="2" height="1" fill="#00ff00" />
<rect x="1149" y="439" width="1" height="11" fill="#00ff00" />
<rect x="1147" y="444" width="2" height="1" fill="#00ff00" />
<rect x="1150" y="440" width="2" height="1" fill="#00ff00" />
<rect x="1157" y="434" width="1" height="13" fill="#00ff00" />
<rect x="1155" y="440" width="2" height="1" fill="#00ff00" />
<rect x="1158" y="434" width="2" height="1" fill="#00ff00" />
<rect x="1165" y="424" width="1" height="16" fill="#00ff00" />
<rect x="1163" y="434" width="2" height="1" fill="#00ff00" />
<rect x="1166" y="424" width="2" height="1" fill="#00ff00" />
<rect x="1173" y="413" width="1" height="18" fill="#00ff00" />
<rect x="1171" y="424" width="2" height="1" fill="#00ff00" />
<rect x="1174" y="415" width="2" height="1" fill="#00ff00" />
<rect x="1181" y="408" width="1" height="15" fill="#00ff00" />
<rect x="1179" y="415" width="2" height="1" fill="#00ff00" />
<rect x="1182" y="419" width="2" height="1" fill="#00ff00" />
<rect x="1189" y="413" width="1" height="13" fill="#00ff00" />
<rect x="1187" y="419" width="2" height="1" fill="#00ff00" />
<rect x="1190" y="416" width="2" height="1" fill="#00ff00" />
<rect x="1197" y="410" width="1" height="13" fill="#00ff00" />
<rect x="1195" y="416" width="2" height="1" fill="#00ff00" />
<rect x="1198" y="410" width="2" height="1" fill="#00ff00" />
<rect x="1205" y="388" width="1" height="29" fill="#00ff00" />
<rect x="1203" y="410" width="2" height="1" fill="#00ff00" />
<rect x="1206" y="388" width="2" height="1" fill="#00ff00" />
<rect x="1213" y="367" width="1" height="24" fill="#00ff00" />
<rect x="1211" y="388" width="2" height="1" fill="#00ff00" />
<rect x="1214" y="377" width="2" height="1" fill="#00ff00" />
<rect x="1221" y="367" width="1" height="22" fill="#00ff00" />
<rect x="1219" y="377" width="2" height="1" fill="#00ff00" />
<rect x="1222" y="385" width="2" height="1" fill="#00ff00" />
<rect x="1229" y="379" width="1" height="14" fill="#00ff00" />
<rect x="1227" y="385" width="2" height="1" fill="#00ff00" />
<rect x="1230" y="388" width="2" height="1" fill="#00ff00" />
<rect x="1237" y="381" width="1" height="16" fill="#00ff00" />
<rect x="1235" y="388" width="2" height="1" fill="#00ff00" />
<rect x="1238" y="393" width="2" height="1" fill="#00ff00" />
<rect x="1245" y="387" width="1" height="13" fill="#00ff00" />
<rect x="1243" y="393" width="2" height="1" fill="#00ff00" />
<rect x="1246" y="398" width="2" height="1" fill="#00ff00" />
<rect x="1253" y="392" width="1" height="14" fill="#00ff00" />
<rect x="1251" y="398" width="2" height="1" fill="#00ff00" />
<rect x="1254" y="401" width="2" height="1" fill="#00ff00" />
<rect x="1261" y="391" width="1" height="21" fill="#00ff00" />
<rect x="1259" y="401" width="2" height="1" fill="#00ff00" />
<rect x="1262" y="411" width="2" height="1" fill="#00ff00" />
<rect x="1269" y="407" width="1" height="10" fill="#00ff00" />
<rect x="1267" y="411" width="2" height="1" fill="#00ff00" />
<rect x="1270" y="416" width="2" height="1" fill="#00ff00" />
<rect x="1277" y="408" width="1" height="18" fill="#00ff00" />
<rect x="1275" y="416" width="2" height="1" fill="#00ff00" />
<rect x="1278" y="421" width="2" height="1" fill="#00ff00" />
<rect x="1285" y="419" width="1" height="5" fill="#00ff00" />
<rect x="1283" y="421" width="2" height="1" fill="#00ff00" />
<rect x="1286" y="421" width="2" height="1" fill="#00ff00" />
</g>
<rect x="788" y="358" width="520" height="1" fill="#fff" />
<rect x="788" y="463" width="520" height="1" fill="#fff" />
<rect x="788" y="358" width="1" height="106" fill="#fff" />
<rect x="1307" y="358" width="1" height="106" fill="#fff" />
<rect x="788" y="465" width="520" height="1" fill="#fff" />
<rect x="788" y="516" width="520" height="1" fill="#fff" />
<rect x="788" y="465" width="1" height="52" fill="#fff" />
<rect x="1307" y="465" width="1" height="52" fill="#fff" />
<path d="M792 365 H799 L795.5 369.2 Z" fill="#fff" shape-rendering="auto"/>
<text x="804" y="369.5" font-size="9.5" fill="#fff" font-weight="normal" text-anchor="start" textLength="202" lengthAdjust="spacingAndGlyphs" xml:space="preserve" shape-rendering="auto" stroke="#fff" stroke-width="0.15">AUDUSD,M1  0.62644 0.62650 0.62642 0.62648</text>
<text x="793" y="477.5" font-size="9.5" fill="#fff" font-weight="normal" text-anchor="start" textLength="127" lengthAdjust="spacingAndGlyphs" xml:space="preserve" shape-rendering="auto" stroke="#fff" stroke-width="0.15">CCI(14) -98.0074  Volumes 37</text>
<rect x="1308" y="392" width="4" height="1" fill="#fff" />
<text x="1313" y="396.0" font-size="9.5" fill="#fff" font-weight="normal" text-anchor="start" textLength="33" lengthAdjust="spacingAndGlyphs" xml:space="preserve" shape-rendering="auto" stroke="#fff" stroke-width="0.15">0.62700</text>
<rect x="1308" y="427" width="4" height="1" fill="#fff" />
<text x="1313" y="431.0" font-size="9.5" fill="#fff" font-weight="normal" text-anchor="start" textLength="33" lengthAdjust="spacingAndGlyphs" xml:space="preserve" shape-rendering="auto" stroke="#fff" stroke-width="0.15">0.62635</text>
<rect x="1308" y="460" width="4" height="1" fill="#fff" />
<text x="1313" y="464.0" font-size="9.5" fill="#fff" font-weight="normal" text-anchor="start" textLength="33" lengthAdjust="spacingAndGlyphs" xml:space="preserve" shape-rendering="auto" stroke="#fff" stroke-width="0.15">0.62575</text>
<text x="1311" y="476.0" font-size="9.5" fill="#fff" font-weight="normal" text-anchor="start" textLength="33.25" lengthAdjust="spacingAndGlyphs" xml:space="preserve" shape-rendering="auto" stroke="#fff" stroke-width="0.15">267.773</text>
<text x="1311" y="490.0" font-size="9.5" fill="#fff" font-weight="normal" text-anchor="start" textLength="14.25" lengthAdjust="spacingAndGlyphs" xml:space="preserve" shape-rendering="auto" stroke="#fff" stroke-width="0.15">100</text>
<text x="1311" y="501.0" font-size="9.5" fill="#fff" font-weight="normal" text-anchor="start" textLength="19.0" lengthAdjust="spacingAndGlyphs" xml:space="preserve" shape-rendering="auto" stroke="#fff" stroke-width="0.15">0.00</text>
<text x="1311" y="513.0" font-size="9.5" fill="#fff" font-weight="normal" text-anchor="start" textLength="19.0" lengthAdjust="spacingAndGlyphs" xml:space="preserve" shape-rendering="auto" stroke="#fff" stroke-width="0.15">-100</text>
<text x="1310" y="513.5" font-size="9.5" fill="#fff" font-weight="normal" text-anchor="start" textLength="42" lengthAdjust="spacingAndGlyphs" xml:space="preserve" shape-rendering="auto" stroke="#fff" stroke-width="0.15">-160.1638</text>
<rect x="1309" y="415" width="41" height="11" fill="#fff" />
<text x="1313" y="423.5" font-size="9.5" fill="#000" font-weight="normal" text-anchor="start" textLength="33" lengthAdjust="spacingAndGlyphs" xml:space="preserve" shape-rendering="auto" stroke="#000" stroke-width="0.15">0.62648</text>
<rect x="789" y="517" width="1" height="4" fill="#fff" />
<text x="789" y="528.5" font-size="9.5" fill="#fff" font-weight="normal" text-anchor="start" textLength="51" lengthAdjust="spacingAndGlyphs" xml:space="preserve" shape-rendering="auto" stroke="#fff" stroke-width="0.15">12 Oct 2022</text>
<rect x="853" y="517" width="1" height="4" fill="#fff" />
<text x="853" y="528.5" font-size="9.5" fill="#fff" font-weight="normal" text-anchor="start" textLength="53" lengthAdjust="spacingAndGlyphs" xml:space="preserve" shape-rendering="auto" stroke="#fff" stroke-width="0.15">12 Oct 11:44</text>
<rect x="917" y="517" width="1" height="4" fill="#fff" />
<text x="917" y="528.5" font-size="9.5" fill="#fff" font-weight="normal" text-anchor="start" textLength="53" lengthAdjust="spacingAndGlyphs" xml:space="preserve" shape-rendering="auto" stroke="#fff" stroke-width="0.15">12 Oct 11:52</text>
<rect x="981" y="517" width="1" height="4" fill="#fff" />
<text x="981" y="528.5" font-size="9.5" fill="#fff" font-weight="normal" text-anchor="start" textLength="53" lengthAdjust="spacingAndGlyphs" xml:space="preserve" shape-rendering="auto" stroke="#fff" stroke-width="0.15">12 Oct 12:00</text>
<rect x="1045" y="517" width="1" height="4" fill="#fff" />
<text x="1045" y="528.5" font-size="9.5" fill="#fff" font-weight="normal" text-anchor="start" textLength="53" lengthAdjust="spacingAndGlyphs" xml:space="preserve" shape-rendering="auto" stroke="#fff" stroke-width="0.15">12 Oct 12:08</text>
<rect x="1109" y="517" width="1" height="4" fill="#fff" />
<text x="1109" y="528.5" font-size="9.5" fill="#fff" font-weight="normal" text-anchor="start" textLength="53" lengthAdjust="spacingAndGlyphs" xml:space="preserve" shape-rendering="auto" stroke="#fff" stroke-width="0.15">12 Oct 12:16</text>
<rect x="1173" y="517" width="1" height="4" fill="#fff" />
<text x="1173" y="528.5" font-size="9.5" fill="#fff" font-weight="normal" text-anchor="start" textLength="53" lengthAdjust="spacingAndGlyphs" xml:space="preserve" shape-rendering="auto" stroke="#fff" stroke-width="0.15">12 Oct 12:24</text>
<rect x="1237" y="517" width="1" height="4" fill="#fff" />
<text x="1237" y="528.5" font-size="9.5" fill="#fff" font-weight="normal" text-anchor="start" textLength="53" lengthAdjust="spacingAndGlyphs" xml:space="preserve" shape-rendering="auto" stroke="#fff" stroke-width="0.15">12 Oct 12:32</text>
<rect x="190" y="548" width="1174" height="20" fill="#f0f0f0" />
<rect x="190" y="549" width="3" height="19" fill="#f8f8f8" />
<rect x="187" y="549" width="1177" height="1" fill="#000" />
<rect x="194" y="550" width="82" height="17" fill="#fff" />
<rect x="193" y="549" width="1" height="19" fill="#000" />
<rect x="193" y="567" width="84" height="1" fill="#000" />
<rect x="276" y="549" width="1" height="19" fill="#000" />
<path d="M1338 555 l-4 3.5 l4 3.5 z M1352 555 l4 3.5 l-4 3.5 z" fill="#a0a0a0" shape-rendering="auto"/>
<text x="203" y="563" font-size="12" fill="#000" font-weight="normal" text-anchor="start" textLength="62" lengthAdjust="spacingAndGlyphs" xml:space="preserve" >EURUSD,M1</text>
<text x="289" y="563" font-size="12" fill="#8a8a8a" font-weight="normal" text-anchor="start" textLength="63" lengthAdjust="spacingAndGlyphs" xml:space="preserve" >GBPUSD,M1</text>
<rect x="365" y="552" width="1" height="12" fill="#8a8a8a" />
<text x="377" y="563" font-size="12" fill="#8a8a8a" font-weight="normal" text-anchor="start" textLength="60" lengthAdjust="spacingAndGlyphs" xml:space="preserve" >USDJPY,M1</text>
<rect x="449" y="552" width="1" height="12" fill="#8a8a8a" />
<text x="460" y="563" font-size="12" fill="#8a8a8a" font-weight="normal" text-anchor="start" textLength="65" lengthAdjust="spacingAndGlyphs" xml:space="preserve" >AUDUSD,M1</text>
<rect x="537" y="552" width="1" height="12" fill="#8a8a8a" />
<rect x="0" y="568" width="1364" height="1" fill="#c8c8c8" />
<path d="M4 576 L10 581 M10 576 L4 581" stroke="#000" stroke-width="2" shape-rendering="auto"/>
<rect x="1" y="587" width="13" height="114" fill="#cddcec" />
<defs><linearGradient id="tgr" x1="0" y1="0" x2="0" y2="1"><stop offset="0" stop-color="#cddcec"/><stop offset="1" stop-color="#dde8f4"/></linearGradient></defs>
<rect x="1" y="587" width="13" height="114" fill="url(#tgr)" />
<text x="0" y="0" font-size="12.3" fill="#000" font-weight="normal" text-anchor="start" textLength="42" lengthAdjust="spacingAndGlyphs" xml:space="preserve" transform="translate(12 699) rotate(-90)">Terminal</text>
<rect x="15" y="573" width="1347" height="105" fill="#fff" />
<rect x="15" y="573" width="1" height="106" fill="#a0a0a0" />
<rect x="15" y="573" width="1347" height="1" fill="#a0a0a0" />
<text x="22.5" y="590" font-size="12.3" fill="#000" font-weight="normal" text-anchor="start" textLength="47" lengthAdjust="spacingAndGlyphs" xml:space="preserve" >Headline</text>
<text x="754" y="590" font-size="12.3" fill="#000" font-weight="normal" text-anchor="start" textLength="27.5" lengthAdjust="spacingAndGlyphs" xml:space="preserve" >From</text>
<text x="1313" y="590" font-size="12.3" fill="#000" font-weight="normal" text-anchor="start" textLength="25.5" lengthAdjust="spacingAndGlyphs" xml:space="preserve" >Time</text>
<rect x="747" y="575" width="1" height="23" fill="#e0e0e0" />
<rect x="1213" y="575" width="1" height="23" fill="#e0e0e0" />
<rect x="17" y="598" width="1329" height="20" fill="#e9e9e9" />
<rect x="17" y="598" width="1329" height="1" fill="#c8c8c8" />
<rect x="747" y="598" width="1" height="20" fill="#c8c8c8" />
<rect x="1213" y="598" width="1" height="20" fill="#c8c8c8" />
<g shape-rendering="auto"><rect x="18.5" y="604.5" width="12" height="8" fill="#f4e6a6" stroke="#8a7a40" stroke-width="1"/><path d="M18.5 604.5 L24.5 609 L30.5 604.5" fill="none" stroke="#8a7a40" stroke-width="1"/><path d="M18.5 612.5 l4 -3.5 M30.5 612.5 l-4 -3.5" stroke="#b0a060" stroke-width=".8"/></g>
<text x="38" y="612" font-size="12.3" fill="#000" font-weight="bold" text-anchor="start" textLength="140.5" lengthAdjust="spacingAndGlyphs" xml:space="preserve" >New account registration</text>
<text x="752" y="612" font-size="12.3" fill="#000" font-weight="bold" text-anchor="start" textLength="206" lengthAdjust="spacingAndGlyphs" xml:space="preserve" >International Capital Markets Pty Ltd.</text>
<text x="1245" y="612" font-size="12.3" fill="#000" font-weight="bold" text-anchor="start" textLength="95.5" lengthAdjust="spacingAndGlyphs" xml:space="preserve" >2022.10.12 12:32</text>
<rect x="17" y="618" width="1329" height="20" fill="#ffffff" />
<rect x="17" y="618" width="1329" height="1" fill="#c8c8c8" />
<rect x="747" y="618" width="1" height="20" fill="#c8c8c8" />
<rect x="1213" y="618" width="1" height="20" fill="#c8c8c8" />
<g shape-rendering="auto"><rect x="18.5" y="624.5" width="12" height="8" fill="#f4e6a6" stroke="#8a7a40" stroke-width="1"/><path d="M18.5 624.5 L24.5 629 L30.5 624.5" fill="none" stroke="#8a7a40" stroke-width="1"/><path d="M18.5 632.5 l4 -3.5 M30.5 632.5 l-4 -3.5" stroke="#b0a060" stroke-width=".8"/></g>
<text x="38" y="632" font-size="12.3" fill="#000" font-weight="bold" text-anchor="start" textLength="56.5" lengthAdjust="spacingAndGlyphs" xml:space="preserve" >Welcome!</text>
<text x="752" y="632" font-size="12.3" fill="#000" font-weight="bold" text-anchor="start" textLength="92" lengthAdjust="spacingAndGlyphs" xml:space="preserve" >Trading Platform</text>
<text x="1245" y="632" font-size="12.3" fill="#000" font-weight="bold" text-anchor="start" textLength="95.5" lengthAdjust="spacingAndGlyphs" xml:space="preserve" >2022.10.07 15:42</text>
<rect x="17" y="638" width="1329" height="20" fill="#e9e9e9" />
<rect x="17" y="638" width="1329" height="1" fill="#c8c8c8" />
<rect x="747" y="638" width="1" height="20" fill="#c8c8c8" />
<rect x="1213" y="638" width="1" height="20" fill="#c8c8c8" />
<g shape-rendering="auto"><rect x="18.5" y="644.5" width="12" height="8" fill="#f4e6a6" stroke="#8a7a40" stroke-width="1"/><path d="M18.5 644.5 L24.5 649 L30.5 644.5" fill="none" stroke="#8a7a40" stroke-width="1"/><path d="M18.5 652.5 l4 -3.5 M30.5 652.5 l-4 -3.5" stroke="#b0a060" stroke-width=".8"/></g>
<text x="38" y="652" font-size="12.3" fill="#000" font-weight="bold" text-anchor="start" textLength="389.5" lengthAdjust="spacingAndGlyphs" xml:space="preserve" >Built-in Virtual Hosting — trading robots and signals now working 24/7</text>
<text x="752" y="652" font-size="12.3" fill="#000" font-weight="bold" text-anchor="start" textLength="92" lengthAdjust="spacingAndGlyphs" xml:space="preserve" >Trading Platform</text>
<text x="1245" y="652" font-size="12.3" fill="#000" font-weight="bold" text-anchor="start" textLength="95.5" lengthAdjust="spacingAndGlyphs" xml:space="preserve" >2022.10.07 15:42</text>
<rect x="17" y="658" width="1329" height="20" fill="#ffffff" />
<rect x="17" y="658" width="1329" height="1" fill="#c8c8c8" />
<rect x="747" y="658" width="1" height="20" fill="#c8c8c8" />
<rect x="1213" y="658" width="1" height="20" fill="#c8c8c8" />
<g shape-rendering="auto"><rect x="18.5" y="664.5" width="12" height="8" fill="#f4e6a6" stroke="#8a7a40" stroke-width="1"/><path d="M18.5 664.5 L24.5 669 L30.5 664.5" fill="none" stroke="#8a7a40" stroke-width="1"/><path d="M18.5 672.5 l4 -3.5 M30.5 672.5 l-4 -3.5" stroke="#b0a060" stroke-width=".8"/></g>
<text x="38" y="672" font-size="12.3" fill="#000" font-weight="bold" text-anchor="start" textLength="176.5" lengthAdjust="spacingAndGlyphs" xml:space="preserve" >Trading Signals and copy trading</text>
<text x="752" y="672" font-size="12.3" fill="#000" font-weight="bold" text-anchor="start" textLength="92" lengthAdjust="spacingAndGlyphs" xml:space="preserve" >Trading Platform</text>
<text x="1245" y="672" font-size="12.3" fill="#000" font-weight="bold" text-anchor="start" textLength="95.5" lengthAdjust="spacingAndGlyphs" xml:space="preserve" >2022.10.07 15:42</text>
<rect x="16" y="678" width="1346" height="1" fill="#000" />
<rect x="1346" y="575" width="16" height="103" fill="#f0f0f0" />
<rect x="1346" y="591" width="15" height="41" fill="#cdcdcd" />
<path d="M1350.5 586.5 L1353.5 582.5 L1356.5 586.5" fill="none" stroke="#606060" stroke-width="2" shape-rendering="auto"/>
<path d="M1350.5 667.5 L1353.5 671.5 L1356.5 667.5" fill="none" stroke="#606060" stroke-width="2" shape-rendering="auto"/>
<rect x="353" y="679" width="71" height="19" fill="#fff" />
<rect x="352" y="678" width="1" height="20" fill="#000" />
<rect x="352" y="697" width="72" height="1" fill="#000" />
<rect x="423" y="678" width="1" height="20" fill="#000" />
<text x="28" y="693" font-size="12.3" fill="#8a8a8a" font-weight="normal" text-anchor="start" textLength="28" lengthAdjust="spacingAndGlyphs" xml:space="preserve" >Trade</text>
<text x="77" y="693" font-size="12.3" fill="#8a8a8a" font-weight="normal" text-anchor="start" textLength="48" lengthAdjust="spacingAndGlyphs" xml:space="preserve" >Exposure</text>
<text x="145" y="693" font-size="12.3" fill="#8a8a8a" font-weight="normal" text-anchor="start" textLength="86" lengthAdjust="spacingAndGlyphs" xml:space="preserve" >Account History</text>
<text x="251" y="693" font-size="12.3" fill="#8a8a8a" font-weight="normal" text-anchor="start" textLength="29" lengthAdjust="spacingAndGlyphs" xml:space="preserve" >News</text>
<text x="282" y="697" font-size="9" fill="#e02020" font-weight="bold" text-anchor="start" textLength="10" lengthAdjust="spacingAndGlyphs" xml:space="preserve" >99</text>
<text x="312" y="693" font-size="12.3" fill="#8a8a8a" font-weight="normal" text-anchor="start" textLength="29.5" lengthAdjust="spacingAndGlyphs" xml:space="preserve" >Alerts</text>
<text x="362" y="693" font-size="12.3" fill="#000" font-weight="normal" text-anchor="start" textLength="42" lengthAdjust="spacingAndGlyphs" xml:space="preserve" >Mailbox</text>
<text x="407" y="697" font-size="9" fill="#e02020" font-weight="bold" text-anchor="start" textLength="5" lengthAdjust="spacingAndGlyphs" xml:space="preserve" >7</text>
<text x="432" y="693" font-size="12.3" fill="#8a8a8a" font-weight="normal" text-anchor="start" textLength="37" lengthAdjust="spacingAndGlyphs" xml:space="preserve" >Market</text>
<text x="471" y="697" font-size="9" fill="#e02020" font-weight="bold" text-anchor="start" textLength="14.5" lengthAdjust="spacingAndGlyphs" xml:space="preserve" >104</text>
<text x="506" y="693" font-size="12.3" fill="#8a8a8a" font-weight="normal" text-anchor="start" textLength="37" lengthAdjust="spacingAndGlyphs" xml:space="preserve" >Signals</text>
<text x="563" y="693" font-size="12.3" fill="#8a8a8a" font-weight="normal" text-anchor="start" textLength="39" lengthAdjust="spacingAndGlyphs" xml:space="preserve" >Articles</text>
<text x="604" y="697" font-size="9" fill="#e02020" font-weight="bold" text-anchor="start" textLength="4.5" lengthAdjust="spacingAndGlyphs" xml:space="preserve" >3</text>
<text x="629.5" y="693" font-size="12.3" fill="#8a8a8a" font-weight="normal" text-anchor="start" textLength="54" lengthAdjust="spacingAndGlyphs" xml:space="preserve" >Code Base</text>
<text x="704" y="693" font-size="12.3" fill="#8a8a8a" font-weight="normal" text-anchor="start" textLength="38" lengthAdjust="spacingAndGlyphs" xml:space="preserve" >Experts</text>
<text x="762" y="693" font-size="12.3" fill="#8a8a8a" font-weight="normal" text-anchor="start" textLength="37" lengthAdjust="spacingAndGlyphs" xml:space="preserve" >Journal</text>
<rect x="67" y="683" width="1" height="12" fill="#8a8a8a" />
<rect x="135" y="683" width="1" height="12" fill="#8a8a8a" />
<rect x="241" y="683" width="1" height="12" fill="#8a8a8a" />
<rect x="302" y="683" width="1" height="12" fill="#8a8a8a" />
<rect x="497" y="683" width="1" height="12" fill="#8a8a8a" />
<rect x="554" y="683" width="1" height="12" fill="#8a8a8a" />
<rect x="619" y="683" width="1" height="12" fill="#8a8a8a" />
<rect x="694" y="683" width="1" height="12" fill="#8a8a8a" />
<rect x="753" y="683" width="1" height="12" fill="#8a8a8a" />
<rect x="810" y="683" width="1" height="12" fill="#8a8a8a" />
<rect x="0" y="703" width="1364" height="1" fill="#c8c8c8" />
<text x="3" y="722" font-size="12.3" fill="#000" font-weight="normal" text-anchor="start" textLength="91" lengthAdjust="spacingAndGlyphs" xml:space="preserve" >For Help, press F1</text>
<rect x="673" y="708" width="1" height="20" fill="#c0c0c0" />
<rect x="789" y="708" width="1" height="20" fill="#c0c0c0" />
<rect x="891" y="708" width="1" height="20" fill="#c0c0c0" />
<rect x="961" y="708" width="1" height="20" fill="#c0c0c0" />
<rect x="1033" y="708" width="1" height="20" fill="#c0c0c0" />
<rect x="1101" y="708" width="1" height="20" fill="#c0c0c0" />
<rect x="1170" y="708" width="1" height="20" fill="#c0c0c0" />
<rect x="1237" y="708" width="1" height="20" fill="#c0c0c0" />
<text x="678" y="722" font-size="12.3" fill="#000" font-weight="normal" text-anchor="start" textLength="39" lengthAdjust="spacingAndGlyphs" xml:space="preserve" >Default</text>
<rect x="1242" y="711" width="2" height="13" fill="#4a6e10" />
<rect x="1242" y="721" width="2" height="3" fill="#00304e" />
<rect x="1245" y="711" width="2" height="13" fill="#4a6e10" />
<rect x="1245" y="720" width="2" height="4" fill="#00304e" />
<rect x="1248" y="711" width="2" height="13" fill="#4a6e10" />
<rect x="1248" y="719" width="2" height="5" fill="#00304e" />
<rect x="1251" y="711" width="2" height="13" fill="#4a6e10" />
<rect x="1251" y="718" width="2" height="6" fill="#00304e" />
<rect x="1254" y="711" width="2" height="13" fill="#4a6e10" />
<rect x="1254" y="717" width="2" height="7" fill="#00304e" />
<rect x="1257" y="711" width="2" height="13" fill="#4a6e10" />
<rect x="1257" y="716" width="2" height="8" fill="#00304e" />
<rect x="1260" y="711" width="2" height="13" fill="#4a6e10" />
<rect x="1260" y="715" width="2" height="9" fill="#00304e" />
<rect x="1263" y="711" width="2" height="13" fill="#4a6e10" />
<rect x="1263" y="714" width="2" height="10" fill="#00304e" />
<text x="1269" y="722" font-size="12.3" fill="#000" font-weight="normal" text-anchor="start" textLength="45" lengthAdjust="spacingAndGlyphs" xml:space="preserve" >866/2 kb</text></svg></body></html>
